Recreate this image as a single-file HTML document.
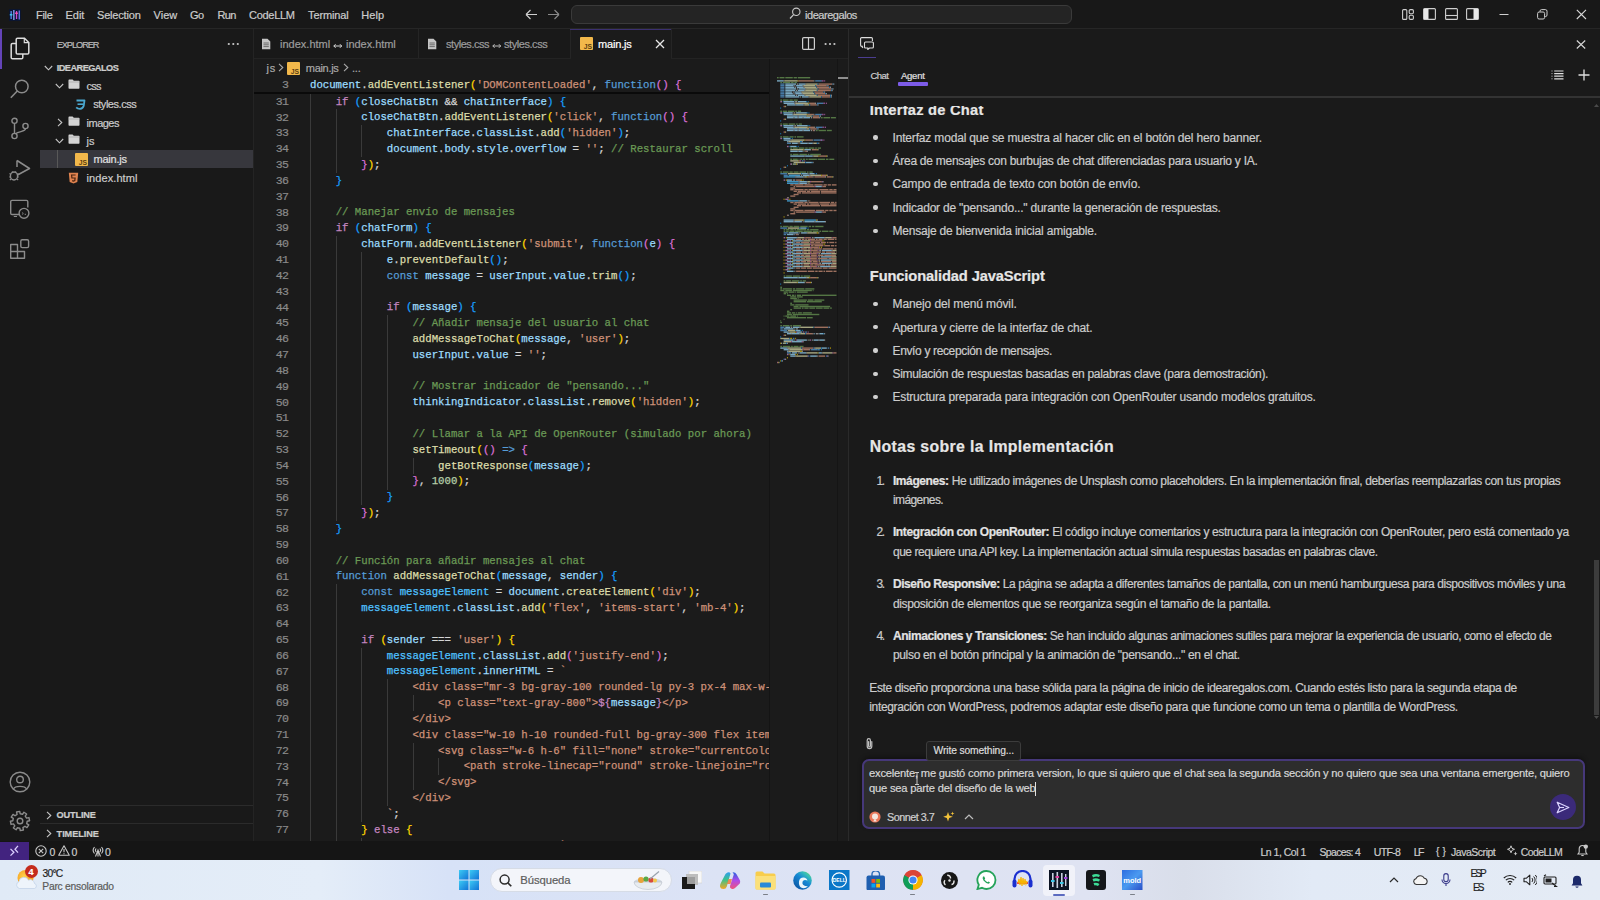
<!DOCTYPE html>
<html><head><meta charset="utf-8"><style>
html,body{margin:0;padding:0}
body{width:1600px;height:900px;overflow:hidden;position:relative;background:#1a1a1a;font-family:"Liberation Sans",sans-serif}
.t{position:absolute;white-space:pre;line-height:0;-webkit-text-stroke:0.2px currentColor}
.code{position:absolute;letter-spacing:-0.010px;white-space:pre;-webkit-text-stroke:0.25px currentColor;line-height:15.83px;height:15.83px;font-family:"Liberation Mono",monospace;font-size:10.7px;overflow:hidden}
b{font-weight:700}
</style></head><body>
<div style="position:absolute;left:0px;top:0px;width:1600px;height:28px;background:#181818;"></div>
<div style="position:absolute;left:0px;top:28px;width:1600px;height:1px;background:#262626;"></div>
<div style="position:absolute;left:0px;top:29px;width:40px;height:813px;background:#181818;"></div>
<div style="position:absolute;left:40px;top:29px;width:213px;height:813px;background:#191919;"></div>
<div style="position:absolute;left:253px;top:29px;width:1px;height:813px;background:#242424;"></div>
<div style="position:absolute;left:254px;top:29px;width:595px;height:29px;background:#191919;"></div>
<div style="position:absolute;left:254px;top:58px;width:595px;height:1px;background:#232323;"></div>
<div style="position:absolute;left:254px;top:59px;width:595px;height:783px;background:#1b1b1b;"></div>
<div style="position:absolute;left:848px;top:29px;width:1px;height:813px;background:#2a2a2a;"></div>
<div style="position:absolute;left:849px;top:29px;width:751px;height:813px;background:#1a1a1a;"></div>
<svg style="position:absolute;left:9px;top:9px;" width="12" height="12" viewBox="0 0 12 12"><rect x="0" y="0" width="12" height="12" fill="#0b1530"/><rect x="1.5" y="2" width="1.3" height="8" fill="#5b8cf0"/><rect x="4.2" y="1" width="1.3" height="10" fill="#8aa4ff"/><rect x="6.9" y="2" width="1.3" height="8" fill="#d04ad0"/><rect x="9.6" y="1.5" width="1.3" height="9" fill="#6a7cf0"/><rect x="0.8" y="5" width="2.6" height="1.5" fill="#3fc7e8"/><rect x="6.2" y="3.5" width="2.6" height="1.5" fill="#ff4fb0"/></svg>
<div class="t" id="t1" style="left:36.00px;top:14.79px;font-size:11px;color:#cccccc;font-weight:400;font-family:'Liberation Sans', sans-serif;letter-spacing:-0.311px;">File</div>
<div class="t" id="t2" style="left:65.60px;top:14.79px;font-size:11px;color:#cccccc;font-weight:400;font-family:'Liberation Sans', sans-serif;letter-spacing:-0.056px;">Edit</div>
<div class="t" id="t3" style="left:97.00px;top:14.79px;font-size:11px;color:#cccccc;font-weight:400;font-family:'Liberation Sans', sans-serif;letter-spacing:-0.183px;">Selection</div>
<div class="t" id="t4" style="left:153.50px;top:14.79px;font-size:11px;color:#cccccc;font-weight:400;font-family:'Liberation Sans', sans-serif;letter-spacing:0.048px;">View</div>
<div class="t" id="t5" style="left:189.90px;top:14.79px;font-size:11px;color:#cccccc;font-weight:400;font-family:'Liberation Sans', sans-serif;letter-spacing:-0.387px;">Go</div>
<div class="t" id="t6" style="left:217.40px;top:14.79px;font-size:11px;color:#cccccc;font-weight:400;font-family:'Liberation Sans', sans-serif;letter-spacing:-0.544px;">Run</div>
<div class="t" id="t7" style="left:249.00px;top:14.79px;font-size:11px;color:#cccccc;font-weight:400;font-family:'Liberation Sans', sans-serif;letter-spacing:-0.284px;">CodeLLM</div>
<div class="t" id="t8" style="left:308.00px;top:14.79px;font-size:11px;color:#cccccc;font-weight:400;font-family:'Liberation Sans', sans-serif;letter-spacing:-0.111px;">Terminal</div>
<div class="t" id="t9" style="left:361.30px;top:14.79px;font-size:11px;color:#cccccc;font-weight:400;font-family:'Liberation Sans', sans-serif;letter-spacing:0.058px;">Help</div>
<svg style="position:absolute;left:525px;top:9px;" width="13" height="11" viewBox="0 0 13 11"><path d="M1 5.5H12M1 5.5L5.5 1M1 5.5L5.5 10" stroke="#cfcfcf" stroke-width="1.1" fill="none"/></svg>
<svg style="position:absolute;left:547px;top:9px;" width="13" height="11" viewBox="0 0 13 11"><path d="M12 5.5H1M12 5.5L7.5 1M12 5.5L7.5 10" stroke="#8a8a8a" stroke-width="1.1" fill="none"/></svg>
<div style="position:absolute;left:571px;top:4.5px;width:501px;height:19.5px;box-sizing:border-box;border:1px solid #3a3a3a;border-radius:6px;background:#242424"></div>
<svg style="position:absolute;left:789px;top:7px;" width="12" height="13" viewBox="0 0 12 13"><circle cx="7.3" cy="4.8" r="3.7" stroke="#c8c8c8" stroke-width="1.1" fill="none"/><path d="M4.6 7.6L1 11.5" stroke="#c8c8c8" stroke-width="1.2"/></svg>
<div class="t" id="t10" style="left:805.00px;top:15.09px;font-size:11px;color:#cccccc;font-weight:400;font-family:'Liberation Sans', sans-serif;letter-spacing:-0.458px;">idearegalos</div>
<svg style="position:absolute;left:1402px;top:9px;" width="12" height="11" viewBox="0 0 12 11"><rect x="0.6" y="0.6" width="4.2" height="9.8" rx="1" stroke="#cfcfcf" fill="none" stroke-width="1.1"/><rect x="7.2" y="0.6" width="4.2" height="4.2" rx="1.2" stroke="#cfcfcf" fill="none" stroke-width="1.1"/><rect x="7.2" y="6.2" width="4.2" height="4.2" rx="1.2" stroke="#cfcfcf" fill="none" stroke-width="1.1"/></svg>
<svg style="position:absolute;left:1423px;top:8px;" width="13" height="12" viewBox="0 0 13 12"><rect x="0.6" y="0.6" width="11.8" height="10.8" rx="1" stroke="#cfcfcf" fill="none" stroke-width="1.1"/><rect x="1" y="1" width="4.5" height="10" fill="#e8e8e8"/></svg>
<svg style="position:absolute;left:1445px;top:8px;" width="13" height="12" viewBox="0 0 13 12"><rect x="0.6" y="0.6" width="11.8" height="10.8" rx="1" stroke="#cfcfcf" fill="none" stroke-width="1.1"/><path d="M1 7.5H12" stroke="#cfcfcf" stroke-width="1.1"/></svg>
<svg style="position:absolute;left:1466px;top:8px;" width="13" height="12" viewBox="0 0 13 12"><rect x="0.6" y="0.6" width="11.8" height="10.8" rx="1" stroke="#cfcfcf" fill="none" stroke-width="1.1"/><rect x="7.5" y="1" width="4.5" height="10" fill="#e8e8e8"/></svg>
<svg style="position:absolute;left:1499px;top:13px;" width="11" height="3" viewBox="0 0 11 3"><path d="M0.5 1.5H9.5" stroke="#cfcfcf" stroke-width="1"/></svg>
<svg style="position:absolute;left:1537px;top:9px;" width="11" height="11" viewBox="0 0 11 11"><rect x="0.6" y="3" width="7" height="7" rx="1.5" stroke="#cfcfcf" fill="none" stroke-width="1"/><path d="M3 2.8V2.2A1.6 1.6 0 0 1 4.6 0.6H8.4A1.6 1.6 0 0 1 10 2.2V6A1.6 1.6 0 0 1 8.4 7.6H7.8" stroke="#cfcfcf" fill="none" stroke-width="1"/></svg>
<svg style="position:absolute;left:1576px;top:9px;" width="11" height="11" viewBox="0 0 11 11"><path d="M0.8 0.8L10 10M10 0.8L0.8 10" stroke="#d8d8d8" stroke-width="1.1"/></svg>
<div style="position:absolute;left:0px;top:29px;width:2px;height:40px;background:#6444b8;"></div>
<svg style="position:absolute;left:9px;top:36px;" width="22" height="24" viewBox="0 0 22 24"><path d="M8.5 2.2H15.5L19.8 6.5V16.8A1.3 1.3 0 0 1 18.5 18.1H8.5A1.3 1.3 0 0 1 7.2 16.8V3.5A1.3 1.3 0 0 1 8.5 2.2Z" stroke="#dcdcdc" stroke-width="1.5" fill="none"/><path d="M15.3 2.4V6.7H19.6" stroke="#dcdcdc" stroke-width="1.2" fill="none"/><path d="M7.2 7.5H3.5A1.3 1.3 0 0 0 2.2 8.8V21.5A1.3 1.3 0 0 0 3.5 22.8H12.5A1.3 1.3 0 0 0 13.8 21.5V18.1" stroke="#dcdcdc" stroke-width="1.5" fill="none"/></svg>
<svg style="position:absolute;left:9px;top:78px;" width="22" height="22" viewBox="0 0 22 22"><circle cx="12.8" cy="8.5" r="6.3" stroke="#8b8b8b" stroke-width="1.5" fill="none"/><path d="M8.3 13L1.8 19.8" stroke="#8b8b8b" stroke-width="1.6"/></svg>
<svg style="position:absolute;left:9px;top:117px;" width="22" height="23" viewBox="0 0 22 23"><circle cx="5.5" cy="3.8" r="2.6" stroke="#8b8b8b" stroke-width="1.4" fill="none"/><circle cx="5.5" cy="19" r="2.6" stroke="#8b8b8b" stroke-width="1.4" fill="none"/><circle cx="16.5" cy="9" r="2.6" stroke="#8b8b8b" stroke-width="1.4" fill="none"/><path d="M5.5 6.4V16.4M16.5 11.6C16.5 15 10 14 6.5 16.8" stroke="#8b8b8b" stroke-width="1.4" fill="none"/></svg>
<svg style="position:absolute;left:8px;top:158px;" width="24" height="24" viewBox="0 0 24 24"><path d="M9 2.5L21.5 10.5L9.5 17" stroke="#8b8b8b" stroke-width="1.5" fill="none" stroke-linejoin="round"/><path d="M9 2.5V9" stroke="#8b8b8b" stroke-width="1.5"/><ellipse cx="6" cy="18" rx="3.6" ry="4" stroke="#8b8b8b" stroke-width="1.4" fill="none"/><path d="M1.5 15.5L3 16.5M1.2 19H2.6M1.8 22L3 21M10.5 15.5L9 16.5M10.8 19H9.4M10.2 22L9 21M4 13.5L5 14.6M8 13.5L7 14.6" stroke="#8b8b8b" stroke-width="1.1"/></svg>
<svg style="position:absolute;left:9px;top:199px;" width="22" height="22" viewBox="0 0 22 22"><path d="M10 15.5H3A1.3 1.3 0 0 1 1.7 14.2V2.7A1.3 1.3 0 0 1 3 1.4H17.5A1.3 1.3 0 0 1 18.8 2.7V8.5" stroke="#8b8b8b" stroke-width="1.4" fill="none"/><circle cx="15" cy="14.3" r="4.9" stroke="#8b8b8b" stroke-width="1.4" fill="none"/><path d="M13.2 13.6L14.3 14.5L13.2 15.4M15.7 15.3H17" stroke="#8b8b8b" stroke-width="1" fill="none"/><path d="M4.8 17.5H8" stroke="#8b8b8b" stroke-width="1"/></svg>
<svg style="position:absolute;left:9px;top:238px;" width="22" height="22" viewBox="0 0 22 22"><path d="M1.7 6.5H8.5V13.5H15.5V20.3H1.7Z M1.7 13.5H8.5V20.3" stroke="#8b8b8b" stroke-width="1.4" fill="none" stroke-linejoin="round"/><rect x="11.8" y="1.8" width="7.8" height="7.8" rx="1.4" stroke="#8b8b8b" stroke-width="1.4" fill="none"/></svg>
<svg style="position:absolute;left:9px;top:771px;" width="22" height="22" viewBox="0 0 22 22"><circle cx="11" cy="11" r="9.8" stroke="#8b8b8b" stroke-width="1.4" fill="none"/><circle cx="11" cy="8.5" r="3.3" stroke="#8b8b8b" stroke-width="1.4" fill="none"/><path d="M4.5 18C6 14.5 16 14.5 17.5 18" stroke="#8b8b8b" stroke-width="1.4" fill="none"/></svg>
<svg style="position:absolute;left:9px;top:810px;" width="22" height="22" viewBox="0 0 22 22"><polygon points="19.96,7.56 20.60,10.75 18.20,11.19 17.72,13.58 19.77,14.91 17.96,17.61 15.96,16.22 13.93,17.58 14.44,19.96 11.25,20.60 10.81,18.20 8.42,17.72 7.09,19.77 4.39,17.96 5.78,15.96 4.42,13.93 2.04,14.44 1.40,11.25 3.80,10.81 4.28,8.42 2.23,7.09 4.04,4.39 6.04,5.78 8.07,4.42 7.56,2.04 10.75,1.40 11.19,3.80 13.58,4.28 14.91,2.23 17.61,4.04 16.22,6.04 17.58,8.07" stroke="#8b8b8b" stroke-width="1.4" fill="none" stroke-linejoin="round"/><circle cx="11" cy="11" r="2.8" stroke="#8b8b8b" stroke-width="1.4" fill="none"/></svg>
<div class="t" id="t11" style="left:56.70px;top:45.01px;font-size:9.2px;color:#bbbbbb;font-weight:400;font-family:'Liberation Sans', sans-serif;letter-spacing:-1.035px;">EXPLORER</div>
<svg style="position:absolute;left:227px;top:42px;" width="13" height="4" viewBox="0 0 13 4"><circle cx="1.8" cy="2" r="1.1" fill="#c8c8c8"/><circle cx="6.3" cy="2" r="1.1" fill="#c8c8c8"/><circle cx="10.8" cy="2" r="1.1" fill="#c8c8c8"/></svg>
<svg style="position:absolute;left:44px;top:64.5px;" width="9" height="6" viewBox="0 0 9 6"><path d="M0.8 1L4.5 4.8L8.2 1" stroke="#c5c5c5" stroke-width="1.1" fill="none"/></svg>
<div class="t" id="t12" style="left:56.70px;top:68.11px;font-size:9.2px;color:#cccccc;font-weight:700;font-family:'Liberation Sans', sans-serif;letter-spacing:-0.529px;">IDEAREGALOS</div>
<svg style="position:absolute;left:55px;top:83px;" width="9" height="6" viewBox="0 0 9 6"><path d="M0.8 1L4.5 4.8L8.2 1" stroke="#c5c5c5" stroke-width="1.1" fill="none"/></svg>
<svg style="position:absolute;left:68px;top:79.0px;" width="12" height="10" viewBox="0 0 12 10"><path d="M0.5 1.2A0.7 0.7 0 0 1 1.2 0.5H4.6L5.8 1.8H10.8A0.7 0.7 0 0 1 11.5 2.5V9A0.7 0.7 0 0 1 10.8 9.7H1.2A0.7 0.7 0 0 1 0.5 9Z" fill="#d4d4d4"/><path d="M0.5 3H11.5" stroke="#9a9a9a" stroke-width="0.6"/></svg>
<div class="t" id="t13" style="left:86.60px;top:85.69px;font-size:11px;color:#cccccc;font-weight:400;font-family:'Liberation Sans', sans-serif;letter-spacing:-0.850px;">css</div>
<svg style="position:absolute;left:74.5px;top:98.5px;" width="11" height="11" viewBox="0 0 11 11"><path d="M1.5 1.5H9.5L8.8 6.5Q8.2 9.5 5 9.8Q2.5 9.8 1.2 8.3" stroke="#4aa8d0" stroke-width="1.8" fill="none" stroke-linejoin="round"/><path d="M2.5 5.2H8.6" stroke="#4aa8d0" stroke-width="1.6"/></svg>
<div class="t" id="t14" style="left:93.20px;top:104.39px;font-size:11px;color:#cccccc;font-weight:400;font-family:'Liberation Sans', sans-serif;letter-spacing:-0.454px;">styles.css</div>
<svg style="position:absolute;left:57px;top:118.0px;" width="6" height="9" viewBox="0 0 6 9"><path d="M1 0.8L4.8 4.5L1 8.2" stroke="#c5c5c5" stroke-width="1.1" fill="none"/></svg>
<svg style="position:absolute;left:68px;top:116.0px;" width="12" height="10" viewBox="0 0 12 10"><path d="M0.5 1.2A0.7 0.7 0 0 1 1.2 0.5H4.6L5.8 1.8H10.8A0.7 0.7 0 0 1 11.5 2.5V9A0.7 0.7 0 0 1 10.8 9.7H1.2A0.7 0.7 0 0 1 0.5 9Z" fill="#d4d4d4"/><path d="M0.5 3H11.5" stroke="#9a9a9a" stroke-width="0.6"/></svg>
<div class="t" id="t15" style="left:86.60px;top:122.69px;font-size:11px;color:#cccccc;font-weight:400;font-family:'Liberation Sans', sans-serif;letter-spacing:-0.534px;">images</div>
<svg style="position:absolute;left:55px;top:137.5px;" width="9" height="6" viewBox="0 0 9 6"><path d="M0.8 1L4.5 4.8L8.2 1" stroke="#c5c5c5" stroke-width="1.1" fill="none"/></svg>
<svg style="position:absolute;left:68px;top:134.0px;" width="12" height="10" viewBox="0 0 12 10"><path d="M0.5 1.2A0.7 0.7 0 0 1 1.2 0.5H4.6L5.8 1.8H10.8A0.7 0.7 0 0 1 11.5 2.5V9A0.7 0.7 0 0 1 10.8 9.7H1.2A0.7 0.7 0 0 1 0.5 9Z" fill="#d4d4d4"/><path d="M0.5 3H11.5" stroke="#9a9a9a" stroke-width="0.6"/></svg>
<div class="t" id="t16" style="left:86.60px;top:140.69px;font-size:11px;color:#cccccc;font-weight:400;font-family:'Liberation Sans', sans-serif;letter-spacing:-0.153px;">js</div>
<div style="position:absolute;left:40px;top:150px;width:213px;height:18px;background:#37373d;"></div>
<div style="position:absolute;left:57px;top:150px;width:1px;height:18px;background:#585858;"></div>
<svg style="position:absolute;left:75px;top:153px;" width="13" height="13" viewBox="0 0 13 13"><rect width="13" height="13" rx="1" fill="#f2b84b"/><text x="12" y="11.6" font-family="Liberation Sans" font-size="6.8" fill="#5a3e10" text-anchor="end" font-weight="bold">JS</text></svg>
<div class="t" id="t17" style="left:93.60px;top:159.19px;font-size:11px;color:#e0e0e0;font-weight:400;font-family:'Liberation Sans', sans-serif;letter-spacing:-0.257px;">main.js</div>
<svg style="position:absolute;left:67.5px;top:171.5px;" width="11" height="12" viewBox="0 0 11 12"><path d="M0.8 0.8H10.2L9.3 10L5.5 11.4L1.7 10Z" fill="#e0834f"/><path d="M7.6 3H3.6L3.9 6H7.1L6.8 8.6L5.5 9.1L4.2 8.6" stroke="#4a2410" stroke-width="1.2" fill="none"/></svg>
<div class="t" id="t18" style="left:86.60px;top:177.79px;font-size:11px;color:#cccccc;font-weight:400;font-family:'Liberation Sans', sans-serif;letter-spacing:0.073px;">index.html</div>
<div style="position:absolute;left:40px;top:805px;width:213px;height:1px;background:#2b2b2b;"></div>
<div style="position:absolute;left:40px;top:823px;width:213px;height:1px;background:#2b2b2b;"></div>
<svg style="position:absolute;left:46px;top:810.5px;" width="6" height="9" viewBox="0 0 6 9"><path d="M1 0.8L4.8 4.5L1 8.2" stroke="#c5c5c5" stroke-width="1.1" fill="none"/></svg>
<div class="t" id="t19" style="left:56.60px;top:815.41px;font-size:9.2px;color:#cccccc;font-weight:700;font-family:'Liberation Sans', sans-serif;letter-spacing:-0.171px;">OUTLINE</div>
<svg style="position:absolute;left:46px;top:828.7px;" width="6" height="9" viewBox="0 0 6 9"><path d="M1 0.8L4.8 4.5L1 8.2" stroke="#c5c5c5" stroke-width="1.1" fill="none"/></svg>
<div class="t" id="t20" style="left:56.60px;top:833.61px;font-size:9.2px;color:#cccccc;font-weight:700;font-family:'Liberation Sans', sans-serif;letter-spacing:-0.068px;">TIMELINE</div>
<div style="position:absolute;left:418px;top:29px;width:1px;height:29px;background:#252525;"></div>
<div style="position:absolute;left:570px;top:29px;width:1px;height:29px;background:#252525;"></div>
<div style="position:absolute;left:570px;top:28.5px;width:101px;height:1.5px;background:#3b3070;"></div>
<div style="position:absolute;left:571px;top:30px;width:100px;height:29px;background:#1b1b1b;"></div>
<div style="position:absolute;left:671px;top:29px;width:1px;height:29px;background:#252525;"></div>
<svg style="position:absolute;left:261px;top:38px;" width="10" height="12" viewBox="0 0 10 12"><path d="M1 0.7H6.5L9.3 3.5V11.3H1Z" fill="#c5c5c5"/><path d="M2.5 5H7.8M2.5 6.8H7.8M2.5 8.6H7.8" stroke="#555" stroke-width="0.8"/></svg>
<div class="t" id="t21" style="left:280.00px;top:44.49px;font-size:11px;color:#9d9d9d;font-weight:400;font-family:'Liberation Sans', sans-serif;letter-spacing:0.007px;">index.html</div>
<svg style="position:absolute;left:333px;top:42.5px;" width="9.5" height="6" viewBox="0 0 9.5 6"><path d="M0.8 3H8.7M2.6 1.2L0.8 3L2.6 4.8M6.9 1.2L8.7 3L6.9 4.8" stroke="#d8d8d8" stroke-width="1" fill="none"/></svg>
<div class="t" id="t22" style="left:346.00px;top:44.49px;font-size:11px;color:#9d9d9d;font-weight:400;font-family:'Liberation Sans', sans-serif;letter-spacing:-0.038px;">index.html</div>
<svg style="position:absolute;left:427px;top:38px;" width="10" height="12" viewBox="0 0 10 12"><path d="M1 0.7H6.5L9.3 3.5V11.3H1Z" fill="#c5c5c5"/><path d="M2.5 5H7.8M2.5 6.8H7.8M2.5 8.6H7.8" stroke="#555" stroke-width="0.8"/></svg>
<div class="t" id="t23" style="left:446.00px;top:44.49px;font-size:11px;color:#9d9d9d;font-weight:400;font-family:'Liberation Sans', sans-serif;letter-spacing:-0.454px;">styles.css</div>
<svg style="position:absolute;left:492px;top:42.5px;" width="9.5" height="6" viewBox="0 0 9.5 6"><path d="M0.8 3H8.7M2.6 1.2L0.8 3L2.6 4.8M6.9 1.2L8.7 3L6.9 4.8" stroke="#bdbdbd" stroke-width="1" fill="none"/></svg>
<div class="t" id="t24" style="left:504.00px;top:44.49px;font-size:11px;color:#9d9d9d;font-weight:400;font-family:'Liberation Sans', sans-serif;letter-spacing:-0.443px;">styles.css</div>
<svg style="position:absolute;left:579.6px;top:37.4px;" width="13" height="13" viewBox="0 0 13 13"><rect width="13" height="13" rx="1" fill="#f2b84b"/><text x="12" y="11.6" font-family="Liberation Sans" font-size="6.8" fill="#5a3e10" text-anchor="end" font-weight="bold">JS</text></svg>
<div class="t" id="t25" style="left:598.00px;top:44.49px;font-size:11px;color:#ffffff;font-weight:400;font-family:'Liberation Sans', sans-serif;letter-spacing:-0.174px;">main.js</div>
<svg style="position:absolute;left:654.5px;top:39px;" width="10" height="10" viewBox="0 0 10 10"><path d="M1 1L9 9M9 1L1 9" stroke="#e8e8e8" stroke-width="1.3"/></svg>
<svg style="position:absolute;left:802px;top:37px;" width="13" height="13" viewBox="0 0 13 13"><rect x="0.6" y="0.6" width="11.8" height="11.8" rx="1.2" stroke="#cfcfcf" stroke-width="1.2" fill="none"/><path d="M6.5 1V12.5" stroke="#cfcfcf" stroke-width="1.2"/></svg>
<svg style="position:absolute;left:824px;top:42px;" width="12" height="4" viewBox="0 0 12 4"><circle cx="1.6" cy="2" r="1.1" fill="#c8c8c8"/><circle cx="6" cy="2" r="1.1" fill="#c8c8c8"/><circle cx="10.4" cy="2" r="1.1" fill="#c8c8c8"/></svg>
<div class="t" id="t26" style="left:266.50px;top:67.69px;font-size:11px;color:#a9a9a9;font-weight:400;font-family:'Liberation Sans', sans-serif;letter-spacing:0.847px;">js</div>
<svg style="position:absolute;left:278px;top:63.0px;" width="6" height="9" viewBox="0 0 6 9"><path d="M1 0.8L4.8 4.5L1 8.2" stroke="#a9a9a9" stroke-width="1.1" fill="none"/></svg>
<svg style="position:absolute;left:287px;top:61.5px;" width="13" height="13" viewBox="0 0 13 13"><rect width="13" height="13" rx="1" fill="#f2b84b"/><text x="12" y="11.6" font-family="Liberation Sans" font-size="6.8" fill="#5a3e10" text-anchor="end" font-weight="bold">JS</text></svg>
<div class="t" id="t27" style="left:305.80px;top:67.69px;font-size:11px;color:#a9a9a9;font-weight:400;font-family:'Liberation Sans', sans-serif;letter-spacing:-0.307px;">main.js</div>
<svg style="position:absolute;left:343px;top:63.0px;" width="6" height="9" viewBox="0 0 6 9"><path d="M1 0.8L4.8 4.5L1 8.2" stroke="#a9a9a9" stroke-width="1.1" fill="none"/></svg>
<div class="t" id="t28" style="left:352.00px;top:67.69px;font-size:11px;color:#a9a9a9;font-weight:400;font-family:'Liberation Sans', sans-serif;letter-spacing:-0.186px;">...</div>
<div style="position:absolute;left:310.00px;top:93.60px;width:1px;height:16.13px;background:#3a3a3a;"></div>
<div style="position:absolute;left:310.00px;top:109.43px;width:1px;height:16.13px;background:#3a3a3a;"></div>
<div style="position:absolute;left:335.64px;top:109.43px;width:1px;height:16.13px;background:#3a3a3a;"></div>
<div style="position:absolute;left:310.00px;top:125.26px;width:1px;height:16.13px;background:#3a3a3a;"></div>
<div style="position:absolute;left:335.64px;top:125.26px;width:1px;height:16.13px;background:#3a3a3a;"></div>
<div style="position:absolute;left:361.28px;top:125.26px;width:1px;height:16.13px;background:#3a3a3a;"></div>
<div style="position:absolute;left:310.00px;top:141.09px;width:1px;height:16.13px;background:#3a3a3a;"></div>
<div style="position:absolute;left:335.64px;top:141.09px;width:1px;height:16.13px;background:#3a3a3a;"></div>
<div style="position:absolute;left:361.28px;top:141.09px;width:1px;height:16.13px;background:#3a3a3a;"></div>
<div style="position:absolute;left:310.00px;top:156.92px;width:1px;height:16.13px;background:#3a3a3a;"></div>
<div style="position:absolute;left:335.64px;top:156.92px;width:1px;height:16.13px;background:#3a3a3a;"></div>
<div style="position:absolute;left:310.00px;top:172.75px;width:1px;height:16.13px;background:#3a3a3a;"></div>
<div style="position:absolute;left:310.00px;top:188.58px;width:1px;height:16.13px;background:#3a3a3a;"></div>
<div style="position:absolute;left:310.00px;top:204.41px;width:1px;height:16.13px;background:#3a3a3a;"></div>
<div style="position:absolute;left:310.00px;top:220.24px;width:1px;height:16.13px;background:#3a3a3a;"></div>
<div style="position:absolute;left:310.00px;top:236.07px;width:1px;height:16.13px;background:#3a3a3a;"></div>
<div style="position:absolute;left:335.64px;top:236.07px;width:1px;height:16.13px;background:#3a3a3a;"></div>
<div style="position:absolute;left:310.00px;top:251.90px;width:1px;height:16.13px;background:#3a3a3a;"></div>
<div style="position:absolute;left:335.64px;top:251.90px;width:1px;height:16.13px;background:#3a3a3a;"></div>
<div style="position:absolute;left:361.28px;top:251.90px;width:1px;height:16.13px;background:#3a3a3a;"></div>
<div style="position:absolute;left:310.00px;top:267.73px;width:1px;height:16.13px;background:#3a3a3a;"></div>
<div style="position:absolute;left:335.64px;top:267.73px;width:1px;height:16.13px;background:#3a3a3a;"></div>
<div style="position:absolute;left:361.28px;top:267.73px;width:1px;height:16.13px;background:#3a3a3a;"></div>
<div style="position:absolute;left:310.00px;top:283.56px;width:1px;height:16.13px;background:#3a3a3a;"></div>
<div style="position:absolute;left:335.64px;top:283.56px;width:1px;height:16.13px;background:#3a3a3a;"></div>
<div style="position:absolute;left:361.28px;top:283.56px;width:1px;height:16.13px;background:#3a3a3a;"></div>
<div style="position:absolute;left:310.00px;top:299.39px;width:1px;height:16.13px;background:#3a3a3a;"></div>
<div style="position:absolute;left:335.64px;top:299.39px;width:1px;height:16.13px;background:#3a3a3a;"></div>
<div style="position:absolute;left:361.28px;top:299.39px;width:1px;height:16.13px;background:#3a3a3a;"></div>
<div style="position:absolute;left:310.00px;top:315.22px;width:1px;height:16.13px;background:#3a3a3a;"></div>
<div style="position:absolute;left:335.64px;top:315.22px;width:1px;height:16.13px;background:#3a3a3a;"></div>
<div style="position:absolute;left:361.28px;top:315.22px;width:1px;height:16.13px;background:#3a3a3a;"></div>
<div style="position:absolute;left:386.92px;top:315.22px;width:1px;height:16.13px;background:#3a3a3a;"></div>
<div style="position:absolute;left:310.00px;top:331.05px;width:1px;height:16.13px;background:#3a3a3a;"></div>
<div style="position:absolute;left:335.64px;top:331.05px;width:1px;height:16.13px;background:#3a3a3a;"></div>
<div style="position:absolute;left:361.28px;top:331.05px;width:1px;height:16.13px;background:#3a3a3a;"></div>
<div style="position:absolute;left:386.92px;top:331.05px;width:1px;height:16.13px;background:#3a3a3a;"></div>
<div style="position:absolute;left:310.00px;top:346.88px;width:1px;height:16.13px;background:#3a3a3a;"></div>
<div style="position:absolute;left:335.64px;top:346.88px;width:1px;height:16.13px;background:#3a3a3a;"></div>
<div style="position:absolute;left:361.28px;top:346.88px;width:1px;height:16.13px;background:#3a3a3a;"></div>
<div style="position:absolute;left:386.92px;top:346.88px;width:1px;height:16.13px;background:#3a3a3a;"></div>
<div style="position:absolute;left:310.00px;top:362.71px;width:1px;height:16.13px;background:#3a3a3a;"></div>
<div style="position:absolute;left:335.64px;top:362.71px;width:1px;height:16.13px;background:#3a3a3a;"></div>
<div style="position:absolute;left:361.28px;top:362.71px;width:1px;height:16.13px;background:#3a3a3a;"></div>
<div style="position:absolute;left:386.92px;top:362.71px;width:1px;height:16.13px;background:#3a3a3a;"></div>
<div style="position:absolute;left:310.00px;top:378.54px;width:1px;height:16.13px;background:#3a3a3a;"></div>
<div style="position:absolute;left:335.64px;top:378.54px;width:1px;height:16.13px;background:#3a3a3a;"></div>
<div style="position:absolute;left:361.28px;top:378.54px;width:1px;height:16.13px;background:#3a3a3a;"></div>
<div style="position:absolute;left:386.92px;top:378.54px;width:1px;height:16.13px;background:#3a3a3a;"></div>
<div style="position:absolute;left:310.00px;top:394.37px;width:1px;height:16.13px;background:#3a3a3a;"></div>
<div style="position:absolute;left:335.64px;top:394.37px;width:1px;height:16.13px;background:#3a3a3a;"></div>
<div style="position:absolute;left:361.28px;top:394.37px;width:1px;height:16.13px;background:#3a3a3a;"></div>
<div style="position:absolute;left:386.92px;top:394.37px;width:1px;height:16.13px;background:#3a3a3a;"></div>
<div style="position:absolute;left:310.00px;top:410.20px;width:1px;height:16.13px;background:#3a3a3a;"></div>
<div style="position:absolute;left:335.64px;top:410.20px;width:1px;height:16.13px;background:#3a3a3a;"></div>
<div style="position:absolute;left:361.28px;top:410.20px;width:1px;height:16.13px;background:#3a3a3a;"></div>
<div style="position:absolute;left:386.92px;top:410.20px;width:1px;height:16.13px;background:#3a3a3a;"></div>
<div style="position:absolute;left:310.00px;top:426.03px;width:1px;height:16.13px;background:#3a3a3a;"></div>
<div style="position:absolute;left:335.64px;top:426.03px;width:1px;height:16.13px;background:#3a3a3a;"></div>
<div style="position:absolute;left:361.28px;top:426.03px;width:1px;height:16.13px;background:#3a3a3a;"></div>
<div style="position:absolute;left:386.92px;top:426.03px;width:1px;height:16.13px;background:#3a3a3a;"></div>
<div style="position:absolute;left:310.00px;top:441.86px;width:1px;height:16.13px;background:#3a3a3a;"></div>
<div style="position:absolute;left:335.64px;top:441.86px;width:1px;height:16.13px;background:#3a3a3a;"></div>
<div style="position:absolute;left:361.28px;top:441.86px;width:1px;height:16.13px;background:#3a3a3a;"></div>
<div style="position:absolute;left:386.92px;top:441.86px;width:1px;height:16.13px;background:#3a3a3a;"></div>
<div style="position:absolute;left:310.00px;top:457.69px;width:1px;height:16.13px;background:#3a3a3a;"></div>
<div style="position:absolute;left:335.64px;top:457.69px;width:1px;height:16.13px;background:#3a3a3a;"></div>
<div style="position:absolute;left:361.28px;top:457.69px;width:1px;height:16.13px;background:#3a3a3a;"></div>
<div style="position:absolute;left:386.92px;top:457.69px;width:1px;height:16.13px;background:#3a3a3a;"></div>
<div style="position:absolute;left:412.56px;top:457.69px;width:1px;height:16.13px;background:#3a3a3a;"></div>
<div style="position:absolute;left:310.00px;top:473.52px;width:1px;height:16.13px;background:#3a3a3a;"></div>
<div style="position:absolute;left:335.64px;top:473.52px;width:1px;height:16.13px;background:#3a3a3a;"></div>
<div style="position:absolute;left:361.28px;top:473.52px;width:1px;height:16.13px;background:#3a3a3a;"></div>
<div style="position:absolute;left:386.92px;top:473.52px;width:1px;height:16.13px;background:#3a3a3a;"></div>
<div style="position:absolute;left:310.00px;top:489.35px;width:1px;height:16.13px;background:#3a3a3a;"></div>
<div style="position:absolute;left:335.64px;top:489.35px;width:1px;height:16.13px;background:#3a3a3a;"></div>
<div style="position:absolute;left:361.28px;top:489.35px;width:1px;height:16.13px;background:#3a3a3a;"></div>
<div style="position:absolute;left:310.00px;top:505.18px;width:1px;height:16.13px;background:#3a3a3a;"></div>
<div style="position:absolute;left:335.64px;top:505.18px;width:1px;height:16.13px;background:#3a3a3a;"></div>
<div style="position:absolute;left:310.00px;top:521.01px;width:1px;height:16.13px;background:#3a3a3a;"></div>
<div style="position:absolute;left:310.00px;top:536.84px;width:1px;height:16.13px;background:#3a3a3a;"></div>
<div style="position:absolute;left:310.00px;top:552.67px;width:1px;height:16.13px;background:#3a3a3a;"></div>
<div style="position:absolute;left:310.00px;top:568.50px;width:1px;height:16.13px;background:#3a3a3a;"></div>
<div style="position:absolute;left:310.00px;top:584.33px;width:1px;height:16.13px;background:#3a3a3a;"></div>
<div style="position:absolute;left:335.64px;top:584.33px;width:1px;height:16.13px;background:#3a3a3a;"></div>
<div style="position:absolute;left:310.00px;top:600.16px;width:1px;height:16.13px;background:#3a3a3a;"></div>
<div style="position:absolute;left:335.64px;top:600.16px;width:1px;height:16.13px;background:#3a3a3a;"></div>
<div style="position:absolute;left:310.00px;top:615.99px;width:1px;height:16.13px;background:#3a3a3a;"></div>
<div style="position:absolute;left:335.64px;top:615.99px;width:1px;height:16.13px;background:#3a3a3a;"></div>
<div style="position:absolute;left:310.00px;top:631.82px;width:1px;height:16.13px;background:#3a3a3a;"></div>
<div style="position:absolute;left:335.64px;top:631.82px;width:1px;height:16.13px;background:#3a3a3a;"></div>
<div style="position:absolute;left:310.00px;top:647.65px;width:1px;height:16.13px;background:#3a3a3a;"></div>
<div style="position:absolute;left:335.64px;top:647.65px;width:1px;height:16.13px;background:#3a3a3a;"></div>
<div style="position:absolute;left:361.28px;top:647.65px;width:1px;height:16.13px;background:#3a3a3a;"></div>
<div style="position:absolute;left:310.00px;top:663.48px;width:1px;height:16.13px;background:#3a3a3a;"></div>
<div style="position:absolute;left:335.64px;top:663.48px;width:1px;height:16.13px;background:#3a3a3a;"></div>
<div style="position:absolute;left:361.28px;top:663.48px;width:1px;height:16.13px;background:#3a3a3a;"></div>
<div style="position:absolute;left:310.00px;top:679.31px;width:1px;height:16.13px;background:#3a3a3a;"></div>
<div style="position:absolute;left:335.64px;top:679.31px;width:1px;height:16.13px;background:#3a3a3a;"></div>
<div style="position:absolute;left:361.28px;top:679.31px;width:1px;height:16.13px;background:#3a3a3a;"></div>
<div style="position:absolute;left:386.92px;top:679.31px;width:1px;height:16.13px;background:#3a3a3a;"></div>
<div style="position:absolute;left:310.00px;top:695.14px;width:1px;height:16.13px;background:#3a3a3a;"></div>
<div style="position:absolute;left:335.64px;top:695.14px;width:1px;height:16.13px;background:#3a3a3a;"></div>
<div style="position:absolute;left:361.28px;top:695.14px;width:1px;height:16.13px;background:#3a3a3a;"></div>
<div style="position:absolute;left:386.92px;top:695.14px;width:1px;height:16.13px;background:#3a3a3a;"></div>
<div style="position:absolute;left:412.56px;top:695.14px;width:1px;height:16.13px;background:#3a3a3a;"></div>
<div style="position:absolute;left:310.00px;top:710.97px;width:1px;height:16.13px;background:#3a3a3a;"></div>
<div style="position:absolute;left:335.64px;top:710.97px;width:1px;height:16.13px;background:#3a3a3a;"></div>
<div style="position:absolute;left:361.28px;top:710.97px;width:1px;height:16.13px;background:#3a3a3a;"></div>
<div style="position:absolute;left:386.92px;top:710.97px;width:1px;height:16.13px;background:#3a3a3a;"></div>
<div style="position:absolute;left:310.00px;top:726.80px;width:1px;height:16.13px;background:#3a3a3a;"></div>
<div style="position:absolute;left:335.64px;top:726.80px;width:1px;height:16.13px;background:#3a3a3a;"></div>
<div style="position:absolute;left:361.28px;top:726.80px;width:1px;height:16.13px;background:#3a3a3a;"></div>
<div style="position:absolute;left:386.92px;top:726.80px;width:1px;height:16.13px;background:#3a3a3a;"></div>
<div style="position:absolute;left:310.00px;top:742.63px;width:1px;height:16.13px;background:#3a3a3a;"></div>
<div style="position:absolute;left:335.64px;top:742.63px;width:1px;height:16.13px;background:#3a3a3a;"></div>
<div style="position:absolute;left:361.28px;top:742.63px;width:1px;height:16.13px;background:#3a3a3a;"></div>
<div style="position:absolute;left:386.92px;top:742.63px;width:1px;height:16.13px;background:#3a3a3a;"></div>
<div style="position:absolute;left:412.56px;top:742.63px;width:1px;height:16.13px;background:#3a3a3a;"></div>
<div style="position:absolute;left:310.00px;top:758.46px;width:1px;height:16.13px;background:#3a3a3a;"></div>
<div style="position:absolute;left:335.64px;top:758.46px;width:1px;height:16.13px;background:#3a3a3a;"></div>
<div style="position:absolute;left:361.28px;top:758.46px;width:1px;height:16.13px;background:#3a3a3a;"></div>
<div style="position:absolute;left:386.92px;top:758.46px;width:1px;height:16.13px;background:#3a3a3a;"></div>
<div style="position:absolute;left:412.56px;top:758.46px;width:1px;height:16.13px;background:#3a3a3a;"></div>
<div style="position:absolute;left:438.20px;top:758.46px;width:1px;height:16.13px;background:#3a3a3a;"></div>
<div style="position:absolute;left:310.00px;top:774.29px;width:1px;height:16.13px;background:#3a3a3a;"></div>
<div style="position:absolute;left:335.64px;top:774.29px;width:1px;height:16.13px;background:#3a3a3a;"></div>
<div style="position:absolute;left:361.28px;top:774.29px;width:1px;height:16.13px;background:#3a3a3a;"></div>
<div style="position:absolute;left:386.92px;top:774.29px;width:1px;height:16.13px;background:#3a3a3a;"></div>
<div style="position:absolute;left:412.56px;top:774.29px;width:1px;height:16.13px;background:#3a3a3a;"></div>
<div style="position:absolute;left:310.00px;top:790.12px;width:1px;height:16.13px;background:#3a3a3a;"></div>
<div style="position:absolute;left:335.64px;top:790.12px;width:1px;height:16.13px;background:#3a3a3a;"></div>
<div style="position:absolute;left:361.28px;top:790.12px;width:1px;height:16.13px;background:#3a3a3a;"></div>
<div style="position:absolute;left:386.92px;top:790.12px;width:1px;height:16.13px;background:#3a3a3a;"></div>
<div style="position:absolute;left:310.00px;top:805.95px;width:1px;height:16.13px;background:#3a3a3a;"></div>
<div style="position:absolute;left:335.64px;top:805.95px;width:1px;height:16.13px;background:#3a3a3a;"></div>
<div style="position:absolute;left:361.28px;top:805.95px;width:1px;height:16.13px;background:#3a3a3a;"></div>
<div style="position:absolute;left:310.00px;top:821.78px;width:1px;height:16.13px;background:#3a3a3a;"></div>
<div style="position:absolute;left:335.64px;top:821.78px;width:1px;height:16.13px;background:#3a3a3a;"></div>
<div style="position:absolute;left:310.00px;top:837.61px;width:1px;height:16.13px;background:#3a3a3a;"></div>
<div style="position:absolute;left:335.64px;top:837.61px;width:1px;height:16.13px;background:#3a3a3a;"></div>
<div style="position:absolute;left:361.28px;top:837.61px;width:1px;height:16.13px;background:#3a3a3a;"></div>
<div class="code" style="left:310.00px;top:94.54px;width:459.00px"><span style="color:#d4d4d4">    </span><span style="color:#c586c0">if</span><span style="color:#d4d4d4"> </span><span style="color:#179fff">(</span><span style="color:#9cdcfe">closeChatBtn</span><span style="color:#d4d4d4"> </span><span style="color:#d4d4d4">&amp;</span><span style="color:#d4d4d4">&amp;</span><span style="color:#d4d4d4"> </span><span style="color:#9cdcfe">chatInterface</span><span style="color:#179fff">)</span><span style="color:#d4d4d4"> </span><span style="color:#179fff">{</span></div>
<div class="t" id="t29" style="right:1311.50px;top:101.81px;font-size:11.6px;color:#8a8a8a;font-weight:400;font-family:'Liberation Mono', monospace;letter-spacing:-0.550px">31</div>
<div class="code" style="left:310.00px;top:110.37px;width:459.00px"><span style="color:#d4d4d4">        </span><span style="color:#9cdcfe">closeChatBtn</span><span style="color:#d4d4d4">.</span><span style="color:#dcdcaa">addEventListener</span><span style="color:#ffd700">(</span><span style="color:#ce9178">'click'</span><span style="color:#d4d4d4">,</span><span style="color:#d4d4d4"> </span><span style="color:#569cd6">function</span><span style="color:#da70d6">(</span><span style="color:#da70d6">)</span><span style="color:#d4d4d4"> </span><span style="color:#da70d6">{</span></div>
<div class="t" id="t30" style="right:1311.50px;top:117.64px;font-size:11.6px;color:#8a8a8a;font-weight:400;font-family:'Liberation Mono', monospace;letter-spacing:-0.550px">32</div>
<div class="code" style="left:310.00px;top:126.20px;width:459.00px"><span style="color:#d4d4d4">            </span><span style="color:#9cdcfe">chatInterface</span><span style="color:#d4d4d4">.</span><span style="color:#9cdcfe">classList</span><span style="color:#d4d4d4">.</span><span style="color:#dcdcaa">add</span><span style="color:#179fff">(</span><span style="color:#ce9178">'hidden'</span><span style="color:#179fff">)</span><span style="color:#d4d4d4">;</span></div>
<div class="t" id="t31" style="right:1311.50px;top:133.47px;font-size:11.6px;color:#8a8a8a;font-weight:400;font-family:'Liberation Mono', monospace;letter-spacing:-0.550px">33</div>
<div class="code" style="left:310.00px;top:142.03px;width:459.00px"><span style="color:#d4d4d4">            </span><span style="color:#9cdcfe">document</span><span style="color:#d4d4d4">.</span><span style="color:#9cdcfe">body</span><span style="color:#d4d4d4">.</span><span style="color:#9cdcfe">style</span><span style="color:#d4d4d4">.</span><span style="color:#9cdcfe">overflow</span><span style="color:#d4d4d4"> </span><span style="color:#d4d4d4">=</span><span style="color:#d4d4d4"> </span><span style="color:#ce9178">''</span><span style="color:#d4d4d4">;</span><span style="color:#d4d4d4"> </span><span style="color:#6a9955">// Restaurar scroll</span></div>
<div class="t" id="t32" style="right:1311.50px;top:149.30px;font-size:11.6px;color:#8a8a8a;font-weight:400;font-family:'Liberation Mono', monospace;letter-spacing:-0.550px">34</div>
<div class="code" style="left:310.00px;top:157.86px;width:459.00px"><span style="color:#d4d4d4">        </span><span style="color:#da70d6">}</span><span style="color:#ffd700">)</span><span style="color:#d4d4d4">;</span></div>
<div class="t" id="t33" style="right:1311.50px;top:165.13px;font-size:11.6px;color:#8a8a8a;font-weight:400;font-family:'Liberation Mono', monospace;letter-spacing:-0.550px">35</div>
<div class="code" style="left:310.00px;top:173.69px;width:459.00px"><span style="color:#d4d4d4">    </span><span style="color:#179fff">}</span></div>
<div class="t" id="t34" style="right:1311.50px;top:180.96px;font-size:11.6px;color:#8a8a8a;font-weight:400;font-family:'Liberation Mono', monospace;letter-spacing:-0.550px">36</div>
<div class="code" style="left:310.00px;top:189.52px;width:459.00px"></div>
<div class="t" id="t35" style="right:1311.50px;top:196.79px;font-size:11.6px;color:#8a8a8a;font-weight:400;font-family:'Liberation Mono', monospace;letter-spacing:-0.550px">37</div>
<div class="code" style="left:310.00px;top:205.35px;width:459.00px"><span style="color:#d4d4d4">    </span><span style="color:#6a9955">// Manejar envío de mensajes</span></div>
<div class="t" id="t36" style="right:1311.50px;top:212.62px;font-size:11.6px;color:#8a8a8a;font-weight:400;font-family:'Liberation Mono', monospace;letter-spacing:-0.550px">38</div>
<div class="code" style="left:310.00px;top:221.18px;width:459.00px"><span style="color:#d4d4d4">    </span><span style="color:#c586c0">if</span><span style="color:#d4d4d4"> </span><span style="color:#179fff">(</span><span style="color:#9cdcfe">chatForm</span><span style="color:#179fff">)</span><span style="color:#d4d4d4"> </span><span style="color:#179fff">{</span></div>
<div class="t" id="t37" style="right:1311.50px;top:228.45px;font-size:11.6px;color:#8a8a8a;font-weight:400;font-family:'Liberation Mono', monospace;letter-spacing:-0.550px">39</div>
<div class="code" style="left:310.00px;top:237.01px;width:459.00px"><span style="color:#d4d4d4">        </span><span style="color:#9cdcfe">chatForm</span><span style="color:#d4d4d4">.</span><span style="color:#dcdcaa">addEventListener</span><span style="color:#ffd700">(</span><span style="color:#ce9178">'submit'</span><span style="color:#d4d4d4">,</span><span style="color:#d4d4d4"> </span><span style="color:#569cd6">function</span><span style="color:#da70d6">(</span><span style="color:#9cdcfe">e</span><span style="color:#da70d6">)</span><span style="color:#d4d4d4"> </span><span style="color:#da70d6">{</span></div>
<div class="t" id="t38" style="right:1311.50px;top:244.28px;font-size:11.6px;color:#8a8a8a;font-weight:400;font-family:'Liberation Mono', monospace;letter-spacing:-0.550px">40</div>
<div class="code" style="left:310.00px;top:252.84px;width:459.00px"><span style="color:#d4d4d4">            </span><span style="color:#9cdcfe">e</span><span style="color:#d4d4d4">.</span><span style="color:#dcdcaa">preventDefault</span><span style="color:#179fff">(</span><span style="color:#179fff">)</span><span style="color:#d4d4d4">;</span></div>
<div class="t" id="t39" style="right:1311.50px;top:260.11px;font-size:11.6px;color:#8a8a8a;font-weight:400;font-family:'Liberation Mono', monospace;letter-spacing:-0.550px">41</div>
<div class="code" style="left:310.00px;top:268.67px;width:459.00px"><span style="color:#d4d4d4">            </span><span style="color:#569cd6">const</span><span style="color:#d4d4d4"> </span><span style="color:#9cdcfe">message</span><span style="color:#d4d4d4"> </span><span style="color:#d4d4d4">=</span><span style="color:#d4d4d4"> </span><span style="color:#9cdcfe">userInput</span><span style="color:#d4d4d4">.</span><span style="color:#9cdcfe">value</span><span style="color:#d4d4d4">.</span><span style="color:#dcdcaa">trim</span><span style="color:#179fff">(</span><span style="color:#179fff">)</span><span style="color:#d4d4d4">;</span></div>
<div class="t" id="t40" style="right:1311.50px;top:275.94px;font-size:11.6px;color:#8a8a8a;font-weight:400;font-family:'Liberation Mono', monospace;letter-spacing:-0.550px">42</div>
<div class="code" style="left:310.00px;top:284.50px;width:459.00px"></div>
<div class="t" id="t41" style="right:1311.50px;top:291.77px;font-size:11.6px;color:#8a8a8a;font-weight:400;font-family:'Liberation Mono', monospace;letter-spacing:-0.550px">43</div>
<div class="code" style="left:310.00px;top:300.33px;width:459.00px"><span style="color:#d4d4d4">            </span><span style="color:#c586c0">if</span><span style="color:#d4d4d4"> </span><span style="color:#179fff">(</span><span style="color:#9cdcfe">message</span><span style="color:#179fff">)</span><span style="color:#d4d4d4"> </span><span style="color:#179fff">{</span></div>
<div class="t" id="t42" style="right:1311.50px;top:307.60px;font-size:11.6px;color:#8a8a8a;font-weight:400;font-family:'Liberation Mono', monospace;letter-spacing:-0.550px">44</div>
<div class="code" style="left:310.00px;top:316.16px;width:459.00px"><span style="color:#d4d4d4">                </span><span style="color:#6a9955">// Añadir mensaje del usuario al chat</span></div>
<div class="t" id="t43" style="right:1311.50px;top:323.43px;font-size:11.6px;color:#8a8a8a;font-weight:400;font-family:'Liberation Mono', monospace;letter-spacing:-0.550px">45</div>
<div class="code" style="left:310.00px;top:331.99px;width:459.00px"><span style="color:#d4d4d4">                </span><span style="color:#dcdcaa">addMessageToChat</span><span style="color:#ffd700">(</span><span style="color:#9cdcfe">message</span><span style="color:#d4d4d4">,</span><span style="color:#d4d4d4"> </span><span style="color:#ce9178">'user'</span><span style="color:#ffd700">)</span><span style="color:#d4d4d4">;</span></div>
<div class="t" id="t44" style="right:1311.50px;top:339.26px;font-size:11.6px;color:#8a8a8a;font-weight:400;font-family:'Liberation Mono', monospace;letter-spacing:-0.550px">46</div>
<div class="code" style="left:310.00px;top:347.82px;width:459.00px"><span style="color:#d4d4d4">                </span><span style="color:#9cdcfe">userInput</span><span style="color:#d4d4d4">.</span><span style="color:#9cdcfe">value</span><span style="color:#d4d4d4"> </span><span style="color:#d4d4d4">=</span><span style="color:#d4d4d4"> </span><span style="color:#ce9178">''</span><span style="color:#d4d4d4">;</span></div>
<div class="t" id="t45" style="right:1311.50px;top:355.09px;font-size:11.6px;color:#8a8a8a;font-weight:400;font-family:'Liberation Mono', monospace;letter-spacing:-0.550px">47</div>
<div class="code" style="left:310.00px;top:363.65px;width:459.00px"></div>
<div class="t" id="t46" style="right:1311.50px;top:370.92px;font-size:11.6px;color:#8a8a8a;font-weight:400;font-family:'Liberation Mono', monospace;letter-spacing:-0.550px">48</div>
<div class="code" style="left:310.00px;top:379.48px;width:459.00px"><span style="color:#d4d4d4">                </span><span style="color:#6a9955">// Mostrar indicador de "pensando..."</span></div>
<div class="t" id="t47" style="right:1311.50px;top:386.75px;font-size:11.6px;color:#8a8a8a;font-weight:400;font-family:'Liberation Mono', monospace;letter-spacing:-0.550px">49</div>
<div class="code" style="left:310.00px;top:395.31px;width:459.00px"><span style="color:#d4d4d4">                </span><span style="color:#9cdcfe">thinkingIndicator</span><span style="color:#d4d4d4">.</span><span style="color:#9cdcfe">classList</span><span style="color:#d4d4d4">.</span><span style="color:#dcdcaa">remove</span><span style="color:#ffd700">(</span><span style="color:#ce9178">'hidden'</span><span style="color:#ffd700">)</span><span style="color:#d4d4d4">;</span></div>
<div class="t" id="t48" style="right:1311.50px;top:402.58px;font-size:11.6px;color:#8a8a8a;font-weight:400;font-family:'Liberation Mono', monospace;letter-spacing:-0.550px">50</div>
<div class="code" style="left:310.00px;top:411.14px;width:459.00px"></div>
<div class="t" id="t49" style="right:1311.50px;top:418.41px;font-size:11.6px;color:#8a8a8a;font-weight:400;font-family:'Liberation Mono', monospace;letter-spacing:-0.550px">51</div>
<div class="code" style="left:310.00px;top:426.97px;width:459.00px"><span style="color:#d4d4d4">                </span><span style="color:#6a9955">// Llamar a la API de OpenRouter (simulado por ahora)</span></div>
<div class="t" id="t50" style="right:1311.50px;top:434.24px;font-size:11.6px;color:#8a8a8a;font-weight:400;font-family:'Liberation Mono', monospace;letter-spacing:-0.550px">52</div>
<div class="code" style="left:310.00px;top:442.80px;width:459.00px"><span style="color:#d4d4d4">                </span><span style="color:#dcdcaa">setTimeout</span><span style="color:#ffd700">(</span><span style="color:#da70d6">(</span><span style="color:#da70d6">)</span><span style="color:#d4d4d4"> </span><span style="color:#569cd6">=&gt;</span><span style="color:#d4d4d4"> </span><span style="color:#da70d6">{</span></div>
<div class="t" id="t51" style="right:1311.50px;top:450.07px;font-size:11.6px;color:#8a8a8a;font-weight:400;font-family:'Liberation Mono', monospace;letter-spacing:-0.550px">53</div>
<div class="code" style="left:310.00px;top:458.63px;width:459.00px"><span style="color:#d4d4d4">                    </span><span style="color:#dcdcaa">getBotResponse</span><span style="color:#179fff">(</span><span style="color:#9cdcfe">message</span><span style="color:#179fff">)</span><span style="color:#d4d4d4">;</span></div>
<div class="t" id="t52" style="right:1311.50px;top:465.90px;font-size:11.6px;color:#8a8a8a;font-weight:400;font-family:'Liberation Mono', monospace;letter-spacing:-0.550px">54</div>
<div class="code" style="left:310.00px;top:474.46px;width:459.00px"><span style="color:#d4d4d4">                </span><span style="color:#da70d6">}</span><span style="color:#d4d4d4">,</span><span style="color:#d4d4d4"> </span><span style="color:#b5cea8">1000</span><span style="color:#ffd700">)</span><span style="color:#d4d4d4">;</span></div>
<div class="t" id="t53" style="right:1311.50px;top:481.73px;font-size:11.6px;color:#8a8a8a;font-weight:400;font-family:'Liberation Mono', monospace;letter-spacing:-0.550px">55</div>
<div class="code" style="left:310.00px;top:490.29px;width:459.00px"><span style="color:#d4d4d4">            </span><span style="color:#179fff">}</span></div>
<div class="t" id="t54" style="right:1311.50px;top:497.56px;font-size:11.6px;color:#8a8a8a;font-weight:400;font-family:'Liberation Mono', monospace;letter-spacing:-0.550px">56</div>
<div class="code" style="left:310.00px;top:506.12px;width:459.00px"><span style="color:#d4d4d4">        </span><span style="color:#da70d6">}</span><span style="color:#ffd700">)</span><span style="color:#d4d4d4">;</span></div>
<div class="t" id="t55" style="right:1311.50px;top:513.39px;font-size:11.6px;color:#8a8a8a;font-weight:400;font-family:'Liberation Mono', monospace;letter-spacing:-0.550px">57</div>
<div class="code" style="left:310.00px;top:521.95px;width:459.00px"><span style="color:#d4d4d4">    </span><span style="color:#179fff">}</span></div>
<div class="t" id="t56" style="right:1311.50px;top:529.22px;font-size:11.6px;color:#8a8a8a;font-weight:400;font-family:'Liberation Mono', monospace;letter-spacing:-0.550px">58</div>
<div class="code" style="left:310.00px;top:537.78px;width:459.00px"></div>
<div class="t" id="t57" style="right:1311.50px;top:545.05px;font-size:11.6px;color:#8a8a8a;font-weight:400;font-family:'Liberation Mono', monospace;letter-spacing:-0.550px">59</div>
<div class="code" style="left:310.00px;top:553.61px;width:459.00px"><span style="color:#d4d4d4">    </span><span style="color:#6a9955">// Función para añadir mensajes al chat</span></div>
<div class="t" id="t58" style="right:1311.50px;top:560.88px;font-size:11.6px;color:#8a8a8a;font-weight:400;font-family:'Liberation Mono', monospace;letter-spacing:-0.550px">60</div>
<div class="code" style="left:310.00px;top:569.44px;width:459.00px"><span style="color:#d4d4d4">    </span><span style="color:#569cd6">function</span><span style="color:#d4d4d4"> </span><span style="color:#dcdcaa">addMessageToChat</span><span style="color:#179fff">(</span><span style="color:#9cdcfe">message</span><span style="color:#d4d4d4">,</span><span style="color:#d4d4d4"> </span><span style="color:#9cdcfe">sender</span><span style="color:#179fff">)</span><span style="color:#d4d4d4"> </span><span style="color:#179fff">{</span></div>
<div class="t" id="t59" style="right:1311.50px;top:576.71px;font-size:11.6px;color:#8a8a8a;font-weight:400;font-family:'Liberation Mono', monospace;letter-spacing:-0.550px">61</div>
<div class="code" style="left:310.00px;top:585.27px;width:459.00px"><span style="color:#d4d4d4">        </span><span style="color:#569cd6">const</span><span style="color:#d4d4d4"> </span><span style="color:#4fc1ff">messageElement</span><span style="color:#d4d4d4"> </span><span style="color:#d4d4d4">=</span><span style="color:#d4d4d4"> </span><span style="color:#9cdcfe">document</span><span style="color:#d4d4d4">.</span><span style="color:#dcdcaa">createElement</span><span style="color:#ffd700">(</span><span style="color:#ce9178">'div'</span><span style="color:#ffd700">)</span><span style="color:#d4d4d4">;</span></div>
<div class="t" id="t60" style="right:1311.50px;top:592.54px;font-size:11.6px;color:#8a8a8a;font-weight:400;font-family:'Liberation Mono', monospace;letter-spacing:-0.550px">62</div>
<div class="code" style="left:310.00px;top:601.10px;width:459.00px"><span style="color:#d4d4d4">        </span><span style="color:#4fc1ff">messageElement</span><span style="color:#d4d4d4">.</span><span style="color:#9cdcfe">classList</span><span style="color:#d4d4d4">.</span><span style="color:#dcdcaa">add</span><span style="color:#ffd700">(</span><span style="color:#ce9178">'flex'</span><span style="color:#d4d4d4">,</span><span style="color:#d4d4d4"> </span><span style="color:#ce9178">'items-start'</span><span style="color:#d4d4d4">,</span><span style="color:#d4d4d4"> </span><span style="color:#ce9178">'mb-4'</span><span style="color:#ffd700">)</span><span style="color:#d4d4d4">;</span></div>
<div class="t" id="t61" style="right:1311.50px;top:608.37px;font-size:11.6px;color:#8a8a8a;font-weight:400;font-family:'Liberation Mono', monospace;letter-spacing:-0.550px">63</div>
<div class="code" style="left:310.00px;top:616.93px;width:459.00px"></div>
<div class="t" id="t62" style="right:1311.50px;top:624.20px;font-size:11.6px;color:#8a8a8a;font-weight:400;font-family:'Liberation Mono', monospace;letter-spacing:-0.550px">64</div>
<div class="code" style="left:310.00px;top:632.76px;width:459.00px"><span style="color:#d4d4d4">        </span><span style="color:#c586c0">if</span><span style="color:#d4d4d4"> </span><span style="color:#ffd700">(</span><span style="color:#9cdcfe">sender</span><span style="color:#d4d4d4"> </span><span style="color:#d4d4d4">=</span><span style="color:#d4d4d4">=</span><span style="color:#d4d4d4">=</span><span style="color:#d4d4d4"> </span><span style="color:#ce9178">'user'</span><span style="color:#ffd700">)</span><span style="color:#d4d4d4"> </span><span style="color:#ffd700">{</span></div>
<div class="t" id="t63" style="right:1311.50px;top:640.03px;font-size:11.6px;color:#8a8a8a;font-weight:400;font-family:'Liberation Mono', monospace;letter-spacing:-0.550px">65</div>
<div class="code" style="left:310.00px;top:648.59px;width:459.00px"><span style="color:#d4d4d4">            </span><span style="color:#4fc1ff">messageElement</span><span style="color:#d4d4d4">.</span><span style="color:#9cdcfe">classList</span><span style="color:#d4d4d4">.</span><span style="color:#dcdcaa">add</span><span style="color:#da70d6">(</span><span style="color:#ce9178">'justify-end'</span><span style="color:#da70d6">)</span><span style="color:#d4d4d4">;</span></div>
<div class="t" id="t64" style="right:1311.50px;top:655.86px;font-size:11.6px;color:#8a8a8a;font-weight:400;font-family:'Liberation Mono', monospace;letter-spacing:-0.550px">66</div>
<div class="code" style="left:310.00px;top:664.42px;width:459.00px"><span style="color:#d4d4d4">            </span><span style="color:#4fc1ff">messageElement</span><span style="color:#d4d4d4">.</span><span style="color:#9cdcfe">innerHTML</span><span style="color:#d4d4d4"> </span><span style="color:#d4d4d4">=</span><span style="color:#d4d4d4"> </span><span style="color:#ce9178">`</span></div>
<div class="t" id="t65" style="right:1311.50px;top:671.69px;font-size:11.6px;color:#8a8a8a;font-weight:400;font-family:'Liberation Mono', monospace;letter-spacing:-0.550px">67</div>
<div class="code" style="left:310.00px;top:680.25px;width:459.00px"><span style="color:#ce9178">                &lt;div class="mr-3 bg-gray-100 rounded-lg py-3 px-4 max-w-[80%]"&gt;</span></div>
<div class="t" id="t66" style="right:1311.50px;top:687.52px;font-size:11.6px;color:#8a8a8a;font-weight:400;font-family:'Liberation Mono', monospace;letter-spacing:-0.550px">68</div>
<div class="code" style="left:310.00px;top:696.08px;width:459.00px"><span style="color:#ce9178">                    &lt;p class="text-gray-800"&gt;</span><span style="color:#c586c0">${</span><span style="color:#9cdcfe">message</span><span style="color:#c586c0">}</span><span style="color:#ce9178">&lt;/p&gt;</span></div>
<div class="t" id="t67" style="right:1311.50px;top:703.35px;font-size:11.6px;color:#8a8a8a;font-weight:400;font-family:'Liberation Mono', monospace;letter-spacing:-0.550px">69</div>
<div class="code" style="left:310.00px;top:711.91px;width:459.00px"><span style="color:#ce9178">                &lt;/div&gt;</span></div>
<div class="t" id="t68" style="right:1311.50px;top:719.18px;font-size:11.6px;color:#8a8a8a;font-weight:400;font-family:'Liberation Mono', monospace;letter-spacing:-0.550px">70</div>
<div class="code" style="left:310.00px;top:727.74px;width:459.00px"><span style="color:#ce9178">                &lt;div class="w-10 h-10 rounded-full bg-gray-300 flex items-center justify-center"&gt;</span></div>
<div class="t" id="t69" style="right:1311.50px;top:735.01px;font-size:11.6px;color:#8a8a8a;font-weight:400;font-family:'Liberation Mono', monospace;letter-spacing:-0.550px">71</div>
<div class="code" style="left:310.00px;top:743.57px;width:459.00px"><span style="color:#ce9178">                    &lt;svg class="w-6 h-6" fill="none" stroke="currentColor" viewBox="0 0 24 24"&gt;</span></div>
<div class="t" id="t70" style="right:1311.50px;top:750.84px;font-size:11.6px;color:#8a8a8a;font-weight:400;font-family:'Liberation Mono', monospace;letter-spacing:-0.550px">72</div>
<div class="code" style="left:310.00px;top:759.40px;width:459.00px"><span style="color:#ce9178">                        &lt;path stroke-linecap="round" stroke-linejoin="round" stroke-width="2"&gt;</span></div>
<div class="t" id="t71" style="right:1311.50px;top:766.67px;font-size:11.6px;color:#8a8a8a;font-weight:400;font-family:'Liberation Mono', monospace;letter-spacing:-0.550px">73</div>
<div class="code" style="left:310.00px;top:775.23px;width:459.00px"><span style="color:#ce9178">                    &lt;/svg&gt;</span></div>
<div class="t" id="t72" style="right:1311.50px;top:782.50px;font-size:11.6px;color:#8a8a8a;font-weight:400;font-family:'Liberation Mono', monospace;letter-spacing:-0.550px">74</div>
<div class="code" style="left:310.00px;top:791.06px;width:459.00px"><span style="color:#ce9178">                &lt;/div&gt;</span></div>
<div class="t" id="t73" style="right:1311.50px;top:798.33px;font-size:11.6px;color:#8a8a8a;font-weight:400;font-family:'Liberation Mono', monospace;letter-spacing:-0.550px">75</div>
<div class="code" style="left:310.00px;top:806.89px;width:459.00px"><span style="color:#ce9178">            </span><span style="color:#ce9178">`</span><span style="color:#d4d4d4">;</span></div>
<div class="t" id="t74" style="right:1311.50px;top:814.16px;font-size:11.6px;color:#8a8a8a;font-weight:400;font-family:'Liberation Mono', monospace;letter-spacing:-0.550px">76</div>
<div class="code" style="left:310.00px;top:822.72px;width:459.00px"><span style="color:#d4d4d4">        </span><span style="color:#ffd700">}</span><span style="color:#d4d4d4"> </span><span style="color:#c586c0">else</span><span style="color:#d4d4d4"> </span><span style="color:#ffd700">{</span></div>
<div class="t" id="t75" style="right:1311.50px;top:829.99px;font-size:11.6px;color:#8a8a8a;font-weight:400;font-family:'Liberation Mono', monospace;letter-spacing:-0.550px">77</div>
<div class="code" style="left:310.00px;top:838.55px;width:459.00px"><span style="color:#d4d4d4">            </span><span style="color:#4fc1ff">messageElement</span><span style="color:#d4d4d4">.</span><span style="color:#9cdcfe">innerHTML</span><span style="color:#d4d4d4"> </span><span style="color:#d4d4d4">=</span><span style="color:#d4d4d4"> </span><span style="color:#ce9178">`</span></div>
<div class="t" id="t76" style="right:1311.50px;top:845.82px;font-size:11.6px;color:#8a8a8a;font-weight:400;font-family:'Liberation Mono', monospace;letter-spacing:-0.550px">78</div>
<div style="position:absolute;left:254px;top:77px;width:515px;height:16px;background:#1b1b1b;"></div>
<div style="position:absolute;left:254px;top:92px;width:515px;height:2.3px;background:#0a0a0a;"></div>
<div class="code" style="left:310.00px;top:78.04px;width:459.00px"><span style="color:#9cdcfe">document</span><span style="color:#d4d4d4">.</span><span style="color:#dcdcaa">addEventListener</span><span style="color:#ffd700">(</span><span style="color:#ce9178">'DOMContentLoaded'</span><span style="color:#d4d4d4">,</span><span style="color:#d4d4d4"> </span><span style="color:#569cd6">function</span><span style="color:#da70d6">(</span><span style="color:#da70d6">)</span><span style="color:#d4d4d4"> </span><span style="color:#da70d6">{</span></div>
<div class="t" id="t77" style="right:1311.50px;top:85.31px;font-size:11.6px;color:#8a8a8a;font-weight:400;font-family:'Liberation Mono', monospace;letter-spacing:-0.550px">3</div>
<div style="position:absolute;left:254px;top:841px;width:595px;height:1px;background:#1b1b1b;"></div>
<svg style="position:absolute;left:770px;top:70px;opacity:0.72" width="68" height="310" viewBox="0 0 68 310"><rect x="7.00" y="7.00" width="1.66" height="1.4" fill="#6a9955"/><rect x="9.49" y="7.00" width="4.98" height="1.4" fill="#6a9955"/><rect x="15.30" y="7.00" width="7.47" height="1.4" fill="#6a9955"/><rect x="23.60" y="7.00" width="3.32" height="1.4" fill="#6a9955"/><rect x="27.75" y="7.00" width="12.45" height="1.4" fill="#6a9955"/><rect x="7.00" y="10.20" width="6.64" height="1.4" fill="#9cdcfe"/><rect x="13.64" y="10.20" width="0.83" height="1.4" fill="#d4d4d4"/><rect x="14.47" y="10.20" width="13.28" height="1.4" fill="#dcdcaa"/><rect x="27.75" y="10.20" width="0.83" height="1.4" fill="#ffd700"/><rect x="28.58" y="10.20" width="14.94" height="1.4" fill="#ce9178"/><rect x="43.52" y="10.20" width="0.83" height="1.4" fill="#d4d4d4"/><rect x="45.18" y="10.20" width="6.64" height="1.4" fill="#569cd6"/><rect x="51.82" y="10.20" width="0.83" height="1.4" fill="#da70d6"/><rect x="52.65" y="10.20" width="0.83" height="1.4" fill="#da70d6"/><rect x="54.31" y="10.20" width="0.83" height="1.4" fill="#da70d6"/><rect x="10.32" y="11.80" width="1.66" height="1.4" fill="#6a9955"/><rect x="12.81" y="11.80" width="7.47" height="1.4" fill="#6a9955"/><rect x="21.11" y="11.80" width="2.49" height="1.4" fill="#6a9955"/><rect x="24.43" y="11.80" width="2.49" height="1.4" fill="#6a9955"/><rect x="10.32" y="13.40" width="4.15" height="1.4" fill="#569cd6"/><rect x="15.30" y="13.40" width="10.79" height="1.4" fill="#9cdcfe"/><rect x="26.92" y="13.40" width="0.83" height="1.4" fill="#d4d4d4"/><rect x="28.58" y="13.40" width="6.64" height="1.4" fill="#9cdcfe"/><rect x="35.22" y="13.40" width="0.83" height="1.4" fill="#d4d4d4"/><rect x="36.05" y="13.40" width="11.62" height="1.4" fill="#dcdcaa"/><rect x="47.67" y="13.40" width="0.83" height="1.4" fill="#179fff"/><rect x="48.50" y="13.40" width="14.11" height="1.4" fill="#ce9178"/><rect x="62.61" y="13.40" width="0.83" height="1.4" fill="#179fff"/><rect x="63.44" y="13.40" width="0.83" height="1.4" fill="#d4d4d4"/><rect x="10.32" y="15.00" width="4.15" height="1.4" fill="#569cd6"/><rect x="15.30" y="15.00" width="8.30" height="1.4" fill="#9cdcfe"/><rect x="24.43" y="15.00" width="0.83" height="1.4" fill="#d4d4d4"/><rect x="26.09" y="15.00" width="6.64" height="1.4" fill="#9cdcfe"/><rect x="32.73" y="15.00" width="0.83" height="1.4" fill="#d4d4d4"/><rect x="33.56" y="15.00" width="11.62" height="1.4" fill="#dcdcaa"/><rect x="45.18" y="15.00" width="0.83" height="1.4" fill="#179fff"/><rect x="46.01" y="15.00" width="10.79" height="1.4" fill="#ce9178"/><rect x="56.80" y="15.00" width="0.83" height="1.4" fill="#179fff"/><rect x="57.63" y="15.00" width="0.83" height="1.4" fill="#d4d4d4"/><rect x="10.32" y="16.60" width="4.15" height="1.4" fill="#569cd6"/><rect x="15.30" y="16.60" width="9.13" height="1.4" fill="#9cdcfe"/><rect x="25.26" y="16.60" width="0.83" height="1.4" fill="#d4d4d4"/><rect x="26.92" y="16.60" width="6.64" height="1.4" fill="#9cdcfe"/><rect x="33.56" y="16.60" width="0.83" height="1.4" fill="#d4d4d4"/><rect x="34.39" y="16.60" width="11.62" height="1.4" fill="#dcdcaa"/><rect x="46.01" y="16.60" width="0.83" height="1.4" fill="#179fff"/><rect x="46.84" y="16.60" width="12.45" height="1.4" fill="#ce9178"/><rect x="59.29" y="16.60" width="0.83" height="1.4" fill="#179fff"/><rect x="60.12" y="16.60" width="0.83" height="1.4" fill="#d4d4d4"/><rect x="10.32" y="18.20" width="4.15" height="1.4" fill="#569cd6"/><rect x="15.30" y="18.20" width="10.79" height="1.4" fill="#9cdcfe"/><rect x="26.92" y="18.20" width="0.83" height="1.4" fill="#d4d4d4"/><rect x="28.58" y="18.20" width="6.64" height="1.4" fill="#9cdcfe"/><rect x="35.22" y="18.20" width="0.83" height="1.4" fill="#d4d4d4"/><rect x="36.05" y="18.20" width="11.62" height="1.4" fill="#dcdcaa"/><rect x="47.67" y="18.20" width="0.83" height="1.4" fill="#179fff"/><rect x="48.50" y="18.20" width="13.28" height="1.4" fill="#ce9178"/><rect x="61.78" y="18.20" width="0.83" height="1.4" fill="#179fff"/><rect x="62.61" y="18.20" width="0.83" height="1.4" fill="#d4d4d4"/><rect x="10.32" y="19.80" width="4.15" height="1.4" fill="#569cd6"/><rect x="15.30" y="19.80" width="9.96" height="1.4" fill="#9cdcfe"/><rect x="26.09" y="19.80" width="0.83" height="1.4" fill="#d4d4d4"/><rect x="27.75" y="19.80" width="6.64" height="1.4" fill="#9cdcfe"/><rect x="34.39" y="19.80" width="0.83" height="1.4" fill="#d4d4d4"/><rect x="35.22" y="19.80" width="11.62" height="1.4" fill="#dcdcaa"/><rect x="46.84" y="19.80" width="0.83" height="1.4" fill="#179fff"/><rect x="47.67" y="19.80" width="13.28" height="1.4" fill="#ce9178"/><rect x="60.95" y="19.80" width="0.83" height="1.4" fill="#179fff"/><rect x="61.78" y="19.80" width="0.83" height="1.4" fill="#d4d4d4"/><rect x="10.32" y="21.40" width="4.15" height="1.4" fill="#569cd6"/><rect x="15.30" y="21.40" width="6.64" height="1.4" fill="#9cdcfe"/><rect x="22.77" y="21.40" width="0.83" height="1.4" fill="#d4d4d4"/><rect x="24.43" y="21.40" width="6.64" height="1.4" fill="#9cdcfe"/><rect x="31.07" y="21.40" width="0.83" height="1.4" fill="#d4d4d4"/><rect x="31.90" y="21.40" width="11.62" height="1.4" fill="#dcdcaa"/><rect x="43.52" y="21.40" width="0.83" height="1.4" fill="#179fff"/><rect x="44.35" y="21.40" width="9.13" height="1.4" fill="#ce9178"/><rect x="53.48" y="21.40" width="0.83" height="1.4" fill="#179fff"/><rect x="54.31" y="21.40" width="0.83" height="1.4" fill="#d4d4d4"/><rect x="10.32" y="23.00" width="4.15" height="1.4" fill="#569cd6"/><rect x="15.30" y="23.00" width="7.47" height="1.4" fill="#9cdcfe"/><rect x="23.60" y="23.00" width="0.83" height="1.4" fill="#d4d4d4"/><rect x="25.26" y="23.00" width="6.64" height="1.4" fill="#9cdcfe"/><rect x="31.90" y="23.00" width="0.83" height="1.4" fill="#d4d4d4"/><rect x="32.73" y="23.00" width="11.62" height="1.4" fill="#dcdcaa"/><rect x="44.35" y="23.00" width="0.83" height="1.4" fill="#179fff"/><rect x="45.18" y="23.00" width="9.96" height="1.4" fill="#ce9178"/><rect x="55.14" y="23.00" width="0.83" height="1.4" fill="#179fff"/><rect x="55.97" y="23.00" width="0.83" height="1.4" fill="#d4d4d4"/><rect x="10.32" y="24.60" width="4.15" height="1.4" fill="#569cd6"/><rect x="15.30" y="24.60" width="9.96" height="1.4" fill="#9cdcfe"/><rect x="26.09" y="24.60" width="0.83" height="1.4" fill="#d4d4d4"/><rect x="27.75" y="24.60" width="6.64" height="1.4" fill="#9cdcfe"/><rect x="34.39" y="24.60" width="0.83" height="1.4" fill="#d4d4d4"/><rect x="35.22" y="24.60" width="11.62" height="1.4" fill="#dcdcaa"/><rect x="46.84" y="24.60" width="0.83" height="1.4" fill="#179fff"/><rect x="47.67" y="24.60" width="12.45" height="1.4" fill="#ce9178"/><rect x="60.12" y="24.60" width="0.83" height="1.4" fill="#179fff"/><rect x="60.95" y="24.60" width="0.83" height="1.4" fill="#d4d4d4"/><rect x="10.32" y="26.20" width="4.15" height="1.4" fill="#569cd6"/><rect x="15.30" y="26.20" width="14.11" height="1.4" fill="#9cdcfe"/><rect x="30.24" y="26.20" width="0.83" height="1.4" fill="#d4d4d4"/><rect x="31.90" y="26.20" width="6.64" height="1.4" fill="#9cdcfe"/><rect x="38.54" y="26.20" width="0.83" height="1.4" fill="#d4d4d4"/><rect x="39.37" y="26.20" width="11.62" height="1.4" fill="#dcdcaa"/><rect x="50.99" y="26.20" width="0.83" height="1.4" fill="#179fff"/><rect x="51.82" y="26.20" width="8.30" height="1.4" fill="#ce9178"/><rect x="60.12" y="26.20" width="0.83" height="1.4" fill="#179fff"/><rect x="60.95" y="26.20" width="0.83" height="1.4" fill="#d4d4d4"/><rect x="10.32" y="29.40" width="1.66" height="1.4" fill="#6a9955"/><rect x="12.81" y="29.40" width="5.81" height="1.4" fill="#6a9955"/><rect x="19.45" y="29.40" width="3.32" height="1.4" fill="#6a9955"/><rect x="23.60" y="29.40" width="4.15" height="1.4" fill="#6a9955"/><rect x="10.32" y="31.00" width="1.66" height="1.4" fill="#c586c0"/><rect x="12.81" y="31.00" width="0.83" height="1.4" fill="#179fff"/><rect x="13.64" y="31.00" width="10.79" height="1.4" fill="#9cdcfe"/><rect x="25.26" y="31.00" width="0.83" height="1.4" fill="#d4d4d4"/><rect x="26.09" y="31.00" width="0.83" height="1.4" fill="#d4d4d4"/><rect x="27.75" y="31.00" width="8.30" height="1.4" fill="#9cdcfe"/><rect x="36.05" y="31.00" width="0.83" height="1.4" fill="#179fff"/><rect x="37.71" y="31.00" width="0.83" height="1.4" fill="#179fff"/><rect x="13.64" y="32.60" width="10.79" height="1.4" fill="#9cdcfe"/><rect x="24.43" y="32.60" width="0.83" height="1.4" fill="#d4d4d4"/><rect x="25.26" y="32.60" width="13.28" height="1.4" fill="#dcdcaa"/><rect x="38.54" y="32.60" width="0.83" height="1.4" fill="#ffd700"/><rect x="39.37" y="32.60" width="5.81" height="1.4" fill="#ce9178"/><rect x="45.18" y="32.60" width="0.83" height="1.4" fill="#d4d4d4"/><rect x="46.84" y="32.60" width="6.64" height="1.4" fill="#569cd6"/><rect x="53.48" y="32.60" width="0.83" height="1.4" fill="#da70d6"/><rect x="54.31" y="32.60" width="0.83" height="1.4" fill="#da70d6"/><rect x="55.97" y="32.60" width="0.83" height="1.4" fill="#da70d6"/><rect x="16.96" y="34.20" width="8.30" height="1.4" fill="#9cdcfe"/><rect x="25.26" y="34.20" width="0.83" height="1.4" fill="#d4d4d4"/><rect x="26.09" y="34.20" width="7.47" height="1.4" fill="#9cdcfe"/><rect x="33.56" y="34.20" width="0.83" height="1.4" fill="#d4d4d4"/><rect x="34.39" y="34.20" width="4.98" height="1.4" fill="#dcdcaa"/><rect x="39.37" y="34.20" width="0.83" height="1.4" fill="#179fff"/><rect x="40.20" y="34.20" width="6.64" height="1.4" fill="#ce9178"/><rect x="46.84" y="34.20" width="0.83" height="1.4" fill="#179fff"/><rect x="47.67" y="34.20" width="0.83" height="1.4" fill="#d4d4d4"/><rect x="13.64" y="35.80" width="0.83" height="1.4" fill="#da70d6"/><rect x="14.47" y="35.80" width="0.83" height="1.4" fill="#ffd700"/><rect x="15.30" y="35.80" width="0.83" height="1.4" fill="#d4d4d4"/><rect x="10.32" y="37.40" width="0.83" height="1.4" fill="#179fff"/><rect x="10.32" y="40.60" width="1.66" height="1.4" fill="#6a9955"/><rect x="12.81" y="40.60" width="4.15" height="1.4" fill="#6a9955"/><rect x="17.79" y="40.60" width="6.64" height="1.4" fill="#6a9955"/><rect x="25.26" y="40.60" width="1.66" height="1.4" fill="#6a9955"/><rect x="27.75" y="40.60" width="3.32" height="1.4" fill="#6a9955"/><rect x="10.32" y="42.20" width="1.66" height="1.4" fill="#c586c0"/><rect x="12.81" y="42.20" width="0.83" height="1.4" fill="#179fff"/><rect x="13.64" y="42.20" width="9.13" height="1.4" fill="#9cdcfe"/><rect x="23.60" y="42.20" width="0.83" height="1.4" fill="#d4d4d4"/><rect x="24.43" y="42.20" width="0.83" height="1.4" fill="#d4d4d4"/><rect x="26.09" y="42.20" width="10.79" height="1.4" fill="#9cdcfe"/><rect x="36.88" y="42.20" width="0.83" height="1.4" fill="#179fff"/><rect x="38.54" y="42.20" width="0.83" height="1.4" fill="#179fff"/><rect x="13.64" y="43.80" width="9.13" height="1.4" fill="#9cdcfe"/><rect x="22.77" y="43.80" width="0.83" height="1.4" fill="#d4d4d4"/><rect x="23.60" y="43.80" width="13.28" height="1.4" fill="#dcdcaa"/><rect x="36.88" y="43.80" width="0.83" height="1.4" fill="#ffd700"/><rect x="37.71" y="43.80" width="5.81" height="1.4" fill="#ce9178"/><rect x="43.52" y="43.80" width="0.83" height="1.4" fill="#d4d4d4"/><rect x="45.18" y="43.80" width="6.64" height="1.4" fill="#569cd6"/><rect x="51.82" y="43.80" width="0.83" height="1.4" fill="#da70d6"/><rect x="52.65" y="43.80" width="0.83" height="1.4" fill="#da70d6"/><rect x="54.31" y="43.80" width="0.83" height="1.4" fill="#da70d6"/><rect x="16.96" y="45.40" width="10.79" height="1.4" fill="#9cdcfe"/><rect x="27.75" y="45.40" width="0.83" height="1.4" fill="#d4d4d4"/><rect x="28.58" y="45.40" width="7.47" height="1.4" fill="#9cdcfe"/><rect x="36.05" y="45.40" width="0.83" height="1.4" fill="#d4d4d4"/><rect x="36.88" y="45.40" width="4.98" height="1.4" fill="#dcdcaa"/><rect x="41.86" y="45.40" width="0.83" height="1.4" fill="#179fff"/><rect x="42.69" y="45.40" width="6.64" height="1.4" fill="#ce9178"/><rect x="49.33" y="45.40" width="0.83" height="1.4" fill="#179fff"/><rect x="50.16" y="45.40" width="0.83" height="1.4" fill="#d4d4d4"/><rect x="16.96" y="47.00" width="6.64" height="1.4" fill="#9cdcfe"/><rect x="23.60" y="47.00" width="0.83" height="1.4" fill="#d4d4d4"/><rect x="24.43" y="47.00" width="3.32" height="1.4" fill="#9cdcfe"/><rect x="27.75" y="47.00" width="0.83" height="1.4" fill="#d4d4d4"/><rect x="28.58" y="47.00" width="4.15" height="1.4" fill="#9cdcfe"/><rect x="32.73" y="47.00" width="0.83" height="1.4" fill="#d4d4d4"/><rect x="33.56" y="47.00" width="6.64" height="1.4" fill="#9cdcfe"/><rect x="41.03" y="47.00" width="0.83" height="1.4" fill="#d4d4d4"/><rect x="42.69" y="47.00" width="6.64" height="1.4" fill="#ce9178"/><rect x="49.33" y="47.00" width="0.83" height="1.4" fill="#d4d4d4"/><rect x="50.99" y="47.00" width="1.66" height="1.4" fill="#6a9955"/><rect x="53.48" y="47.00" width="6.64" height="1.4" fill="#6a9955"/><rect x="60.95" y="47.00" width="4.98" height="1.4" fill="#6a9955"/><rect x="13.64" y="48.60" width="0.83" height="1.4" fill="#da70d6"/><rect x="14.47" y="48.60" width="0.83" height="1.4" fill="#ffd700"/><rect x="15.30" y="48.60" width="0.83" height="1.4" fill="#d4d4d4"/><rect x="10.32" y="50.20" width="0.83" height="1.4" fill="#179fff"/><rect x="10.32" y="53.40" width="1.66" height="1.4" fill="#6a9955"/><rect x="12.81" y="53.40" width="4.98" height="1.4" fill="#6a9955"/><rect x="18.62" y="53.40" width="6.64" height="1.4" fill="#6a9955"/><rect x="26.09" y="53.40" width="1.66" height="1.4" fill="#6a9955"/><rect x="28.58" y="53.40" width="3.32" height="1.4" fill="#6a9955"/><rect x="10.32" y="55.00" width="1.66" height="1.4" fill="#c586c0"/><rect x="12.81" y="55.00" width="0.83" height="1.4" fill="#179fff"/><rect x="13.64" y="55.00" width="9.96" height="1.4" fill="#9cdcfe"/><rect x="24.43" y="55.00" width="0.83" height="1.4" fill="#d4d4d4"/><rect x="25.26" y="55.00" width="0.83" height="1.4" fill="#d4d4d4"/><rect x="26.92" y="55.00" width="10.79" height="1.4" fill="#9cdcfe"/><rect x="37.71" y="55.00" width="0.83" height="1.4" fill="#179fff"/><rect x="39.37" y="55.00" width="0.83" height="1.4" fill="#179fff"/><rect x="13.64" y="56.60" width="9.96" height="1.4" fill="#9cdcfe"/><rect x="23.60" y="56.60" width="0.83" height="1.4" fill="#d4d4d4"/><rect x="24.43" y="56.60" width="13.28" height="1.4" fill="#dcdcaa"/><rect x="37.71" y="56.60" width="0.83" height="1.4" fill="#ffd700"/><rect x="38.54" y="56.60" width="5.81" height="1.4" fill="#ce9178"/><rect x="44.35" y="56.60" width="0.83" height="1.4" fill="#d4d4d4"/><rect x="46.01" y="56.60" width="6.64" height="1.4" fill="#569cd6"/><rect x="52.65" y="56.60" width="0.83" height="1.4" fill="#da70d6"/><rect x="53.48" y="56.60" width="0.83" height="1.4" fill="#da70d6"/><rect x="55.14" y="56.60" width="0.83" height="1.4" fill="#da70d6"/><rect x="16.96" y="58.20" width="10.79" height="1.4" fill="#9cdcfe"/><rect x="27.75" y="58.20" width="0.83" height="1.4" fill="#d4d4d4"/><rect x="28.58" y="58.20" width="7.47" height="1.4" fill="#9cdcfe"/><rect x="36.05" y="58.20" width="0.83" height="1.4" fill="#d4d4d4"/><rect x="36.88" y="58.20" width="2.49" height="1.4" fill="#dcdcaa"/><rect x="39.37" y="58.20" width="0.83" height="1.4" fill="#179fff"/><rect x="40.20" y="58.20" width="6.64" height="1.4" fill="#ce9178"/><rect x="46.84" y="58.20" width="0.83" height="1.4" fill="#179fff"/><rect x="47.67" y="58.20" width="0.83" height="1.4" fill="#d4d4d4"/><rect x="16.96" y="59.80" width="6.64" height="1.4" fill="#9cdcfe"/><rect x="23.60" y="59.80" width="0.83" height="1.4" fill="#d4d4d4"/><rect x="24.43" y="59.80" width="3.32" height="1.4" fill="#9cdcfe"/><rect x="27.75" y="59.80" width="0.83" height="1.4" fill="#d4d4d4"/><rect x="28.58" y="59.80" width="4.15" height="1.4" fill="#9cdcfe"/><rect x="32.73" y="59.80" width="0.83" height="1.4" fill="#d4d4d4"/><rect x="33.56" y="59.80" width="6.64" height="1.4" fill="#9cdcfe"/><rect x="41.03" y="59.80" width="0.83" height="1.4" fill="#d4d4d4"/><rect x="42.69" y="59.80" width="1.66" height="1.4" fill="#ce9178"/><rect x="44.35" y="59.80" width="0.83" height="1.4" fill="#d4d4d4"/><rect x="46.01" y="59.80" width="1.66" height="1.4" fill="#6a9955"/><rect x="48.50" y="59.80" width="7.47" height="1.4" fill="#6a9955"/><rect x="56.80" y="59.80" width="4.98" height="1.4" fill="#6a9955"/><rect x="13.64" y="61.40" width="0.83" height="1.4" fill="#da70d6"/><rect x="14.47" y="61.40" width="0.83" height="1.4" fill="#ffd700"/><rect x="15.30" y="61.40" width="0.83" height="1.4" fill="#d4d4d4"/><rect x="10.32" y="63.00" width="0.83" height="1.4" fill="#179fff"/><rect x="10.32" y="66.20" width="1.66" height="1.4" fill="#6a9955"/><rect x="12.81" y="66.20" width="5.81" height="1.4" fill="#6a9955"/><rect x="19.45" y="66.20" width="4.15" height="1.4" fill="#6a9955"/><rect x="24.43" y="66.20" width="1.66" height="1.4" fill="#6a9955"/><rect x="26.92" y="66.20" width="6.64" height="1.4" fill="#6a9955"/><rect x="10.32" y="67.80" width="1.66" height="1.4" fill="#c586c0"/><rect x="12.81" y="67.80" width="0.83" height="1.4" fill="#179fff"/><rect x="13.64" y="67.80" width="6.64" height="1.4" fill="#9cdcfe"/><rect x="20.28" y="67.80" width="0.83" height="1.4" fill="#179fff"/><rect x="21.94" y="67.80" width="0.83" height="1.4" fill="#179fff"/><rect x="13.64" y="69.40" width="6.64" height="1.4" fill="#9cdcfe"/><rect x="20.28" y="69.40" width="0.83" height="1.4" fill="#d4d4d4"/><rect x="21.11" y="69.40" width="13.28" height="1.4" fill="#dcdcaa"/><rect x="34.39" y="69.40" width="0.83" height="1.4" fill="#ffd700"/><rect x="35.22" y="69.40" width="6.64" height="1.4" fill="#ce9178"/><rect x="41.86" y="69.40" width="0.83" height="1.4" fill="#d4d4d4"/><rect x="43.52" y="69.40" width="6.64" height="1.4" fill="#569cd6"/><rect x="50.16" y="69.40" width="0.83" height="1.4" fill="#da70d6"/><rect x="50.99" y="69.40" width="0.83" height="1.4" fill="#9cdcfe"/><rect x="51.82" y="69.40" width="0.83" height="1.4" fill="#da70d6"/><rect x="53.48" y="69.40" width="0.83" height="1.4" fill="#da70d6"/><rect x="16.96" y="71.00" width="0.83" height="1.4" fill="#9cdcfe"/><rect x="17.79" y="71.00" width="0.83" height="1.4" fill="#d4d4d4"/><rect x="18.62" y="71.00" width="11.62" height="1.4" fill="#dcdcaa"/><rect x="30.24" y="71.00" width="0.83" height="1.4" fill="#179fff"/><rect x="31.07" y="71.00" width="0.83" height="1.4" fill="#179fff"/><rect x="31.90" y="71.00" width="0.83" height="1.4" fill="#d4d4d4"/><rect x="16.96" y="72.60" width="4.15" height="1.4" fill="#569cd6"/><rect x="21.94" y="72.60" width="5.81" height="1.4" fill="#9cdcfe"/><rect x="28.58" y="72.60" width="0.83" height="1.4" fill="#d4d4d4"/><rect x="30.24" y="72.60" width="7.47" height="1.4" fill="#9cdcfe"/><rect x="37.71" y="72.60" width="0.83" height="1.4" fill="#d4d4d4"/><rect x="38.54" y="72.60" width="4.15" height="1.4" fill="#9cdcfe"/><rect x="42.69" y="72.60" width="0.83" height="1.4" fill="#d4d4d4"/><rect x="43.52" y="72.60" width="3.32" height="1.4" fill="#dcdcaa"/><rect x="46.84" y="72.60" width="0.83" height="1.4" fill="#179fff"/><rect x="47.67" y="72.60" width="0.83" height="1.4" fill="#179fff"/><rect x="48.50" y="72.60" width="0.83" height="1.4" fill="#d4d4d4"/><rect x="16.96" y="75.80" width="1.66" height="1.4" fill="#c586c0"/><rect x="19.45" y="75.80" width="0.83" height="1.4" fill="#179fff"/><rect x="20.28" y="75.80" width="5.81" height="1.4" fill="#9cdcfe"/><rect x="26.09" y="75.80" width="0.83" height="1.4" fill="#179fff"/><rect x="27.75" y="75.80" width="0.83" height="1.4" fill="#179fff"/><rect x="20.28" y="77.40" width="1.66" height="1.4" fill="#6a9955"/><rect x="22.77" y="77.40" width="4.98" height="1.4" fill="#6a9955"/><rect x="28.58" y="77.40" width="5.81" height="1.4" fill="#6a9955"/><rect x="35.22" y="77.40" width="2.49" height="1.4" fill="#6a9955"/><rect x="38.54" y="77.40" width="5.81" height="1.4" fill="#6a9955"/><rect x="45.18" y="77.40" width="1.66" height="1.4" fill="#6a9955"/><rect x="47.67" y="77.40" width="3.32" height="1.4" fill="#6a9955"/><rect x="20.28" y="79.00" width="13.28" height="1.4" fill="#dcdcaa"/><rect x="33.56" y="79.00" width="0.83" height="1.4" fill="#ffd700"/><rect x="34.39" y="79.00" width="5.81" height="1.4" fill="#9cdcfe"/><rect x="40.20" y="79.00" width="0.83" height="1.4" fill="#d4d4d4"/><rect x="41.86" y="79.00" width="4.98" height="1.4" fill="#ce9178"/><rect x="46.84" y="79.00" width="0.83" height="1.4" fill="#ffd700"/><rect x="47.67" y="79.00" width="0.83" height="1.4" fill="#d4d4d4"/><rect x="20.28" y="80.60" width="7.47" height="1.4" fill="#9cdcfe"/><rect x="27.75" y="80.60" width="0.83" height="1.4" fill="#d4d4d4"/><rect x="28.58" y="80.60" width="4.15" height="1.4" fill="#9cdcfe"/><rect x="33.56" y="80.60" width="0.83" height="1.4" fill="#d4d4d4"/><rect x="35.22" y="80.60" width="1.66" height="1.4" fill="#ce9178"/><rect x="36.88" y="80.60" width="0.83" height="1.4" fill="#d4d4d4"/><rect x="20.28" y="83.80" width="1.66" height="1.4" fill="#6a9955"/><rect x="22.77" y="83.80" width="5.81" height="1.4" fill="#6a9955"/><rect x="29.41" y="83.80" width="7.47" height="1.4" fill="#6a9955"/><rect x="37.71" y="83.80" width="1.66" height="1.4" fill="#6a9955"/><rect x="40.20" y="83.80" width="10.79" height="1.4" fill="#6a9955"/><rect x="20.28" y="85.40" width="14.11" height="1.4" fill="#9cdcfe"/><rect x="34.39" y="85.40" width="0.83" height="1.4" fill="#d4d4d4"/><rect x="35.22" y="85.40" width="7.47" height="1.4" fill="#9cdcfe"/><rect x="42.69" y="85.40" width="0.83" height="1.4" fill="#d4d4d4"/><rect x="43.52" y="85.40" width="4.98" height="1.4" fill="#dcdcaa"/><rect x="48.50" y="85.40" width="0.83" height="1.4" fill="#ffd700"/><rect x="49.33" y="85.40" width="6.64" height="1.4" fill="#ce9178"/><rect x="55.97" y="85.40" width="0.83" height="1.4" fill="#ffd700"/><rect x="56.80" y="85.40" width="0.83" height="1.4" fill="#d4d4d4"/><rect x="20.28" y="88.60" width="1.66" height="1.4" fill="#6a9955"/><rect x="22.77" y="88.60" width="4.98" height="1.4" fill="#6a9955"/><rect x="28.58" y="88.60" width="0.83" height="1.4" fill="#6a9955"/><rect x="30.24" y="88.60" width="1.66" height="1.4" fill="#6a9955"/><rect x="32.73" y="88.60" width="2.49" height="1.4" fill="#6a9955"/><rect x="36.05" y="88.60" width="1.66" height="1.4" fill="#6a9955"/><rect x="38.54" y="88.60" width="8.30" height="1.4" fill="#6a9955"/><rect x="47.67" y="88.60" width="7.47" height="1.4" fill="#6a9955"/><rect x="55.97" y="88.60" width="2.49" height="1.4" fill="#6a9955"/><rect x="59.29" y="88.60" width="4.98" height="1.4" fill="#6a9955"/><rect x="20.28" y="90.20" width="8.30" height="1.4" fill="#dcdcaa"/><rect x="28.58" y="90.20" width="0.83" height="1.4" fill="#ffd700"/><rect x="29.41" y="90.20" width="0.83" height="1.4" fill="#da70d6"/><rect x="30.24" y="90.20" width="0.83" height="1.4" fill="#da70d6"/><rect x="31.90" y="90.20" width="1.66" height="1.4" fill="#569cd6"/><rect x="34.39" y="90.20" width="0.83" height="1.4" fill="#da70d6"/><rect x="23.60" y="91.80" width="11.62" height="1.4" fill="#dcdcaa"/><rect x="35.22" y="91.80" width="0.83" height="1.4" fill="#179fff"/><rect x="36.05" y="91.80" width="5.81" height="1.4" fill="#9cdcfe"/><rect x="41.86" y="91.80" width="0.83" height="1.4" fill="#179fff"/><rect x="42.69" y="91.80" width="0.83" height="1.4" fill="#d4d4d4"/><rect x="20.28" y="93.40" width="0.83" height="1.4" fill="#da70d6"/><rect x="21.11" y="93.40" width="0.83" height="1.4" fill="#d4d4d4"/><rect x="22.77" y="93.40" width="3.32" height="1.4" fill="#b5cea8"/><rect x="26.09" y="93.40" width="0.83" height="1.4" fill="#ffd700"/><rect x="26.92" y="93.40" width="0.83" height="1.4" fill="#d4d4d4"/><rect x="16.96" y="95.00" width="0.83" height="1.4" fill="#179fff"/><rect x="13.64" y="96.60" width="0.83" height="1.4" fill="#da70d6"/><rect x="14.47" y="96.60" width="0.83" height="1.4" fill="#ffd700"/><rect x="15.30" y="96.60" width="0.83" height="1.4" fill="#d4d4d4"/><rect x="10.32" y="98.20" width="0.83" height="1.4" fill="#179fff"/><rect x="10.32" y="101.40" width="1.66" height="1.4" fill="#6a9955"/><rect x="12.81" y="101.40" width="5.81" height="1.4" fill="#6a9955"/><rect x="19.45" y="101.40" width="3.32" height="1.4" fill="#6a9955"/><rect x="23.60" y="101.40" width="4.98" height="1.4" fill="#6a9955"/><rect x="29.41" y="101.40" width="6.64" height="1.4" fill="#6a9955"/><rect x="36.88" y="101.40" width="1.66" height="1.4" fill="#6a9955"/><rect x="39.37" y="101.40" width="3.32" height="1.4" fill="#6a9955"/><rect x="10.32" y="103.00" width="6.64" height="1.4" fill="#569cd6"/><rect x="17.79" y="103.00" width="13.28" height="1.4" fill="#dcdcaa"/><rect x="31.07" y="103.00" width="0.83" height="1.4" fill="#179fff"/><rect x="31.90" y="103.00" width="5.81" height="1.4" fill="#9cdcfe"/><rect x="37.71" y="103.00" width="0.83" height="1.4" fill="#d4d4d4"/><rect x="39.37" y="103.00" width="4.98" height="1.4" fill="#9cdcfe"/><rect x="44.35" y="103.00" width="0.83" height="1.4" fill="#179fff"/><rect x="46.01" y="103.00" width="0.83" height="1.4" fill="#179fff"/><rect x="13.64" y="104.60" width="4.15" height="1.4" fill="#569cd6"/><rect x="18.62" y="104.60" width="11.62" height="1.4" fill="#4fc1ff"/><rect x="31.07" y="104.60" width="0.83" height="1.4" fill="#d4d4d4"/><rect x="32.73" y="104.60" width="6.64" height="1.4" fill="#9cdcfe"/><rect x="39.37" y="104.60" width="0.83" height="1.4" fill="#d4d4d4"/><rect x="40.20" y="104.60" width="10.79" height="1.4" fill="#dcdcaa"/><rect x="50.99" y="104.60" width="0.83" height="1.4" fill="#ffd700"/><rect x="51.82" y="104.60" width="4.15" height="1.4" fill="#ce9178"/><rect x="55.97" y="104.60" width="0.83" height="1.4" fill="#ffd700"/><rect x="56.80" y="104.60" width="0.83" height="1.4" fill="#d4d4d4"/><rect x="13.64" y="106.20" width="11.62" height="1.4" fill="#4fc1ff"/><rect x="25.26" y="106.20" width="0.83" height="1.4" fill="#d4d4d4"/><rect x="26.09" y="106.20" width="7.47" height="1.4" fill="#9cdcfe"/><rect x="33.56" y="106.20" width="0.83" height="1.4" fill="#d4d4d4"/><rect x="34.39" y="106.20" width="2.49" height="1.4" fill="#dcdcaa"/><rect x="36.88" y="106.20" width="0.83" height="1.4" fill="#ffd700"/><rect x="37.71" y="106.20" width="4.98" height="1.4" fill="#ce9178"/><rect x="42.69" y="106.20" width="0.83" height="1.4" fill="#d4d4d4"/><rect x="44.35" y="106.20" width="10.79" height="1.4" fill="#ce9178"/><rect x="55.14" y="106.20" width="0.83" height="1.4" fill="#d4d4d4"/><rect x="56.80" y="106.20" width="4.98" height="1.4" fill="#ce9178"/><rect x="61.78" y="106.20" width="0.83" height="1.4" fill="#ffd700"/><rect x="62.61" y="106.20" width="0.83" height="1.4" fill="#d4d4d4"/><rect x="13.64" y="109.40" width="1.66" height="1.4" fill="#c586c0"/><rect x="16.13" y="109.40" width="0.83" height="1.4" fill="#ffd700"/><rect x="16.96" y="109.40" width="4.98" height="1.4" fill="#9cdcfe"/><rect x="22.77" y="109.40" width="0.83" height="1.4" fill="#d4d4d4"/><rect x="23.60" y="109.40" width="0.83" height="1.4" fill="#d4d4d4"/><rect x="24.43" y="109.40" width="0.83" height="1.4" fill="#d4d4d4"/><rect x="26.09" y="109.40" width="4.98" height="1.4" fill="#ce9178"/><rect x="31.07" y="109.40" width="0.83" height="1.4" fill="#ffd700"/><rect x="32.73" y="109.40" width="0.83" height="1.4" fill="#ffd700"/><rect x="16.96" y="111.00" width="11.62" height="1.4" fill="#4fc1ff"/><rect x="28.58" y="111.00" width="0.83" height="1.4" fill="#d4d4d4"/><rect x="29.41" y="111.00" width="7.47" height="1.4" fill="#9cdcfe"/><rect x="36.88" y="111.00" width="0.83" height="1.4" fill="#d4d4d4"/><rect x="37.71" y="111.00" width="2.49" height="1.4" fill="#dcdcaa"/><rect x="40.20" y="111.00" width="0.83" height="1.4" fill="#da70d6"/><rect x="41.03" y="111.00" width="10.79" height="1.4" fill="#ce9178"/><rect x="51.82" y="111.00" width="0.83" height="1.4" fill="#da70d6"/><rect x="52.65" y="111.00" width="0.83" height="1.4" fill="#d4d4d4"/><rect x="16.96" y="112.60" width="11.62" height="1.4" fill="#4fc1ff"/><rect x="28.58" y="112.60" width="0.83" height="1.4" fill="#d4d4d4"/><rect x="29.41" y="112.60" width="7.47" height="1.4" fill="#9cdcfe"/><rect x="37.71" y="112.60" width="0.83" height="1.4" fill="#d4d4d4"/><rect x="39.37" y="112.60" width="0.83" height="1.4" fill="#ce9178"/><rect x="20.28" y="114.20" width="3.32" height="1.4" fill="#ce9178"/><rect x="24.43" y="114.20" width="9.13" height="1.4" fill="#ce9178"/><rect x="34.39" y="114.20" width="9.13" height="1.4" fill="#ce9178"/><rect x="44.35" y="114.20" width="8.30" height="1.4" fill="#ce9178"/><rect x="53.48" y="114.20" width="3.32" height="1.4" fill="#ce9178"/><rect x="57.63" y="114.20" width="3.32" height="1.4" fill="#ce9178"/><rect x="61.78" y="114.20" width="4.72" height="1.4" fill="#ce9178"/><rect x="23.60" y="115.80" width="1.66" height="1.4" fill="#ce9178"/><rect x="26.09" y="115.80" width="18.26" height="1.4" fill="#ce9178"/><rect x="44.35" y="115.80" width="1.66" height="1.4" fill="#c586c0"/><rect x="46.01" y="115.80" width="5.81" height="1.4" fill="#9cdcfe"/><rect x="51.82" y="115.80" width="0.83" height="1.4" fill="#c586c0"/><rect x="52.65" y="115.80" width="3.32" height="1.4" fill="#ce9178"/><rect x="20.28" y="117.40" width="4.98" height="1.4" fill="#ce9178"/><rect x="20.28" y="119.00" width="3.32" height="1.4" fill="#ce9178"/><rect x="24.43" y="119.00" width="9.13" height="1.4" fill="#ce9178"/><rect x="34.39" y="119.00" width="3.32" height="1.4" fill="#ce9178"/><rect x="38.54" y="119.00" width="9.96" height="1.4" fill="#ce9178"/><rect x="49.33" y="119.00" width="9.13" height="1.4" fill="#ce9178"/><rect x="59.29" y="119.00" width="3.32" height="1.4" fill="#ce9178"/><rect x="63.44" y="119.00" width="3.06" height="1.4" fill="#ce9178"/><rect x="23.60" y="120.60" width="3.32" height="1.4" fill="#ce9178"/><rect x="27.75" y="120.60" width="8.30" height="1.4" fill="#ce9178"/><rect x="36.88" y="120.60" width="3.32" height="1.4" fill="#ce9178"/><rect x="41.03" y="120.60" width="9.13" height="1.4" fill="#ce9178"/><rect x="50.99" y="120.60" width="15.51" height="1.4" fill="#ce9178"/><rect x="26.92" y="122.20" width="4.15" height="1.4" fill="#ce9178"/><rect x="31.90" y="122.20" width="18.26" height="1.4" fill="#ce9178"/><rect x="50.99" y="122.20" width="15.51" height="1.4" fill="#ce9178"/><rect x="23.60" y="123.80" width="4.98" height="1.4" fill="#ce9178"/><rect x="20.28" y="125.40" width="4.98" height="1.4" fill="#ce9178"/><rect x="16.96" y="127.00" width="0.83" height="1.4" fill="#ce9178"/><rect x="17.79" y="127.00" width="0.83" height="1.4" fill="#d4d4d4"/><rect x="13.64" y="128.60" width="0.83" height="1.4" fill="#ffd700"/><rect x="15.30" y="128.60" width="3.32" height="1.4" fill="#c586c0"/><rect x="19.45" y="128.60" width="0.83" height="1.4" fill="#ffd700"/><rect x="16.96" y="130.20" width="11.62" height="1.4" fill="#4fc1ff"/><rect x="28.58" y="130.20" width="0.83" height="1.4" fill="#d4d4d4"/><rect x="29.41" y="130.20" width="7.47" height="1.4" fill="#9cdcfe"/><rect x="37.71" y="130.20" width="0.83" height="1.4" fill="#d4d4d4"/><rect x="39.37" y="130.20" width="0.83" height="1.4" fill="#ce9178"/><rect x="20.28" y="131.80" width="3.32" height="1.4" fill="#ce9178"/><rect x="24.43" y="131.80" width="9.13" height="1.4" fill="#ce9178"/><rect x="34.39" y="131.80" width="3.32" height="1.4" fill="#ce9178"/><rect x="38.54" y="131.80" width="9.96" height="1.4" fill="#ce9178"/><rect x="49.33" y="131.80" width="10.79" height="1.4" fill="#ce9178"/><rect x="60.95" y="131.80" width="3.32" height="1.4" fill="#ce9178"/><rect x="65.10" y="131.80" width="1.40" height="1.4" fill="#ce9178"/><rect x="23.60" y="133.40" width="3.32" height="1.4" fill="#ce9178"/><rect x="27.75" y="133.40" width="8.30" height="1.4" fill="#ce9178"/><rect x="36.88" y="133.40" width="2.49" height="1.4" fill="#ce9178"/><rect x="40.20" y="133.40" width="9.13" height="1.4" fill="#ce9178"/><rect x="50.16" y="133.40" width="9.13" height="1.4" fill="#ce9178"/><rect x="60.12" y="133.40" width="6.38" height="1.4" fill="#ce9178"/><rect x="26.92" y="135.00" width="4.15" height="1.4" fill="#ce9178"/><rect x="31.90" y="135.00" width="18.26" height="1.4" fill="#ce9178"/><rect x="50.99" y="135.00" width="15.51" height="1.4" fill="#ce9178"/><rect x="23.60" y="136.60" width="4.98" height="1.4" fill="#ce9178"/><rect x="20.28" y="138.20" width="4.98" height="1.4" fill="#ce9178"/><rect x="20.28" y="139.80" width="3.32" height="1.4" fill="#ce9178"/><rect x="24.43" y="139.80" width="9.13" height="1.4" fill="#ce9178"/><rect x="34.39" y="139.80" width="10.79" height="1.4" fill="#ce9178"/><rect x="46.01" y="139.80" width="8.30" height="1.4" fill="#ce9178"/><rect x="55.14" y="139.80" width="3.32" height="1.4" fill="#ce9178"/><rect x="59.29" y="139.80" width="3.32" height="1.4" fill="#ce9178"/><rect x="63.44" y="139.80" width="3.06" height="1.4" fill="#ce9178"/><rect x="23.60" y="141.40" width="1.66" height="1.4" fill="#ce9178"/><rect x="26.09" y="141.40" width="18.26" height="1.4" fill="#ce9178"/><rect x="44.35" y="141.40" width="1.66" height="1.4" fill="#c586c0"/><rect x="46.01" y="141.40" width="5.81" height="1.4" fill="#9cdcfe"/><rect x="51.82" y="141.40" width="0.83" height="1.4" fill="#c586c0"/><rect x="52.65" y="141.40" width="3.32" height="1.4" fill="#ce9178"/><rect x="20.28" y="143.00" width="4.98" height="1.4" fill="#ce9178"/><rect x="16.96" y="144.60" width="0.83" height="1.4" fill="#ce9178"/><rect x="17.79" y="144.60" width="0.83" height="1.4" fill="#d4d4d4"/><rect x="13.64" y="146.20" width="0.83" height="1.4" fill="#ffd700"/><rect x="13.64" y="149.40" width="9.96" height="1.4" fill="#9cdcfe"/><rect x="23.60" y="149.40" width="0.83" height="1.4" fill="#d4d4d4"/><rect x="24.43" y="149.40" width="9.13" height="1.4" fill="#dcdcaa"/><rect x="33.56" y="149.40" width="0.83" height="1.4" fill="#ffd700"/><rect x="34.39" y="149.40" width="11.62" height="1.4" fill="#4fc1ff"/><rect x="46.01" y="149.40" width="0.83" height="1.4" fill="#ffd700"/><rect x="46.84" y="149.40" width="0.83" height="1.4" fill="#d4d4d4"/><rect x="13.64" y="151.00" width="9.96" height="1.4" fill="#9cdcfe"/><rect x="23.60" y="151.00" width="0.83" height="1.4" fill="#d4d4d4"/><rect x="24.43" y="151.00" width="7.47" height="1.4" fill="#9cdcfe"/><rect x="32.73" y="151.00" width="0.83" height="1.4" fill="#d4d4d4"/><rect x="34.39" y="151.00" width="9.96" height="1.4" fill="#9cdcfe"/><rect x="44.35" y="151.00" width="0.83" height="1.4" fill="#d4d4d4"/><rect x="45.18" y="151.00" width="9.96" height="1.4" fill="#9cdcfe"/><rect x="55.14" y="151.00" width="0.83" height="1.4" fill="#d4d4d4"/><rect x="10.32" y="152.60" width="0.83" height="1.4" fill="#179fff"/><rect x="10.32" y="155.80" width="1.66" height="1.4" fill="#6a9955"/><rect x="12.81" y="155.80" width="5.81" height="1.4" fill="#6a9955"/><rect x="19.45" y="155.80" width="3.32" height="1.4" fill="#6a9955"/><rect x="23.60" y="155.80" width="5.81" height="1.4" fill="#6a9955"/><rect x="30.24" y="155.80" width="7.47" height="1.4" fill="#6a9955"/><rect x="38.54" y="155.80" width="2.49" height="1.4" fill="#6a9955"/><rect x="41.86" y="155.80" width="2.49" height="1.4" fill="#6a9955"/><rect x="45.18" y="155.80" width="8.30" height="1.4" fill="#6a9955"/><rect x="10.32" y="157.40" width="6.64" height="1.4" fill="#569cd6"/><rect x="17.79" y="157.40" width="11.62" height="1.4" fill="#dcdcaa"/><rect x="29.41" y="157.40" width="0.83" height="1.4" fill="#179fff"/><rect x="30.24" y="157.40" width="5.81" height="1.4" fill="#9cdcfe"/><rect x="36.05" y="157.40" width="0.83" height="1.4" fill="#179fff"/><rect x="37.71" y="157.40" width="0.83" height="1.4" fill="#179fff"/><rect x="13.64" y="159.00" width="1.66" height="1.4" fill="#6a9955"/><rect x="16.13" y="159.00" width="3.32" height="1.4" fill="#6a9955"/><rect x="20.28" y="159.00" width="3.32" height="1.4" fill="#6a9955"/><rect x="24.43" y="159.00" width="1.66" height="1.4" fill="#6a9955"/><rect x="26.92" y="159.00" width="9.13" height="1.4" fill="#6a9955"/><rect x="36.88" y="159.00" width="2.49" height="1.4" fill="#6a9955"/><rect x="40.20" y="159.00" width="8.30" height="1.4" fill="#6a9955"/><rect x="13.64" y="160.60" width="1.66" height="1.4" fill="#6a9955"/><rect x="16.13" y="160.60" width="2.49" height="1.4" fill="#6a9955"/><rect x="19.45" y="160.60" width="4.98" height="1.4" fill="#6a9955"/><rect x="25.26" y="160.60" width="7.47" height="1.4" fill="#6a9955"/><rect x="33.56" y="160.60" width="8.30" height="1.4" fill="#6a9955"/><rect x="42.69" y="160.60" width="5.81" height="1.4" fill="#6a9955"/><rect x="49.33" y="160.60" width="1.66" height="1.4" fill="#6a9955"/><rect x="51.82" y="160.60" width="6.64" height="1.4" fill="#6a9955"/><rect x="59.29" y="160.60" width="4.15" height="1.4" fill="#6a9955"/><rect x="13.64" y="162.20" width="4.15" height="1.4" fill="#569cd6"/><rect x="18.62" y="162.20" width="9.96" height="1.4" fill="#9cdcfe"/><rect x="29.41" y="162.20" width="0.83" height="1.4" fill="#d4d4d4"/><rect x="31.07" y="162.20" width="5.81" height="1.4" fill="#9cdcfe"/><rect x="36.88" y="162.20" width="0.83" height="1.4" fill="#d4d4d4"/><rect x="37.71" y="162.20" width="9.13" height="1.4" fill="#dcdcaa"/><rect x="46.84" y="162.20" width="0.83" height="1.4" fill="#ffd700"/><rect x="47.67" y="162.20" width="0.83" height="1.4" fill="#ffd700"/><rect x="48.50" y="162.20" width="0.83" height="1.4" fill="#d4d4d4"/><rect x="13.64" y="163.80" width="2.49" height="1.4" fill="#569cd6"/><rect x="16.96" y="163.80" width="6.64" height="1.4" fill="#9cdcfe"/><rect x="24.43" y="163.80" width="0.83" height="1.4" fill="#d4d4d4"/><rect x="26.09" y="163.80" width="1.66" height="1.4" fill="#ce9178"/><rect x="27.75" y="163.80" width="0.83" height="1.4" fill="#d4d4d4"/><rect x="13.64" y="167.00" width="1.66" height="1.4" fill="#c586c0"/><rect x="16.13" y="167.00" width="0.83" height="1.4" fill="#ffd700"/><rect x="16.96" y="167.00" width="9.96" height="1.4" fill="#9cdcfe"/><rect x="26.92" y="167.00" width="0.83" height="1.4" fill="#d4d4d4"/><rect x="27.75" y="167.00" width="6.64" height="1.4" fill="#dcdcaa"/><rect x="34.39" y="167.00" width="0.83" height="1.4" fill="#da70d6"/><rect x="35.22" y="167.00" width="4.98" height="1.4" fill="#ce9178"/><rect x="40.20" y="167.00" width="0.83" height="1.4" fill="#da70d6"/><rect x="41.86" y="167.00" width="0.83" height="1.4" fill="#d4d4d4"/><rect x="42.69" y="167.00" width="0.83" height="1.4" fill="#d4d4d4"/><rect x="44.35" y="167.00" width="9.96" height="1.4" fill="#9cdcfe"/><rect x="54.31" y="167.00" width="0.83" height="1.4" fill="#d4d4d4"/><rect x="55.14" y="167.00" width="6.64" height="1.4" fill="#dcdcaa"/><rect x="61.78" y="167.00" width="0.83" height="1.4" fill="#da70d6"/><rect x="62.61" y="167.00" width="3.89" height="1.4" fill="#ce9178"/><rect x="16.96" y="168.60" width="6.64" height="1.4" fill="#9cdcfe"/><rect x="24.43" y="168.60" width="0.83" height="1.4" fill="#d4d4d4"/><rect x="26.09" y="168.60" width="4.98" height="1.4" fill="#ce9178"/><rect x="31.90" y="168.60" width="2.49" height="1.4" fill="#ce9178"/><rect x="35.22" y="168.60" width="1.66" height="1.4" fill="#ce9178"/><rect x="37.71" y="168.60" width="7.47" height="1.4" fill="#ce9178"/><rect x="46.01" y="168.60" width="1.66" height="1.4" fill="#ce9178"/><rect x="48.50" y="168.60" width="4.15" height="1.4" fill="#ce9178"/><rect x="53.48" y="168.60" width="3.32" height="1.4" fill="#ce9178"/><rect x="57.63" y="168.60" width="6.64" height="1.4" fill="#ce9178"/><rect x="65.10" y="168.60" width="1.40" height="1.4" fill="#ce9178"/><rect x="13.64" y="170.20" width="0.83" height="1.4" fill="#ffd700"/><rect x="15.30" y="170.20" width="3.32" height="1.4" fill="#c586c0"/><rect x="19.45" y="170.20" width="1.66" height="1.4" fill="#c586c0"/><rect x="21.94" y="170.20" width="0.83" height="1.4" fill="#ffd700"/><rect x="22.77" y="170.20" width="9.96" height="1.4" fill="#9cdcfe"/><rect x="32.73" y="170.20" width="0.83" height="1.4" fill="#d4d4d4"/><rect x="33.56" y="170.20" width="6.64" height="1.4" fill="#dcdcaa"/><rect x="40.20" y="170.20" width="0.83" height="1.4" fill="#da70d6"/><rect x="41.03" y="170.20" width="9.96" height="1.4" fill="#ce9178"/><rect x="50.99" y="170.20" width="0.83" height="1.4" fill="#da70d6"/><rect x="51.82" y="170.20" width="0.83" height="1.4" fill="#ffd700"/><rect x="53.48" y="170.20" width="0.83" height="1.4" fill="#ffd700"/><rect x="16.96" y="171.80" width="6.64" height="1.4" fill="#9cdcfe"/><rect x="24.43" y="171.80" width="0.83" height="1.4" fill="#d4d4d4"/><rect x="26.09" y="171.80" width="4.15" height="1.4" fill="#ce9178"/><rect x="31.07" y="171.80" width="8.30" height="1.4" fill="#ce9178"/><rect x="40.20" y="171.80" width="4.15" height="1.4" fill="#ce9178"/><rect x="45.18" y="171.80" width="4.98" height="1.4" fill="#ce9178"/><rect x="50.99" y="171.80" width="4.98" height="1.4" fill="#ce9178"/><rect x="56.80" y="171.80" width="1.66" height="1.4" fill="#ce9178"/><rect x="59.29" y="171.80" width="4.98" height="1.4" fill="#ce9178"/><rect x="65.10" y="171.80" width="1.40" height="1.4" fill="#ce9178"/><rect x="13.64" y="173.40" width="0.83" height="1.4" fill="#ffd700"/><rect x="15.30" y="173.40" width="3.32" height="1.4" fill="#c586c0"/><rect x="19.45" y="173.40" width="1.66" height="1.4" fill="#c586c0"/><rect x="21.94" y="173.40" width="0.83" height="1.4" fill="#ffd700"/><rect x="22.77" y="173.40" width="9.96" height="1.4" fill="#9cdcfe"/><rect x="32.73" y="173.40" width="0.83" height="1.4" fill="#d4d4d4"/><rect x="33.56" y="173.40" width="6.64" height="1.4" fill="#dcdcaa"/><rect x="40.20" y="173.40" width="0.83" height="1.4" fill="#da70d6"/><rect x="41.03" y="173.40" width="10.79" height="1.4" fill="#ce9178"/><rect x="51.82" y="173.40" width="0.83" height="1.4" fill="#da70d6"/><rect x="52.65" y="173.40" width="0.83" height="1.4" fill="#ffd700"/><rect x="54.31" y="173.40" width="0.83" height="1.4" fill="#ffd700"/><rect x="16.96" y="175.00" width="6.64" height="1.4" fill="#9cdcfe"/><rect x="24.43" y="175.00" width="0.83" height="1.4" fill="#d4d4d4"/><rect x="26.09" y="175.00" width="3.32" height="1.4" fill="#ce9178"/><rect x="30.24" y="175.00" width="9.96" height="1.4" fill="#ce9178"/><rect x="41.03" y="175.00" width="2.49" height="1.4" fill="#ce9178"/><rect x="44.35" y="175.00" width="9.13" height="1.4" fill="#ce9178"/><rect x="54.31" y="175.00" width="5.81" height="1.4" fill="#ce9178"/><rect x="60.95" y="175.00" width="3.32" height="1.4" fill="#ce9178"/><rect x="65.10" y="175.00" width="1.40" height="1.4" fill="#ce9178"/><rect x="13.64" y="176.60" width="0.83" height="1.4" fill="#ffd700"/><rect x="15.30" y="176.60" width="3.32" height="1.4" fill="#c586c0"/><rect x="19.45" y="176.60" width="1.66" height="1.4" fill="#c586c0"/><rect x="21.94" y="176.60" width="0.83" height="1.4" fill="#ffd700"/><rect x="22.77" y="176.60" width="9.96" height="1.4" fill="#9cdcfe"/><rect x="32.73" y="176.60" width="0.83" height="1.4" fill="#d4d4d4"/><rect x="33.56" y="176.60" width="6.64" height="1.4" fill="#dcdcaa"/><rect x="40.20" y="176.60" width="0.83" height="1.4" fill="#da70d6"/><rect x="41.03" y="176.60" width="7.47" height="1.4" fill="#ce9178"/><rect x="48.50" y="176.60" width="0.83" height="1.4" fill="#da70d6"/><rect x="49.33" y="176.60" width="0.83" height="1.4" fill="#ffd700"/><rect x="50.99" y="176.60" width="0.83" height="1.4" fill="#ffd700"/><rect x="16.96" y="178.20" width="6.64" height="1.4" fill="#9cdcfe"/><rect x="24.43" y="178.20" width="0.83" height="1.4" fill="#d4d4d4"/><rect x="26.09" y="178.20" width="4.15" height="1.4" fill="#ce9178"/><rect x="31.07" y="178.20" width="5.81" height="1.4" fill="#ce9178"/><rect x="37.71" y="178.20" width="4.98" height="1.4" fill="#ce9178"/><rect x="43.52" y="178.20" width="8.30" height="1.4" fill="#ce9178"/><rect x="52.65" y="178.20" width="10.79" height="1.4" fill="#ce9178"/><rect x="64.27" y="178.20" width="2.23" height="1.4" fill="#ce9178"/><rect x="13.64" y="179.80" width="0.83" height="1.4" fill="#ffd700"/><rect x="15.30" y="179.80" width="3.32" height="1.4" fill="#c586c0"/><rect x="19.45" y="179.80" width="1.66" height="1.4" fill="#c586c0"/><rect x="21.94" y="179.80" width="0.83" height="1.4" fill="#ffd700"/><rect x="22.77" y="179.80" width="9.96" height="1.4" fill="#9cdcfe"/><rect x="32.73" y="179.80" width="0.83" height="1.4" fill="#d4d4d4"/><rect x="33.56" y="179.80" width="6.64" height="1.4" fill="#dcdcaa"/><rect x="40.20" y="179.80" width="0.83" height="1.4" fill="#da70d6"/><rect x="41.03" y="179.80" width="6.64" height="1.4" fill="#ce9178"/><rect x="47.67" y="179.80" width="0.83" height="1.4" fill="#da70d6"/><rect x="49.33" y="179.80" width="0.83" height="1.4" fill="#d4d4d4"/><rect x="50.16" y="179.80" width="0.83" height="1.4" fill="#d4d4d4"/><rect x="51.82" y="179.80" width="9.96" height="1.4" fill="#9cdcfe"/><rect x="61.78" y="179.80" width="0.83" height="1.4" fill="#d4d4d4"/><rect x="62.61" y="179.80" width="3.89" height="1.4" fill="#dcdcaa"/><rect x="16.96" y="181.40" width="6.64" height="1.4" fill="#9cdcfe"/><rect x="24.43" y="181.40" width="0.83" height="1.4" fill="#d4d4d4"/><rect x="26.09" y="181.40" width="4.98" height="1.4" fill="#ce9178"/><rect x="31.90" y="181.40" width="4.98" height="1.4" fill="#ce9178"/><rect x="37.71" y="181.40" width="4.15" height="1.4" fill="#ce9178"/><rect x="42.69" y="181.40" width="8.30" height="1.4" fill="#ce9178"/><rect x="51.82" y="181.40" width="3.32" height="1.4" fill="#ce9178"/><rect x="55.97" y="181.40" width="9.13" height="1.4" fill="#ce9178"/><rect x="65.93" y="181.40" width="0.57" height="1.4" fill="#ce9178"/><rect x="13.64" y="183.00" width="0.83" height="1.4" fill="#ffd700"/><rect x="15.30" y="183.00" width="3.32" height="1.4" fill="#c586c0"/><rect x="19.45" y="183.00" width="1.66" height="1.4" fill="#c586c0"/><rect x="21.94" y="183.00" width="0.83" height="1.4" fill="#ffd700"/><rect x="22.77" y="183.00" width="9.96" height="1.4" fill="#9cdcfe"/><rect x="32.73" y="183.00" width="0.83" height="1.4" fill="#d4d4d4"/><rect x="33.56" y="183.00" width="6.64" height="1.4" fill="#dcdcaa"/><rect x="40.20" y="183.00" width="0.83" height="1.4" fill="#da70d6"/><rect x="41.03" y="183.00" width="5.81" height="1.4" fill="#ce9178"/><rect x="46.84" y="183.00" width="0.83" height="1.4" fill="#da70d6"/><rect x="48.50" y="183.00" width="0.83" height="1.4" fill="#d4d4d4"/><rect x="49.33" y="183.00" width="0.83" height="1.4" fill="#d4d4d4"/><rect x="50.99" y="183.00" width="9.96" height="1.4" fill="#9cdcfe"/><rect x="60.95" y="183.00" width="0.83" height="1.4" fill="#d4d4d4"/><rect x="61.78" y="183.00" width="4.72" height="1.4" fill="#dcdcaa"/><rect x="16.96" y="184.60" width="6.64" height="1.4" fill="#9cdcfe"/><rect x="24.43" y="184.60" width="0.83" height="1.4" fill="#d4d4d4"/><rect x="26.09" y="184.60" width="4.15" height="1.4" fill="#ce9178"/><rect x="31.07" y="184.60" width="3.32" height="1.4" fill="#ce9178"/><rect x="35.22" y="184.60" width="4.98" height="1.4" fill="#ce9178"/><rect x="41.03" y="184.60" width="5.81" height="1.4" fill="#ce9178"/><rect x="47.67" y="184.60" width="5.81" height="1.4" fill="#ce9178"/><rect x="54.31" y="184.60" width="11.62" height="1.4" fill="#ce9178"/><rect x="13.64" y="186.20" width="0.83" height="1.4" fill="#ffd700"/><rect x="15.30" y="186.20" width="3.32" height="1.4" fill="#c586c0"/><rect x="19.45" y="186.20" width="1.66" height="1.4" fill="#c586c0"/><rect x="21.94" y="186.20" width="0.83" height="1.4" fill="#ffd700"/><rect x="22.77" y="186.20" width="9.96" height="1.4" fill="#9cdcfe"/><rect x="32.73" y="186.20" width="0.83" height="1.4" fill="#d4d4d4"/><rect x="33.56" y="186.20" width="6.64" height="1.4" fill="#dcdcaa"/><rect x="40.20" y="186.20" width="0.83" height="1.4" fill="#da70d6"/><rect x="41.03" y="186.20" width="5.81" height="1.4" fill="#ce9178"/><rect x="46.84" y="186.20" width="0.83" height="1.4" fill="#da70d6"/><rect x="48.50" y="186.20" width="0.83" height="1.4" fill="#d4d4d4"/><rect x="49.33" y="186.20" width="0.83" height="1.4" fill="#d4d4d4"/><rect x="50.99" y="186.20" width="9.96" height="1.4" fill="#9cdcfe"/><rect x="60.95" y="186.20" width="0.83" height="1.4" fill="#d4d4d4"/><rect x="61.78" y="186.20" width="4.72" height="1.4" fill="#dcdcaa"/><rect x="16.96" y="187.80" width="6.64" height="1.4" fill="#9cdcfe"/><rect x="24.43" y="187.80" width="0.83" height="1.4" fill="#d4d4d4"/><rect x="26.09" y="187.80" width="4.15" height="1.4" fill="#ce9178"/><rect x="31.07" y="187.80" width="4.15" height="1.4" fill="#ce9178"/><rect x="36.05" y="187.80" width="10.79" height="1.4" fill="#ce9178"/><rect x="47.67" y="187.80" width="9.96" height="1.4" fill="#ce9178"/><rect x="58.46" y="187.80" width="8.04" height="1.4" fill="#ce9178"/><rect x="13.64" y="189.40" width="0.83" height="1.4" fill="#ffd700"/><rect x="15.30" y="189.40" width="3.32" height="1.4" fill="#c586c0"/><rect x="19.45" y="189.40" width="1.66" height="1.4" fill="#c586c0"/><rect x="21.94" y="189.40" width="0.83" height="1.4" fill="#ffd700"/><rect x="22.77" y="189.40" width="9.96" height="1.4" fill="#9cdcfe"/><rect x="32.73" y="189.40" width="0.83" height="1.4" fill="#d4d4d4"/><rect x="33.56" y="189.40" width="6.64" height="1.4" fill="#dcdcaa"/><rect x="40.20" y="189.40" width="0.83" height="1.4" fill="#da70d6"/><rect x="41.03" y="189.40" width="5.81" height="1.4" fill="#ce9178"/><rect x="46.84" y="189.40" width="0.83" height="1.4" fill="#da70d6"/><rect x="48.50" y="189.40" width="0.83" height="1.4" fill="#d4d4d4"/><rect x="49.33" y="189.40" width="0.83" height="1.4" fill="#d4d4d4"/><rect x="50.99" y="189.40" width="9.96" height="1.4" fill="#9cdcfe"/><rect x="60.95" y="189.40" width="0.83" height="1.4" fill="#d4d4d4"/><rect x="61.78" y="189.40" width="4.72" height="1.4" fill="#dcdcaa"/><rect x="16.96" y="191.00" width="6.64" height="1.4" fill="#9cdcfe"/><rect x="24.43" y="191.00" width="0.83" height="1.4" fill="#d4d4d4"/><rect x="26.09" y="191.00" width="4.15" height="1.4" fill="#ce9178"/><rect x="31.07" y="191.00" width="4.98" height="1.4" fill="#ce9178"/><rect x="36.88" y="191.00" width="4.98" height="1.4" fill="#ce9178"/><rect x="42.69" y="191.00" width="4.98" height="1.4" fill="#ce9178"/><rect x="48.50" y="191.00" width="1.66" height="1.4" fill="#ce9178"/><rect x="50.99" y="191.00" width="9.96" height="1.4" fill="#ce9178"/><rect x="61.78" y="191.00" width="4.72" height="1.4" fill="#ce9178"/><rect x="13.64" y="192.60" width="0.83" height="1.4" fill="#ffd700"/><rect x="15.30" y="192.60" width="3.32" height="1.4" fill="#c586c0"/><rect x="19.45" y="192.60" width="1.66" height="1.4" fill="#c586c0"/><rect x="21.94" y="192.60" width="0.83" height="1.4" fill="#ffd700"/><rect x="22.77" y="192.60" width="9.96" height="1.4" fill="#9cdcfe"/><rect x="32.73" y="192.60" width="0.83" height="1.4" fill="#d4d4d4"/><rect x="33.56" y="192.60" width="6.64" height="1.4" fill="#dcdcaa"/><rect x="40.20" y="192.60" width="0.83" height="1.4" fill="#da70d6"/><rect x="41.03" y="192.60" width="6.64" height="1.4" fill="#ce9178"/><rect x="47.67" y="192.60" width="0.83" height="1.4" fill="#da70d6"/><rect x="49.33" y="192.60" width="0.83" height="1.4" fill="#d4d4d4"/><rect x="50.16" y="192.60" width="0.83" height="1.4" fill="#d4d4d4"/><rect x="51.82" y="192.60" width="9.96" height="1.4" fill="#9cdcfe"/><rect x="61.78" y="192.60" width="0.83" height="1.4" fill="#d4d4d4"/><rect x="62.61" y="192.60" width="3.89" height="1.4" fill="#dcdcaa"/><rect x="16.96" y="194.20" width="6.64" height="1.4" fill="#9cdcfe"/><rect x="24.43" y="194.20" width="0.83" height="1.4" fill="#d4d4d4"/><rect x="26.09" y="194.20" width="4.15" height="1.4" fill="#ce9178"/><rect x="31.07" y="194.20" width="1.66" height="1.4" fill="#ce9178"/><rect x="33.56" y="194.20" width="5.81" height="1.4" fill="#ce9178"/><rect x="40.20" y="194.20" width="3.32" height="1.4" fill="#ce9178"/><rect x="44.35" y="194.20" width="10.79" height="1.4" fill="#ce9178"/><rect x="55.97" y="194.20" width="0.83" height="1.4" fill="#ce9178"/><rect x="57.63" y="194.20" width="2.49" height="1.4" fill="#ce9178"/><rect x="60.95" y="194.20" width="5.55" height="1.4" fill="#ce9178"/><rect x="13.64" y="195.80" width="0.83" height="1.4" fill="#ffd700"/><rect x="15.30" y="195.80" width="3.32" height="1.4" fill="#c586c0"/><rect x="19.45" y="195.80" width="1.66" height="1.4" fill="#c586c0"/><rect x="21.94" y="195.80" width="0.83" height="1.4" fill="#ffd700"/><rect x="22.77" y="195.80" width="9.96" height="1.4" fill="#9cdcfe"/><rect x="32.73" y="195.80" width="0.83" height="1.4" fill="#d4d4d4"/><rect x="33.56" y="195.80" width="6.64" height="1.4" fill="#dcdcaa"/><rect x="40.20" y="195.80" width="0.83" height="1.4" fill="#da70d6"/><rect x="41.03" y="195.80" width="4.98" height="1.4" fill="#ce9178"/><rect x="46.01" y="195.80" width="0.83" height="1.4" fill="#da70d6"/><rect x="47.67" y="195.80" width="0.83" height="1.4" fill="#d4d4d4"/><rect x="48.50" y="195.80" width="0.83" height="1.4" fill="#d4d4d4"/><rect x="50.16" y="195.80" width="9.96" height="1.4" fill="#9cdcfe"/><rect x="60.12" y="195.80" width="0.83" height="1.4" fill="#d4d4d4"/><rect x="60.95" y="195.80" width="5.55" height="1.4" fill="#dcdcaa"/><rect x="16.96" y="197.40" width="6.64" height="1.4" fill="#9cdcfe"/><rect x="24.43" y="197.40" width="0.83" height="1.4" fill="#d4d4d4"/><rect x="26.09" y="197.40" width="4.15" height="1.4" fill="#ce9178"/><rect x="31.07" y="197.40" width="4.98" height="1.4" fill="#ce9178"/><rect x="36.88" y="197.40" width="4.98" height="1.4" fill="#ce9178"/><rect x="42.69" y="197.40" width="9.13" height="1.4" fill="#ce9178"/><rect x="52.65" y="197.40" width="4.98" height="1.4" fill="#ce9178"/><rect x="58.46" y="197.40" width="8.04" height="1.4" fill="#ce9178"/><rect x="13.64" y="199.00" width="0.83" height="1.4" fill="#ffd700"/><rect x="15.30" y="199.00" width="3.32" height="1.4" fill="#c586c0"/><rect x="19.45" y="199.00" width="0.83" height="1.4" fill="#ffd700"/><rect x="16.96" y="200.60" width="6.64" height="1.4" fill="#9cdcfe"/><rect x="24.43" y="200.60" width="0.83" height="1.4" fill="#d4d4d4"/><rect x="26.09" y="200.60" width="10.79" height="1.4" fill="#ce9178"/><rect x="37.71" y="200.60" width="6.64" height="1.4" fill="#ce9178"/><rect x="45.18" y="200.60" width="2.49" height="1.4" fill="#ce9178"/><rect x="48.50" y="200.60" width="4.15" height="1.4" fill="#ce9178"/><rect x="53.48" y="200.60" width="1.66" height="1.4" fill="#ce9178"/><rect x="55.97" y="200.60" width="6.64" height="1.4" fill="#ce9178"/><rect x="63.44" y="200.60" width="3.06" height="1.4" fill="#ce9178"/><rect x="13.64" y="202.20" width="0.83" height="1.4" fill="#ffd700"/><rect x="13.64" y="205.40" width="1.66" height="1.4" fill="#6a9955"/><rect x="16.13" y="205.40" width="5.81" height="1.4" fill="#6a9955"/><rect x="22.77" y="205.40" width="7.47" height="1.4" fill="#6a9955"/><rect x="31.07" y="205.40" width="1.66" height="1.4" fill="#6a9955"/><rect x="33.56" y="205.40" width="6.64" height="1.4" fill="#6a9955"/><rect x="13.64" y="207.00" width="14.11" height="1.4" fill="#9cdcfe"/><rect x="27.75" y="207.00" width="0.83" height="1.4" fill="#d4d4d4"/><rect x="28.58" y="207.00" width="7.47" height="1.4" fill="#9cdcfe"/><rect x="36.05" y="207.00" width="0.83" height="1.4" fill="#d4d4d4"/><rect x="36.88" y="207.00" width="2.49" height="1.4" fill="#dcdcaa"/><rect x="39.37" y="207.00" width="0.83" height="1.4" fill="#ffd700"/><rect x="40.20" y="207.00" width="6.64" height="1.4" fill="#ce9178"/><rect x="46.84" y="207.00" width="0.83" height="1.4" fill="#ffd700"/><rect x="47.67" y="207.00" width="0.83" height="1.4" fill="#d4d4d4"/><rect x="13.64" y="210.20" width="1.66" height="1.4" fill="#6a9955"/><rect x="16.13" y="210.20" width="4.98" height="1.4" fill="#6a9955"/><rect x="21.94" y="210.20" width="7.47" height="1.4" fill="#6a9955"/><rect x="30.24" y="210.20" width="1.66" height="1.4" fill="#6a9955"/><rect x="32.73" y="210.20" width="3.32" height="1.4" fill="#6a9955"/><rect x="13.64" y="211.80" width="13.28" height="1.4" fill="#dcdcaa"/><rect x="26.92" y="211.80" width="0.83" height="1.4" fill="#ffd700"/><rect x="27.75" y="211.80" width="6.64" height="1.4" fill="#9cdcfe"/><rect x="34.39" y="211.80" width="0.83" height="1.4" fill="#d4d4d4"/><rect x="36.05" y="211.80" width="4.15" height="1.4" fill="#ce9178"/><rect x="40.20" y="211.80" width="0.83" height="1.4" fill="#ffd700"/><rect x="41.03" y="211.80" width="0.83" height="1.4" fill="#d4d4d4"/><rect x="10.32" y="213.40" width="0.83" height="1.4" fill="#179fff"/><rect x="10.32" y="216.60" width="1.66" height="1.4" fill="#6a9955"/><rect x="10.32" y="218.20" width="1.66" height="1.4" fill="#6a9955"/><rect x="12.81" y="218.20" width="9.13" height="1.4" fill="#6a9955"/><rect x="22.77" y="218.20" width="2.49" height="1.4" fill="#6a9955"/><rect x="26.09" y="218.20" width="8.30" height="1.4" fill="#6a9955"/><rect x="35.22" y="218.20" width="9.13" height="1.4" fill="#6a9955"/><rect x="10.32" y="219.80" width="4.15" height="1.4" fill="#6a9955"/><rect x="15.30" y="219.80" width="6.64" height="1.4" fill="#6a9955"/><rect x="22.77" y="219.80" width="19.09" height="1.4" fill="#6a9955"/><rect x="42.69" y="219.80" width="0.83" height="1.4" fill="#6a9955"/><rect x="13.64" y="221.40" width="4.15" height="1.4" fill="#6a9955"/><rect x="18.62" y="221.40" width="5.81" height="1.4" fill="#6a9955"/><rect x="25.26" y="221.40" width="0.83" height="1.4" fill="#6a9955"/><rect x="26.92" y="221.40" width="10.79" height="1.4" fill="#6a9955"/><rect x="13.64" y="223.00" width="2.49" height="1.4" fill="#6a9955"/><rect x="16.96" y="223.00" width="0.83" height="1.4" fill="#6a9955"/><rect x="16.96" y="224.60" width="4.15" height="1.4" fill="#6a9955"/><rect x="21.94" y="224.60" width="2.49" height="1.4" fill="#6a9955"/><rect x="25.26" y="224.60" width="0.83" height="1.4" fill="#6a9955"/><rect x="26.92" y="224.60" width="4.15" height="1.4" fill="#6a9955"/><rect x="31.90" y="224.60" width="34.60" height="1.4" fill="#6a9955"/><rect x="20.28" y="226.20" width="5.81" height="1.4" fill="#6a9955"/><rect x="26.92" y="226.20" width="5.81" height="1.4" fill="#6a9955"/><rect x="20.28" y="227.80" width="6.64" height="1.4" fill="#6a9955"/><rect x="27.75" y="227.80" width="0.83" height="1.4" fill="#6a9955"/><rect x="23.60" y="229.40" width="13.28" height="1.4" fill="#6a9955"/><rect x="37.71" y="229.40" width="5.81" height="1.4" fill="#6a9955"/><rect x="44.35" y="229.40" width="9.96" height="1.4" fill="#6a9955"/><rect x="23.60" y="231.00" width="12.45" height="1.4" fill="#6a9955"/><rect x="36.88" y="231.00" width="14.94" height="1.4" fill="#6a9955"/><rect x="20.28" y="232.60" width="1.66" height="1.4" fill="#6a9955"/><rect x="20.28" y="234.20" width="4.15" height="1.4" fill="#6a9955"/><rect x="25.26" y="234.20" width="13.28" height="1.4" fill="#6a9955"/><rect x="23.60" y="235.80" width="4.98" height="1.4" fill="#6a9955"/><rect x="29.41" y="235.80" width="30.71" height="1.4" fill="#6a9955"/><rect x="23.60" y="237.40" width="7.47" height="1.4" fill="#6a9955"/><rect x="31.90" y="237.40" width="1.66" height="1.4" fill="#6a9955"/><rect x="34.39" y="237.40" width="4.15" height="1.4" fill="#6a9955"/><rect x="39.37" y="237.40" width="5.81" height="1.4" fill="#6a9955"/><rect x="46.01" y="237.40" width="6.64" height="1.4" fill="#6a9955"/><rect x="53.48" y="237.40" width="5.81" height="1.4" fill="#6a9955"/><rect x="60.12" y="237.40" width="1.66" height="1.4" fill="#6a9955"/><rect x="20.28" y="239.00" width="1.66" height="1.4" fill="#6a9955"/><rect x="16.96" y="240.60" width="2.49" height="1.4" fill="#6a9955"/><rect x="16.96" y="242.20" width="4.15" height="1.4" fill="#6a9955"/><rect x="21.94" y="242.20" width="3.32" height="1.4" fill="#6a9955"/><rect x="26.09" y="242.20" width="0.83" height="1.4" fill="#6a9955"/><rect x="27.75" y="242.20" width="4.15" height="1.4" fill="#6a9955"/><rect x="32.73" y="242.20" width="9.13" height="1.4" fill="#6a9955"/><rect x="16.96" y="243.80" width="4.98" height="1.4" fill="#6a9955"/><rect x="22.77" y="243.80" width="26.56" height="1.4" fill="#6a9955"/><rect x="13.64" y="245.40" width="0.83" height="1.4" fill="#6a9955"/><rect x="15.30" y="245.40" width="4.15" height="1.4" fill="#6a9955"/><rect x="20.28" y="245.40" width="5.81" height="1.4" fill="#6a9955"/><rect x="26.92" y="245.40" width="0.83" height="1.4" fill="#6a9955"/><rect x="16.96" y="247.00" width="19.09" height="1.4" fill="#6a9955"/><rect x="36.88" y="247.00" width="5.81" height="1.4" fill="#6a9955"/><rect x="13.64" y="248.60" width="0.83" height="1.4" fill="#6a9955"/><rect x="10.32" y="250.20" width="0.83" height="1.4" fill="#6a9955"/><rect x="10.32" y="251.80" width="1.66" height="1.4" fill="#6a9955"/><rect x="10.32" y="255.00" width="1.66" height="1.4" fill="#6a9955"/><rect x="12.81" y="255.00" width="6.64" height="1.4" fill="#6a9955"/><rect x="20.28" y="255.00" width="1.66" height="1.4" fill="#6a9955"/><rect x="22.77" y="255.00" width="8.30" height="1.4" fill="#6a9955"/><rect x="10.32" y="256.60" width="4.15" height="1.4" fill="#569cd6"/><rect x="15.30" y="256.60" width="4.98" height="1.4" fill="#9cdcfe"/><rect x="21.11" y="256.60" width="0.83" height="1.4" fill="#d4d4d4"/><rect x="22.77" y="256.60" width="6.64" height="1.4" fill="#9cdcfe"/><rect x="29.41" y="256.60" width="0.83" height="1.4" fill="#d4d4d4"/><rect x="30.24" y="256.60" width="13.28" height="1.4" fill="#dcdcaa"/><rect x="43.52" y="256.60" width="0.83" height="1.4" fill="#179fff"/><rect x="44.35" y="256.60" width="14.11" height="1.4" fill="#ce9178"/><rect x="58.46" y="256.60" width="0.83" height="1.4" fill="#179fff"/><rect x="59.29" y="256.60" width="0.83" height="1.4" fill="#d4d4d4"/><rect x="10.32" y="258.20" width="2.49" height="1.4" fill="#569cd6"/><rect x="13.64" y="258.20" width="9.96" height="1.4" fill="#9cdcfe"/><rect x="24.43" y="258.20" width="0.83" height="1.4" fill="#d4d4d4"/><rect x="26.09" y="258.20" width="0.83" height="1.4" fill="#b5cea8"/><rect x="26.92" y="258.20" width="0.83" height="1.4" fill="#d4d4d4"/><rect x="10.32" y="259.80" width="6.64" height="1.4" fill="#569cd6"/><rect x="17.79" y="259.80" width="7.47" height="1.4" fill="#dcdcaa"/><rect x="25.26" y="259.80" width="0.83" height="1.4" fill="#179fff"/><rect x="26.09" y="259.80" width="4.15" height="1.4" fill="#9cdcfe"/><rect x="30.24" y="259.80" width="0.83" height="1.4" fill="#179fff"/><rect x="31.90" y="259.80" width="0.83" height="1.4" fill="#179fff"/><rect x="13.64" y="261.40" width="4.98" height="1.4" fill="#9cdcfe"/><rect x="18.62" y="261.40" width="0.83" height="1.4" fill="#d4d4d4"/><rect x="19.45" y="261.40" width="5.81" height="1.4" fill="#dcdcaa"/><rect x="25.26" y="261.40" width="0.83" height="1.4" fill="#ffd700"/><rect x="26.09" y="261.40" width="0.83" height="1.4" fill="#da70d6"/><rect x="26.92" y="261.40" width="4.15" height="1.4" fill="#9cdcfe"/><rect x="31.07" y="261.40" width="0.83" height="1.4" fill="#d4d4d4"/><rect x="32.73" y="261.40" width="0.83" height="1.4" fill="#9cdcfe"/><rect x="33.56" y="261.40" width="0.83" height="1.4" fill="#da70d6"/><rect x="35.22" y="261.40" width="1.66" height="1.4" fill="#569cd6"/><rect x="37.71" y="261.40" width="0.83" height="1.4" fill="#da70d6"/><rect x="16.96" y="263.00" width="4.15" height="1.4" fill="#9cdcfe"/><rect x="21.11" y="263.00" width="0.83" height="1.4" fill="#d4d4d4"/><rect x="21.94" y="263.00" width="7.47" height="1.4" fill="#9cdcfe"/><rect x="29.41" y="263.00" width="0.83" height="1.4" fill="#d4d4d4"/><rect x="30.24" y="263.00" width="4.98" height="1.4" fill="#dcdcaa"/><rect x="35.22" y="263.00" width="0.83" height="1.4" fill="#179fff"/><rect x="36.05" y="263.00" width="6.64" height="1.4" fill="#ce9178"/><rect x="42.69" y="263.00" width="0.83" height="1.4" fill="#d4d4d4"/><rect x="44.35" y="263.00" width="0.83" height="1.4" fill="#9cdcfe"/><rect x="46.01" y="263.00" width="0.83" height="1.4" fill="#d4d4d4"/><rect x="46.84" y="263.00" width="0.83" height="1.4" fill="#d4d4d4"/><rect x="47.67" y="263.00" width="0.83" height="1.4" fill="#d4d4d4"/><rect x="49.33" y="263.00" width="4.15" height="1.4" fill="#9cdcfe"/><rect x="53.48" y="263.00" width="0.83" height="1.4" fill="#179fff"/><rect x="54.31" y="263.00" width="0.83" height="1.4" fill="#d4d4d4"/><rect x="13.64" y="264.60" width="0.83" height="1.4" fill="#da70d6"/><rect x="14.47" y="264.60" width="0.83" height="1.4" fill="#ffd700"/><rect x="15.30" y="264.60" width="0.83" height="1.4" fill="#d4d4d4"/><rect x="10.32" y="266.20" width="0.83" height="1.4" fill="#179fff"/><rect x="10.32" y="267.80" width="9.13" height="1.4" fill="#dcdcaa"/><rect x="19.45" y="267.80" width="0.83" height="1.4" fill="#179fff"/><rect x="20.28" y="267.80" width="0.83" height="1.4" fill="#ffd700"/><rect x="21.11" y="267.80" width="0.83" height="1.4" fill="#ffd700"/><rect x="22.77" y="267.80" width="1.66" height="1.4" fill="#569cd6"/><rect x="25.26" y="267.80" width="0.83" height="1.4" fill="#ffd700"/><rect x="13.64" y="269.40" width="9.96" height="1.4" fill="#9cdcfe"/><rect x="24.43" y="269.40" width="0.83" height="1.4" fill="#d4d4d4"/><rect x="26.09" y="269.40" width="0.83" height="1.4" fill="#da70d6"/><rect x="26.92" y="269.40" width="9.96" height="1.4" fill="#9cdcfe"/><rect x="37.71" y="269.40" width="0.83" height="1.4" fill="#d4d4d4"/><rect x="39.37" y="269.40" width="0.83" height="1.4" fill="#b5cea8"/><rect x="40.20" y="269.40" width="0.83" height="1.4" fill="#da70d6"/><rect x="41.86" y="269.40" width="0.83" height="1.4" fill="#d4d4d4"/><rect x="43.52" y="269.40" width="4.98" height="1.4" fill="#9cdcfe"/><rect x="48.50" y="269.40" width="0.83" height="1.4" fill="#d4d4d4"/><rect x="49.33" y="269.40" width="4.98" height="1.4" fill="#9cdcfe"/><rect x="54.31" y="269.40" width="0.83" height="1.4" fill="#d4d4d4"/><rect x="13.64" y="271.00" width="7.47" height="1.4" fill="#dcdcaa"/><rect x="21.11" y="271.00" width="0.83" height="1.4" fill="#da70d6"/><rect x="21.94" y="271.00" width="9.96" height="1.4" fill="#9cdcfe"/><rect x="31.90" y="271.00" width="0.83" height="1.4" fill="#da70d6"/><rect x="32.73" y="271.00" width="0.83" height="1.4" fill="#d4d4d4"/><rect x="10.32" y="272.60" width="0.83" height="1.4" fill="#ffd700"/><rect x="11.15" y="272.60" width="0.83" height="1.4" fill="#d4d4d4"/><rect x="12.81" y="272.60" width="3.32" height="1.4" fill="#b5cea8"/><rect x="16.13" y="272.60" width="0.83" height="1.4" fill="#179fff"/><rect x="16.96" y="272.60" width="0.83" height="1.4" fill="#d4d4d4"/><rect x="10.32" y="275.80" width="1.66" height="1.4" fill="#6a9955"/><rect x="12.81" y="275.80" width="7.47" height="1.4" fill="#6a9955"/><rect x="21.11" y="275.80" width="1.66" height="1.4" fill="#6a9955"/><rect x="23.60" y="275.80" width="4.98" height="1.4" fill="#6a9955"/><rect x="29.41" y="275.80" width="4.15" height="1.4" fill="#6a9955"/><rect x="10.32" y="277.40" width="6.64" height="1.4" fill="#9cdcfe"/><rect x="16.96" y="277.40" width="0.83" height="1.4" fill="#d4d4d4"/><rect x="17.79" y="277.40" width="13.28" height="1.4" fill="#dcdcaa"/><rect x="31.07" y="277.40" width="0.83" height="1.4" fill="#179fff"/><rect x="31.90" y="277.40" width="11.62" height="1.4" fill="#ce9178"/><rect x="43.52" y="277.40" width="0.83" height="1.4" fill="#179fff"/><rect x="44.35" y="277.40" width="0.83" height="1.4" fill="#d4d4d4"/><rect x="45.18" y="277.40" width="5.81" height="1.4" fill="#dcdcaa"/><rect x="50.99" y="277.40" width="0.83" height="1.4" fill="#179fff"/><rect x="51.82" y="277.40" width="4.98" height="1.4" fill="#9cdcfe"/><rect x="57.63" y="277.40" width="1.66" height="1.4" fill="#569cd6"/><rect x="60.12" y="277.40" width="0.83" height="1.4" fill="#ffd700"/><rect x="13.64" y="279.00" width="4.98" height="1.4" fill="#9cdcfe"/><rect x="18.62" y="279.00" width="0.83" height="1.4" fill="#d4d4d4"/><rect x="19.45" y="279.00" width="13.28" height="1.4" fill="#dcdcaa"/><rect x="32.73" y="279.00" width="0.83" height="1.4" fill="#da70d6"/><rect x="33.56" y="279.00" width="5.81" height="1.4" fill="#ce9178"/><rect x="39.37" y="279.00" width="0.83" height="1.4" fill="#d4d4d4"/><rect x="41.03" y="279.00" width="6.64" height="1.4" fill="#569cd6"/><rect x="47.67" y="279.00" width="0.83" height="1.4" fill="#179fff"/><rect x="48.50" y="279.00" width="0.83" height="1.4" fill="#9cdcfe"/><rect x="49.33" y="279.00" width="0.83" height="1.4" fill="#179fff"/><rect x="50.99" y="279.00" width="0.83" height="1.4" fill="#179fff"/><rect x="16.96" y="280.60" width="0.83" height="1.4" fill="#9cdcfe"/><rect x="17.79" y="280.60" width="0.83" height="1.4" fill="#d4d4d4"/><rect x="18.62" y="280.60" width="11.62" height="1.4" fill="#dcdcaa"/><rect x="30.24" y="280.60" width="0.83" height="1.4" fill="#ffd700"/><rect x="31.07" y="280.60" width="0.83" height="1.4" fill="#ffd700"/><rect x="31.90" y="280.60" width="0.83" height="1.4" fill="#d4d4d4"/><rect x="16.96" y="282.20" width="4.15" height="1.4" fill="#569cd6"/><rect x="21.94" y="282.20" width="4.98" height="1.4" fill="#9cdcfe"/><rect x="27.75" y="282.20" width="0.83" height="1.4" fill="#d4d4d4"/><rect x="29.41" y="282.20" width="6.64" height="1.4" fill="#9cdcfe"/><rect x="36.05" y="282.20" width="0.83" height="1.4" fill="#d4d4d4"/><rect x="36.88" y="282.20" width="10.79" height="1.4" fill="#dcdcaa"/><rect x="47.67" y="282.20" width="0.83" height="1.4" fill="#ffd700"/><rect x="48.50" y="282.20" width="3.32" height="1.4" fill="#9cdcfe"/><rect x="51.82" y="282.20" width="0.83" height="1.4" fill="#d4d4d4"/><rect x="52.65" y="282.20" width="9.96" height="1.4" fill="#dcdcaa"/><rect x="62.61" y="282.20" width="0.83" height="1.4" fill="#da70d6"/><rect x="63.44" y="282.20" width="3.06" height="1.4" fill="#ce9178"/><rect x="16.96" y="283.80" width="1.66" height="1.4" fill="#c586c0"/><rect x="19.45" y="283.80" width="0.83" height="1.4" fill="#ffd700"/><rect x="20.28" y="283.80" width="4.98" height="1.4" fill="#9cdcfe"/><rect x="25.26" y="283.80" width="0.83" height="1.4" fill="#ffd700"/><rect x="26.92" y="283.80" width="0.83" height="1.4" fill="#ffd700"/><rect x="20.28" y="285.40" width="4.98" height="1.4" fill="#9cdcfe"/><rect x="25.26" y="285.40" width="0.83" height="1.4" fill="#d4d4d4"/><rect x="26.09" y="285.40" width="11.62" height="1.4" fill="#dcdcaa"/><rect x="37.71" y="285.40" width="0.83" height="1.4" fill="#da70d6"/><rect x="38.54" y="285.40" width="0.83" height="1.4" fill="#179fff"/><rect x="40.20" y="285.40" width="6.64" height="1.4" fill="#9cdcfe"/><rect x="46.84" y="285.40" width="0.83" height="1.4" fill="#d4d4d4"/><rect x="48.50" y="285.40" width="6.64" height="1.4" fill="#ce9178"/><rect x="55.97" y="285.40" width="0.83" height="1.4" fill="#179fff"/><rect x="56.80" y="285.40" width="0.83" height="1.4" fill="#da70d6"/><rect x="57.63" y="285.40" width="0.83" height="1.4" fill="#d4d4d4"/><rect x="16.96" y="287.00" width="0.83" height="1.4" fill="#ffd700"/><rect x="13.64" y="288.60" width="0.83" height="1.4" fill="#179fff"/><rect x="14.47" y="288.60" width="0.83" height="1.4" fill="#da70d6"/><rect x="15.30" y="288.60" width="0.83" height="1.4" fill="#d4d4d4"/><rect x="10.32" y="290.20" width="0.83" height="1.4" fill="#ffd700"/><rect x="11.15" y="290.20" width="0.83" height="1.4" fill="#179fff"/><rect x="11.98" y="290.20" width="0.83" height="1.4" fill="#d4d4d4"/><rect x="7.00" y="291.80" width="0.83" height="1.4" fill="#da70d6"/><rect x="7.83" y="291.80" width="0.83" height="1.4" fill="#ffd700"/><rect x="8.66" y="291.80" width="0.83" height="1.4" fill="#d4d4d4"/></svg>
<div style="position:absolute;left:768.5px;top:59px;width:1.5px;height:782px;background:#141414;"></div>
<div style="position:absolute;left:837px;top:59px;width:1px;height:782px;background:#151515;"></div>
<div style="position:absolute;left:838px;top:76.5px;width:10px;height:2px;background:#8f8f8f;"></div>
<svg style="position:absolute;left:860px;top:37px;" width="14" height="13" viewBox="0 0 14 13"><path d="M3 9.2H1.6A1 1 0 0 1 0.6 8.2V1.6A1 1 0 0 1 1.6 0.6H11.4A1 1 0 0 1 12.4 1.6V4" stroke="#dcdcdc" stroke-width="1.1" fill="none"/><path d="M5.5 5H12.4A1 1 0 0 1 13.4 6V10A1 1 0 0 1 12.4 11H9.5L7.8 12.5V11H5.5A1 1 0 0 1 4.5 10V6A1 1 0 0 1 5.5 5Z" stroke="#dcdcdc" stroke-width="1.1" fill="none"/><path d="M1.5 9.2L3 11" stroke="#dcdcdc" stroke-width="1.1"/></svg>
<div style="position:absolute;left:857.5px;top:56.5px;width:18.5px;height:1.5px;background:#4b3d8f;"></div>
<svg style="position:absolute;left:1576px;top:40px;" width="10" height="9" viewBox="0 0 10 9"><path d="M0.8 0.5L9.2 8.5M9.2 0.5L0.8 8.5" stroke="#d8d8d8" stroke-width="1.1"/></svg>
<div class="t" id="t78" style="left:870.60px;top:75.61px;font-size:9.5px;color:#cfcfcf;font-weight:400;font-family:'Liberation Sans', sans-serif;letter-spacing:-0.626px;">Chat</div>
<div class="t" id="t79" style="left:901.00px;top:75.61px;font-size:9.5px;color:#e0e0e0;font-weight:400;font-family:'Liberation Sans', sans-serif;letter-spacing:-0.257px;">Agent</div>
<div style="position:absolute;left:897.5px;top:82.3px;width:30px;height:3.6px;background:#7d5ce8;border-radius:1px"></div>
<svg style="position:absolute;left:1551px;top:70px;" width="13" height="10" viewBox="0 0 13 10"><path d="M0.5 1H1.5M0.5 3.6H1.5M0.5 6.2H1.5M0.5 8.8H1.5" stroke="#c8c8c8" stroke-width="1"/><path d="M3.2 1H12.5M3.2 3.6H12.5M3.2 6.2H12.5M3.2 8.8H12.5" stroke="#e0e0e0" stroke-width="1.2"/></svg>
<svg style="position:absolute;left:1577.5px;top:68.5px;" width="12" height="12" viewBox="0 0 12 12"><path d="M6 0.5V11.5M0.5 6H11.5" stroke="#e0e0e0" stroke-width="1.3"/></svg>
<div style="position:absolute;left:849px;top:96.3px;width:751px;height:1.6px;background:#333333;"></div>
<div style="position:absolute;left:849px;top:105.6px;width:751px;height:620px;overflow:hidden">
<div class="t" id="t80" style="left:20.70px;top:4.20px;font-size:14.7px;color:#e6e6e6;font-weight:700;font-family:'Liberation Sans', sans-serif;letter-spacing:0.229px;">Interfaz de Chat</div>
<div style="position:absolute;left:24.30px;top:29.80px;width:4.4px;height:4.4px;border-radius:50%;background:#d0d0d0"></div>
<div class="t" id="t81" style="left:43.50px;top:32.24px;font-size:12px;color:#cccccc;font-weight:400;font-family:'Liberation Sans', sans-serif;letter-spacing:-0.169px;">Interfaz modal que se muestra al hacer clic en el botón del hero banner.</div>
<div style="position:absolute;left:24.30px;top:53.10px;width:4.4px;height:4.4px;border-radius:50%;background:#d0d0d0"></div>
<div class="t" id="t82" style="left:43.50px;top:55.54px;font-size:12px;color:#cccccc;font-weight:400;font-family:'Liberation Sans', sans-serif;letter-spacing:-0.265px;">Área de mensajes con burbujas de chat diferenciadas para usuario y IA.</div>
<div style="position:absolute;left:24.30px;top:76.40px;width:4.4px;height:4.4px;border-radius:50%;background:#d0d0d0"></div>
<div class="t" id="t83" style="left:43.50px;top:78.84px;font-size:12px;color:#cccccc;font-weight:400;font-family:'Liberation Sans', sans-serif;letter-spacing:-0.138px;">Campo de entrada de texto con botón de envío.</div>
<div style="position:absolute;left:24.30px;top:99.70px;width:4.4px;height:4.4px;border-radius:50%;background:#d0d0d0"></div>
<div class="t" id="t84" style="left:43.50px;top:102.14px;font-size:12px;color:#cccccc;font-weight:400;font-family:'Liberation Sans', sans-serif;letter-spacing:-0.222px;">Indicador de "pensando..." durante la generación de respuestas.</div>
<div style="position:absolute;left:24.30px;top:123.00px;width:4.4px;height:4.4px;border-radius:50%;background:#d0d0d0"></div>
<div class="t" id="t85" style="left:43.50px;top:125.44px;font-size:12px;color:#cccccc;font-weight:400;font-family:'Liberation Sans', sans-serif;letter-spacing:-0.198px;">Mensaje de bienvenida inicial amigable.</div>
<div class="t" id="t86" style="left:20.80px;top:170.90px;font-size:14.7px;color:#e6e6e6;font-weight:700;font-family:'Liberation Sans', sans-serif;letter-spacing:-0.128px;">Funcionalidad JavaScript</div>
<div style="position:absolute;left:24.30px;top:196.20px;width:4.4px;height:4.4px;border-radius:50%;background:#d0d0d0"></div>
<div class="t" id="t87" style="left:43.50px;top:198.64px;font-size:12px;color:#cccccc;font-weight:400;font-family:'Liberation Sans', sans-serif;letter-spacing:-0.116px;">Manejo del menú móvil.</div>
<div style="position:absolute;left:24.30px;top:219.50px;width:4.4px;height:4.4px;border-radius:50%;background:#d0d0d0"></div>
<div class="t" id="t88" style="left:43.50px;top:221.94px;font-size:12px;color:#cccccc;font-weight:400;font-family:'Liberation Sans', sans-serif;letter-spacing:-0.168px;">Apertura y cierre de la interfaz de chat.</div>
<div style="position:absolute;left:24.30px;top:242.80px;width:4.4px;height:4.4px;border-radius:50%;background:#d0d0d0"></div>
<div class="t" id="t89" style="left:43.50px;top:245.24px;font-size:12px;color:#cccccc;font-weight:400;font-family:'Liberation Sans', sans-serif;letter-spacing:-0.355px;">Envío y recepción de mensajes.</div>
<div style="position:absolute;left:24.30px;top:266.10px;width:4.4px;height:4.4px;border-radius:50%;background:#d0d0d0"></div>
<div class="t" id="t90" style="left:43.50px;top:268.54px;font-size:12px;color:#cccccc;font-weight:400;font-family:'Liberation Sans', sans-serif;letter-spacing:-0.309px;">Simulación de respuestas basadas en palabras clave (para demostración).</div>
<div style="position:absolute;left:24.30px;top:289.40px;width:4.4px;height:4.4px;border-radius:50%;background:#d0d0d0"></div>
<div class="t" id="t91" style="left:43.50px;top:291.84px;font-size:12px;color:#cccccc;font-weight:400;font-family:'Liberation Sans', sans-serif;letter-spacing:-0.186px;">Estructura preparada para integración con OpenRouter usando modelos gratuitos.</div>
<div class="t" id="t92" style="left:20.80px;top:341.12px;font-size:15.8px;color:#e6e6e6;font-weight:700;font-family:'Liberation Sans', sans-serif;letter-spacing:0.374px;">Notas sobre la Implementación</div>
<div class="t" id="t93" style="left:27.40px;top:375.09px;font-size:12px;color:#cccccc;font-weight:400;font-family:'Liberation Sans', sans-serif;letter-spacing:-1.316px;">1.</div>
<div class="t" id="t94" style="left:43.90px;top:375.09px;font-size:12px;color:#cccccc;font-weight:400;font-family:'Liberation Sans', sans-serif;letter-spacing:-0.395px;"><b style="color:#e2e2e2">Imágenes:</b> He utilizado imágenes de Unsplash como placeholders. En la implementación final, deberías reemplazarlas con tus propias</div>
<div class="t" id="t95" style="left:43.90px;top:394.14px;font-size:12px;color:#cccccc;font-weight:400;font-family:'Liberation Sans', sans-serif;letter-spacing:-0.572px;">imágenes.</div>
<div class="t" id="t96" style="left:27.40px;top:426.84px;font-size:12px;color:#cccccc;font-weight:400;font-family:'Liberation Sans', sans-serif;letter-spacing:-1.316px;">2.</div>
<div class="t" id="t97" style="left:43.90px;top:426.84px;font-size:12px;color:#cccccc;font-weight:400;font-family:'Liberation Sans', sans-serif;letter-spacing:-0.360px;"><b style="color:#e2e2e2">Integración con OpenRouter:</b> El código incluye comentarios y estructura para la integración con OpenRouter, pero está comentado ya</div>
<div class="t" id="t98" style="left:43.90px;top:446.64px;font-size:12px;color:#cccccc;font-weight:400;font-family:'Liberation Sans', sans-serif;letter-spacing:-0.436px;">que requiere una API key. La implementación actual simula respuestas basadas en palabras clave.</div>
<div class="t" id="t99" style="left:27.40px;top:478.34px;font-size:12px;color:#cccccc;font-weight:400;font-family:'Liberation Sans', sans-serif;letter-spacing:-1.316px;">3.</div>
<div class="t" id="t100" style="left:43.90px;top:478.34px;font-size:12px;color:#cccccc;font-weight:400;font-family:'Liberation Sans', sans-serif;letter-spacing:-0.425px;"><b style="color:#e2e2e2">Diseño Responsive:</b> La página se adapta a diferentes tamaños de pantalla, con un menú hamburguesa para dispositivos móviles y una</div>
<div class="t" id="t101" style="left:43.90px;top:498.24px;font-size:12px;color:#cccccc;font-weight:400;font-family:'Liberation Sans', sans-serif;letter-spacing:-0.356px;">disposición de elementos que se reorganiza según el tamaño de la pantalla.</div>
<div class="t" id="t102" style="left:27.40px;top:530.24px;font-size:12px;color:#cccccc;font-weight:400;font-family:'Liberation Sans', sans-serif;letter-spacing:-1.316px;">4.</div>
<div class="t" id="t103" style="left:43.90px;top:530.24px;font-size:12px;color:#cccccc;font-weight:400;font-family:'Liberation Sans', sans-serif;letter-spacing:-0.428px;"><b style="color:#e2e2e2">Animaciones y Transiciones:</b> Se han incluido algunas animaciones sutiles para mejorar la experiencia de usuario, como el efecto de</div>
<div class="t" id="t104" style="left:43.90px;top:549.54px;font-size:12px;color:#cccccc;font-weight:400;font-family:'Liberation Sans', sans-serif;letter-spacing:-0.316px;">pulso en el botón principal y la animación de "pensando..." en el chat.</div>
<div class="t" id="t105" style="left:20.30px;top:582.64px;font-size:12px;color:#cccccc;font-weight:400;font-family:'Liberation Sans', sans-serif;letter-spacing:-0.382px;">Este diseño proporciona una base sólida para la página de inicio de idearegalos.com. Cuando estés listo para la segunda etapa de</div>
<div class="t" id="t106" style="left:20.30px;top:601.64px;font-size:12px;color:#cccccc;font-weight:400;font-family:'Liberation Sans', sans-serif;letter-spacing:-0.352px;">integración con WordPress, podremos adaptar este diseño para que funcione como un tema o plantilla de WordPress.</div>
</div>
<div style="position:absolute;left:1593.5px;top:559.7px;width:5.5px;height:155px;background:#3c3c3c;"></div>
<svg style="position:absolute;left:1594px;top:104px;" width="5" height="3" viewBox="0 0 5 3"><path d="M0 3L2.5 0L5 3Z" fill="#4a4a4a"/></svg>
<svg style="position:absolute;left:1594px;top:716px;" width="5" height="3" viewBox="0 0 5 3"><path d="M0 0L2.5 3L5 0Z" fill="#4a4a4a"/></svg>
<svg style="position:absolute;left:865px;top:737px;" width="9" height="13" viewBox="0 0 9 13"><path d="M6.8 4.5V9.3A2.3 2.3 0 0 1 2.2 9.3V3.2A1.6 1.6 0 0 1 5.4 3.2V9A0.9 0.9 0 0 1 3.6 9V4.5" stroke="#c0c0c0" stroke-width="1.2" fill="none" stroke-linecap="round"/></svg>
<div style="position:absolute;left:861.5px;top:759.3px;width:723.5px;height:69.7px;box-sizing:border-box;border:2.4px solid #46387a;border-radius:7px;background:#2d2d2d;box-shadow:0 -2px 4px rgba(0,0,0,0.35)"></div>
<div style="position:absolute;left:926px;top:740.6px;width:94.6px;height:20px;box-sizing:border-box;border:1px solid #3c3c3c;border-radius:3px;background:#202020"></div>
<div class="t" id="t107" style="left:933.60px;top:751.43px;font-size:10.3px;color:#dddddd;font-weight:400;font-family:'Liberation Sans', sans-serif;letter-spacing:-0.135px;">Write something...</div>
<div class="t" id="t108" style="left:869.00px;top:773.12px;font-size:11.2px;color:#d6d6d6;font-weight:400;font-family:'Liberation Sans', sans-serif;letter-spacing:-0.211px;">excelente, me gustó como primera version, lo que si quiero que el chat sea la segunda sección y no quiero que sea una ventana emergente, quiero</div>
<div class="t" id="t109" style="left:869.00px;top:788.12px;font-size:11.2px;color:#d6d6d6;font-weight:400;font-family:'Liberation Sans', sans-serif;letter-spacing:-0.204px;">que sea parte del diseño de la web</div>
<div style="position:absolute;left:1035.2px;top:781.5px;width:1px;height:14px;background:#e0e0e0;"></div>
<svg style="position:absolute;left:913.5px;top:772px;" width="6" height="13" viewBox="0 0 6 13"><path d="M1 0.5H5M3 0.5V12.5M1 12.5H5" stroke="#d8d8d8" stroke-width="0.9" fill="none"/></svg>
<svg style="position:absolute;left:869px;top:811px;" width="12" height="12" viewBox="0 0 12 12"><circle cx="6" cy="6" r="5.6" fill="#e8775a"/><circle cx="6" cy="5.5" r="3" fill="#f3e6e0"/><path d="M4.2 10.5L6 7.5L7.8 10.5" fill="#f3e6e0"/></svg>
<div class="t" id="t110" style="left:887.00px;top:817.26px;font-size:10.8px;color:#d0d0d0;font-weight:400;font-family:'Liberation Sans', sans-serif;letter-spacing:-0.493px;">Sonnet 3.7</div>
<svg style="position:absolute;left:942.5px;top:811px;" width="12" height="12" viewBox="0 0 12 12"><path d="M5 1L6.2 4.6L9.8 5.8L6.2 7L5 10.6L3.8 7L0.2 5.8L3.8 4.6Z" fill="#f2c23a"/><path d="M9.5 0.5L10 2L11.5 2.5L10 3L9.5 4.5L9 3L7.5 2.5L9 2Z" fill="#f2c23a"/></svg>
<svg style="position:absolute;left:963.5px;top:814px;" width="10" height="6" viewBox="0 0 10 6"><path d="M1 5L5 1L9 5" stroke="#bdbdbd" stroke-width="1.2" fill="none"/></svg>
<div style="position:absolute;left:1550px;top:794px;width:26px;height:26px;border-radius:50%;background:#3b2a7a"></div>
<svg style="position:absolute;left:1556px;top:800.5px;" width="14" height="13" viewBox="0 0 14 13"><path d="M1.2 1.2L12.8 6.5L1.2 11.8L3.6 6.5Z" stroke="#dcd4ff" stroke-width="1.2" fill="none" stroke-linejoin="round"/><path d="M3.6 6.5H8" stroke="#dcd4ff" stroke-width="1.1"/></svg>
<div style="position:absolute;left:0px;top:841px;width:1600px;height:19px;background:#151515;"></div>
<div style="position:absolute;left:0px;top:841.5px;width:28.5px;height:18.5px;background:#42237f;"></div>
<svg style="position:absolute;left:0px;top:841px;" width="28" height="19" viewBox="0 0 28 19"><path d="M10.5 7.9L13.9 11.25L10.5 14.6M18 4.9L15 8.25L18 11.6" stroke="#dccfff" stroke-width="1.3" fill="none"/></svg>
<svg style="position:absolute;left:35px;top:845px;" width="12" height="12" viewBox="0 0 12 12"><circle cx="6" cy="6" r="5.2" stroke="#c8c8c8" stroke-width="1.1" fill="none"/><path d="M3.8 3.8L8.2 8.2M8.2 3.8L3.8 8.2" stroke="#c8c8c8" stroke-width="1.1"/></svg>
<div class="t" id="t111" style="left:49.60px;top:851.66px;font-size:10.5px;color:#cccccc;font-weight:400;font-family:'Liberation Sans', sans-serif;letter-spacing:0.456px;">0</div>
<svg style="position:absolute;left:58px;top:845px;" width="12" height="11" viewBox="0 0 12 11"><path d="M6 0.8L11.3 10.3H0.7Z" stroke="#c8c8c8" stroke-width="1.1" fill="none" stroke-linejoin="round"/><path d="M6 4V7.2M6 8.3V9.2" stroke="#c8c8c8" stroke-width="1.1"/></svg>
<div class="t" id="t112" style="left:71.50px;top:851.66px;font-size:10.5px;color:#cccccc;font-weight:400;font-family:'Liberation Sans', sans-serif;letter-spacing:0.456px;">0</div>
<svg style="position:absolute;left:91.5px;top:844.5px;" width="12" height="12" viewBox="0 0 12 12"><path d="M6 5V11.5M3.5 11.5L6 5L8.5 11.5M2.5 2A5 5 0 0 0 2.5 8.5M9.5 2A5 5 0 0 1 9.5 8.5M4.2 3.5A2.6 2.6 0 0 0 4.2 7M7.8 3.5A2.6 2.6 0 0 1 7.8 7" stroke="#c8c8c8" stroke-width="1.1" fill="none"/></svg>
<div class="t" id="t113" style="left:104.90px;top:851.66px;font-size:10.5px;color:#cccccc;font-weight:400;font-family:'Liberation Sans', sans-serif;letter-spacing:0.456px;">0</div>
<div class="t" id="t114" style="left:1260.50px;top:851.66px;font-size:10.5px;color:#cccccc;font-weight:400;font-family:'Liberation Sans', sans-serif;letter-spacing:-0.500px;">Ln 1, Col 1</div>
<div class="t" id="t115" style="left:1319.50px;top:851.66px;font-size:10.5px;color:#cccccc;font-weight:400;font-family:'Liberation Sans', sans-serif;letter-spacing:-0.675px;">Spaces: 4</div>
<div class="t" id="t116" style="left:1373.75px;top:851.66px;font-size:10.5px;color:#cccccc;font-weight:400;font-family:'Liberation Sans', sans-serif;letter-spacing:-0.662px;">UTF-8</div>
<div class="t" id="t117" style="left:1413.75px;top:851.66px;font-size:10.5px;color:#cccccc;font-weight:400;font-family:'Liberation Sans', sans-serif;letter-spacing:-1.466px;">LF</div>
<div class="t" id="t118" style="left:1451.00px;top:851.66px;font-size:10.5px;color:#cccccc;font-weight:400;font-family:'Liberation Sans', sans-serif;letter-spacing:-0.470px;">JavaScript</div>
<div class="t" id="t119" style="left:1520.75px;top:851.66px;font-size:10.5px;color:#cccccc;font-weight:400;font-family:'Liberation Sans', sans-serif;letter-spacing:-0.572px;">CodeLLM</div>
<div class="t" id="t120" style="left:1436.00px;top:851.83px;font-size:10px;color:#cccccc;font-weight:400;font-family:'Liberation Sans', sans-serif;letter-spacing:0.166px;">{ }</div>
<svg style="position:absolute;left:1507px;top:845px;" width="11" height="11" viewBox="0 0 11 11"><path d="M4 0.8L5 3.3L7.5 4.3L5 5.3L4 7.8L3 5.3L0.5 4.3L3 3.3Z" stroke="#c8c8c8" stroke-width="1" fill="none"/><path d="M8.5 6.5L9.2 8.2L10.5 8.7L9.2 9.2L8.5 10.5L7.8 9.2L6.5 8.7L7.8 8.2Z" fill="#c8c8c8"/></svg>
<svg style="position:absolute;left:1576.5px;top:844px;" width="11" height="13" viewBox="0 0 11 13"><path d="M5.5 1.5A3.3 3.3 0 0 0 2.2 4.8V8.2L1 10H10L8.8 8.2V4.8A3.3 3.3 0 0 0 5.5 1.5Z" stroke="#c8c8c8" stroke-width="1.1" fill="none"/><path d="M4.3 11.5H6.7" stroke="#c8c8c8" stroke-width="1.1"/><circle cx="8.8" cy="2.6" r="2.2" fill="#c8c8c8"/></svg>
<div style="position:absolute;left:0;top:860px;width:1600px;height:40px;background:linear-gradient(90deg,#e0eaf6 0%,#e4edf8 20%,#d7e2f7 28%,#dce3f5 45%,#dfe3f2 68%,#d9deea 74%,#e2eaf6 82%,#e4ebf5 100%)"></div>
<svg style="position:absolute;left:15px;top:866px;" width="24" height="24" viewBox="0 0 24 24"><defs><radialGradient id="sun" cx="0.4" cy="0.4" r="0.6"><stop offset="0" stop-color="#ffd24a"/><stop offset="1" stop-color="#f59a1b"/></radialGradient></defs><circle cx="10.5" cy="12" r="8" fill="url(#sun)"/><path d="M4.5 22.5A3.6 3.6 0 0 1 4 15.6A5 5 0 0 1 13.5 14.2A4 4 0 0 1 19.5 17.5A2.6 2.6 0 0 1 19.5 22.5Z" fill="#eef4fb" stroke="#bfd0e6" stroke-width="0.7"/></svg>
<div style="position:absolute;left:25.4px;top:864.8px;width:13px;height:13px;border-radius:50%;background:#c42b1c"></div>
<div class="t" id="t121" style="left:28.40px;top:872.28px;font-size:9px;color:#ffffff;font-weight:700;font-family:'Liberation Sans', sans-serif;letter-spacing:0.784px;">4</div>
<div class="t" id="t122" style="left:42.50px;top:873.73px;font-size:10.3px;color:#1f1f1f;font-weight:400;font-family:'Liberation Sans', sans-serif;letter-spacing:-0.739px;">30°C</div>
<div class="t" id="t123" style="left:42.30px;top:887.13px;font-size:10.3px;color:#5b5b5b;font-weight:400;font-family:'Liberation Sans', sans-serif;letter-spacing:-0.242px;">Parc ensolarado</div>
<svg style="position:absolute;left:458.5px;top:870px;" width="20" height="20" viewBox="0 0 20 20"><defs><linearGradient id="wg" x1="0" y1="0" x2="1" y2="1"><stop offset="0" stop-color="#3ccbf4"/><stop offset="1" stop-color="#1273d6"/></linearGradient></defs><rect x="0" y="0" width="9.5" height="9.5" fill="url(#wg)"/><rect x="10.5" y="0" width="9.5" height="9.5" fill="url(#wg)"/><rect x="0" y="10.5" width="9.5" height="9.5" fill="url(#wg)"/><rect x="10.5" y="10.5" width="9.5" height="9.5" fill="url(#wg)"/></svg>
<div style="position:absolute;left:490.3px;top:868px;width:181.4px;height:24.3px;box-sizing:border-box;border-radius:12.2px;background:#f3f5fa;border:1px solid #d6dce6"></div>
<svg style="position:absolute;left:498.5px;top:873.5px;" width="13" height="13" viewBox="0 0 13 13"><circle cx="5.6" cy="5.6" r="4.5" stroke="#2b2b2b" stroke-width="1.5" fill="none"/><path d="M8.8 8.8L12.3 12.3" stroke="#2b2b2b" stroke-width="1.6"/></svg>
<div class="t" id="t124" style="left:520.30px;top:880.38px;font-size:11.3px;color:#5d5d5d;font-weight:400;font-family:'Liberation Sans', sans-serif;letter-spacing:-0.084px;">Búsqueda</div>
<svg style="position:absolute;left:632px;top:870px;" width="32" height="20" viewBox="0 0 32 20"><ellipse cx="16" cy="12" rx="14" ry="4" fill="#cfd6de"/><path d="M2 12A14 7.5 0 0 0 30 12Z" fill="#e8ecf0" stroke="#b8c0ca" stroke-width="0.6"/><circle cx="9" cy="10" r="3" fill="#e8a33a"/><circle cx="14" cy="9" r="2.6" fill="#5aa845"/><circle cx="19" cy="10" r="2.6" fill="#d84a3a"/><circle cx="23" cy="10.5" r="2" fill="#f2c94c"/><path d="M18 9L27 1.5" stroke="#9aa3ad" stroke-width="1.2"/></svg>
<svg style="position:absolute;left:682px;top:871px;" width="20" height="18" viewBox="0 0 20 18"><rect x="7" y="0" width="13" height="12" fill="#f7f7f7" stroke="#d0d0d0" stroke-width="0.6"/><rect x="4" y="3" width="12" height="11" fill="#bdbdbd"/><rect x="0" y="6" width="13" height="12" fill="#1a1a1a"/><rect x="5" y="6" width="8" height="7" fill="#9d9d9d"/></svg>
<svg style="position:absolute;left:718.5px;top:870.5px;" width="22" height="19" viewBox="0 0 22 19"><defs><linearGradient id="cpa" x1="0" y1="0" x2="0" y2="1"><stop offset="0" stop-color="#2f9ef0"/><stop offset="0.45" stop-color="#3cc28a"/><stop offset="1" stop-color="#f5a623"/></linearGradient><linearGradient id="cpb" x1="0" y1="0" x2="0" y2="1"><stop offset="0" stop-color="#2a5fe0"/><stop offset="0.5" stop-color="#b04be8"/><stop offset="1" stop-color="#f0557a"/></linearGradient></defs><path d="M8.5 1.5Q10.5 0.5 11.5 2.5L7.8 15.5Q7 18 4.5 18Q1.5 18 1 15.5Q0.8 14 1.8 12L6.5 3Q7.2 2 8.5 1.5Z" fill="url(#cpa)"/><path d="M13.5 1.2Q16.5 1 17.5 3.2L21 9.5Q21.5 11 20.8 12.5L16 17Q14.5 18.5 12.5 17.8Q10.5 17 11 15L14.8 3.5Q14.5 2 13.5 1.2Z" fill="url(#cpb)"/><path d="M9.5 8L13 8L11.5 13L8 13Z" fill="#f07a3a" opacity="0.85"/></svg>
<svg style="position:absolute;left:755px;top:870.5px;" width="21" height="19" viewBox="0 0 21 19"><path d="M0.5 2A1.5 1.5 0 0 1 2 0.5H7.5L9.5 2.5H19A1.5 1.5 0 0 1 20.5 4V17A1.5 1.5 0 0 1 19 18.5H2A1.5 1.5 0 0 1 0.5 17Z" fill="#f8cd4c"/><path d="M0.5 5H20.5V17A1.5 1.5 0 0 1 19 18.5H2A1.5 1.5 0 0 1 0.5 17Z" fill="#fbe07a"/><rect x="5" y="11.5" width="11" height="5" rx="1" fill="#2a8ad8"/></svg>
<div style="position:absolute;left:762.5px;top:893.5px;width:5px;height:1.8px;background:#7a7f88;border-radius:1px"></div>
<svg style="position:absolute;left:792px;top:870.5px;" width="21" height="19" viewBox="0 0 21 19"><defs><linearGradient id="eg" x1="0.1" y1="1" x2="0.9" y2="0"><stop offset="0" stop-color="#0b4f9c"/><stop offset="0.55" stop-color="#1688d4"/><stop offset="0.8" stop-color="#38c0b8"/><stop offset="1" stop-color="#6ad35a"/></linearGradient></defs><circle cx="10.5" cy="9.5" r="9.3" fill="url(#eg)"/><path d="M7 10.5Q7.5 6.5 11.5 6.5Q14.8 6.8 15.5 9.5Q13.5 8.5 11.8 9.2Q9.8 10.2 10.5 12.8Q11.5 15.5 16 15.2Q12.5 18.5 9 16.5Q6.5 14.5 7 10.5Z" fill="#eaf6fc"/></svg>
<svg style="position:absolute;left:829px;top:870px;" width="20.5" height="20" viewBox="0 0 20.5 20"><rect width="20.5" height="20" fill="#0a77c8"/><circle cx="10.25" cy="10" r="7.2" stroke="#ffffff" stroke-width="1.2" fill="none"/><text x="10.25" y="11.8" font-family="Liberation Sans" font-size="5" font-weight="bold" fill="#ffffff" text-anchor="middle">DELL</text></svg>
<svg style="position:absolute;left:866px;top:870.5px;" width="19.5" height="19.5" viewBox="0 0 19.5 19.5"><path d="M6 5V3A3.5 3 0 0 1 13.5 3V5" stroke="#2a6bb8" stroke-width="1.4" fill="none"/><rect x="0.5" y="4.5" width="18.5" height="15" rx="2" fill="#1f5fb0"/><rect x="5.5" y="8" width="3.8" height="3.8" fill="#f35325"/><rect x="10.2" y="8" width="3.8" height="3.8" fill="#81bc06"/><rect x="5.5" y="12.7" width="3.8" height="3.8" fill="#05a6f0"/><rect x="10.2" y="12.7" width="3.8" height="3.8" fill="#ffba08"/></svg>
<svg style="position:absolute;left:902.5px;top:870px;" width="20" height="20" viewBox="0 0 20 20"><circle cx="10" cy="10" r="9.8" fill="#db4437"/><path d="M10 10L1.5 5A9.8 9.8 0 0 0 10 19.8Z" fill="#0f9d58"/><path d="M10 10L10 19.8A9.8 9.8 0 0 0 18.5 5Z" fill="#f4b400"/><path d="M10 10L1.5 5A9.8 9.8 0 0 1 18.5 5Z" fill="#db4437"/><circle cx="10" cy="10" r="4.6" fill="#ffffff"/><circle cx="10" cy="10" r="3.6" fill="#4285f4"/></svg>
<div style="position:absolute;left:909.5px;top:893.5px;width:5px;height:1.8px;background:#7a7f88;border-radius:1px"></div>
<svg style="position:absolute;left:940.5px;top:871.5px;" width="17" height="17" viewBox="0 0 17 17"><circle cx="8.5" cy="8.5" r="8.5" fill="#171717"/><path d="M6.2 3.2A3 3 0 0 1 9.5 6.5M12.8 8.5A3 3 0 0 1 10.5 12.5M4.5 12.8A3 3 0 0 1 4 8.2" stroke="#e6e6e6" stroke-width="1.5" fill="none"/><circle cx="8.5" cy="8.5" r="1.2" fill="#e6e6e6"/></svg>
<svg style="position:absolute;left:975.5px;top:870px;" width="21" height="20" viewBox="0 0 21 20"><path d="M10.5 1A9 9 0 0 1 10.5 19A9 9 0 0 1 6 17.8L1.5 19L2.8 14.8A9 9 0 0 1 10.5 1Z" fill="#ffffff" stroke="#25a35a" stroke-width="1.8"/><path d="M7 6.5Q6 8 7.5 10.5Q9.5 13 12.5 13.8Q13.5 13.6 14 12.5L12.5 11.5L11.5 12.2Q9.5 11.2 8.5 9.5L9.2 8.5L8.2 6.5Z" fill="#25a35a"/></svg>
<svg style="position:absolute;left:1012px;top:870px;" width="21" height="18" viewBox="0 0 21 18"><path d="M2.5 12V9A8 8 0 0 1 18.5 9V12" stroke="#1a2fd0" stroke-width="2.2" fill="none"/><rect x="0.5" y="9.5" width="4" height="8" rx="2" fill="#1a2fd0"/><rect x="16.5" y="9.5" width="4" height="8" rx="2" fill="#1a2fd0"/><path d="M5 13H16" stroke="#e8232a" stroke-width="1.6"/><path d="M6 13L7 9L8 15L9 7L10 16L11 8L12 15L13 9L14 14L15 11" stroke="#f7b500" stroke-width="1.2" fill="none"/></svg>
<div style="position:absolute;left:1043px;top:864.5px;width:32px;height:31.5px;border-radius:4px;background:rgba(255,255,255,0.55)"></div>
<svg style="position:absolute;left:1049px;top:870px;" width="20" height="20" viewBox="0 0 20 20"><rect width="20" height="20" fill="#0c1424"/><rect x="3" y="3" width="1.6" height="14" fill="#c8d0e0"/><rect x="7.5" y="2" width="1.6" height="16" fill="#c8d0e0"/><rect x="12" y="3" width="1.6" height="14" fill="#c8d0e0"/><rect x="16" y="4" width="1.4" height="12" fill="#c8d0e0"/><rect x="2" y="10" width="3.6" height="2" fill="#3fc7e8"/><rect x="6.5" y="6" width="3.6" height="2" fill="#e040a0"/><rect x="11" y="12" width="3.6" height="2" fill="#3fc7e8"/><rect x="15" y="7" width="3.4" height="2" fill="#a040e0"/></svg>
<div style="position:absolute;left:1053px;top:894px;width:12px;height:2px;background:#5c6bc0;border-radius:1px"></div>
<svg style="position:absolute;left:1086px;top:870px;" width="20" height="20" viewBox="0 0 20 20"><rect width="20" height="20" rx="3" fill="#15171a"/><path d="M6 5Q10 3 14 5L13 7Q10 6 7 7.5Z M6.5 9Q10 7.5 14 9.5L13 11.5Q10 10.5 7.5 11.5Z M7.5 13Q10.5 12 13.5 14L12 16Q10 15 8.5 15.5Z" fill="#3ddc97"/></svg>
<svg style="position:absolute;left:1122px;top:870px;" width="20.5" height="20" viewBox="0 0 20.5 20"><defs><linearGradient id="mg" x1="0" y1="0" x2="1" y2="1"><stop offset="0" stop-color="#2d6de0"/><stop offset="0.5" stop-color="#4a9af0"/><stop offset="1" stop-color="#2a4fc8"/></linearGradient></defs><rect width="20.5" height="20" fill="url(#mg)"/><text x="10.25" y="12.5" font-family="Liberation Sans" font-size="7.5" font-weight="bold" fill="#ffffff" text-anchor="middle">mold</text></svg>
<div style="position:absolute;left:1129.5px;top:893.5px;width:5px;height:1.8px;background:#7a7f88;border-radius:1px"></div>
<svg style="position:absolute;left:1388.5px;top:876.5px;" width="10" height="6" viewBox="0 0 10 6"><path d="M1 5L5 1L9 5" stroke="#2b2b2b" stroke-width="1.2" fill="none"/></svg>
<svg style="position:absolute;left:1412.5px;top:875px;" width="15" height="10" viewBox="0 0 15 10"><path d="M3.5 9.5A3 3 0 0 1 3 3.6A4.5 4.5 0 0 1 11.3 3.3A3.2 3.2 0 0 1 12 9.5Z" fill="#f4f4f4" stroke="#3a3a3a" stroke-width="1.1"/></svg>
<svg style="position:absolute;left:1441px;top:873px;" width="10" height="14" viewBox="0 0 10 14"><rect x="2.8" y="0.6" width="4.4" height="8" rx="2.2" stroke="#3a3a8a" stroke-width="1.1" fill="none"/><path d="M1 6.5A4 4 0 0 0 9 6.5M5 10.5V13" stroke="#3a3a8a" stroke-width="1.1" fill="none"/></svg>
<div class="t" id="t125" style="left:1470.50px;top:874.13px;font-size:10px;color:#1f1f1f;font-weight:400;font-family:'Liberation Sans', sans-serif;letter-spacing:-1.858px;">ESP</div>
<div class="t" id="t126" style="left:1473.00px;top:887.83px;font-size:10px;color:#1f1f1f;font-weight:400;font-family:'Liberation Sans', sans-serif;letter-spacing:-1.844px;">ES</div>
<svg style="position:absolute;left:1503px;top:874px;" width="14" height="11" viewBox="0 0 14 11"><path d="M0.8 4A9 9 0 0 1 13.2 4M2.8 6.2A6 6 0 0 1 11.2 6.2M4.8 8.3A3 3 0 0 1 9.2 8.3" stroke="#1f1f1f" stroke-width="1.1" fill="none"/><circle cx="7" cy="10" r="0.9" fill="#1f1f1f"/></svg>
<svg style="position:absolute;left:1523px;top:874px;" width="14" height="12" viewBox="0 0 14 12"><path d="M1 4.2H3.5L6.8 1.2V10.8L3.5 7.8H1Z" stroke="#1f1f1f" stroke-width="1.1" fill="none" stroke-linejoin="round"/><path d="M8.8 4A2.6 2.6 0 0 1 8.8 8M10.6 2.5A4.8 4.8 0 0 1 10.6 9.5M12.3 1A7 7 0 0 1 12.3 11" stroke="#1f1f1f" stroke-width="1" fill="none"/></svg>
<svg style="position:absolute;left:1543px;top:873.5px;" width="15" height="13" viewBox="0 0 15 13"><path d="M1 2L3 0.8" stroke="#1f1f1f" stroke-width="1.1"/><rect x="1" y="3" width="12" height="7" rx="1" stroke="#1f1f1f" stroke-width="1.1" fill="none"/><rect x="2.5" y="4.5" width="6" height="4" fill="#1f1f1f"/><path d="M9 9L13.5 12.5L11 12.5" stroke="#1f1f1f" stroke-width="1.2" fill="none"/></svg>
<svg style="position:absolute;left:1571px;top:874.5px;" width="12" height="13" viewBox="0 0 12 13"><path d="M6 0.8A4 4 0 0 0 2 4.8V8.3L0.6 10.5H11.4L10 8.3V4.8A4 4 0 0 0 6 0.8Z" fill="#1c2a6a"/><path d="M4.3 11.6A1.8 1.8 0 0 0 7.7 11.6" fill="#1c2a6a"/></svg>
</body></html>
